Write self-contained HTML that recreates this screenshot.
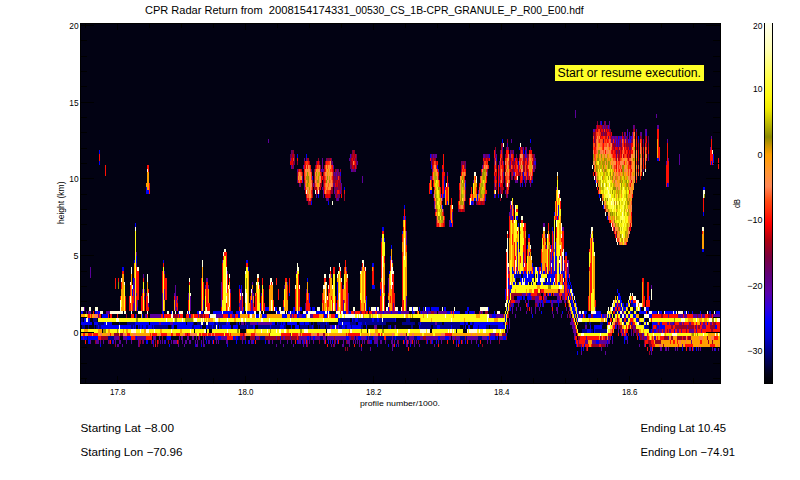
<!DOCTYPE html>
<html><head><meta charset="utf-8"><style>
html,body{margin:0;padding:0;background:#fff;width:800px;height:480px;overflow:hidden}
svg{position:absolute;left:0;top:0;display:block}
text{font-family:"Liberation Sans",sans-serif;fill:#000}
</style></head><body>
<svg width="800" height="480" viewBox="0 0 800 480">
<rect x="0" y="0" width="800" height="480" fill="#fff"/>
<g shape-rendering="crispEdges">
<rect x="81" y="24" width="639" height="359" fill="#020213"/>
<path fill="#00008b" d="M516 274h4v4h-4zM536 274h1v4h-1zM547 274h1v4h-1zM517 282h1v3h-1zM532 282h1v3h-1zM544 282h2v3h-2zM550 282h1v3h-1zM567 282h1v3h-1zM568 293h1v3h-1zM569 296h1v4h-1zM570 300h1v3h-1zM571 303h1v4h-1zM573 303h1v4h-1zM631 303h2v4h-2zM613 307h1v4h-1zM617 307h1v4h-1zM634 307h2v4h-2zM575 311h1v3h-1zM615 311h2v3h-2zM618 311h1v3h-1zM631 311h2v3h-2zM636 311h1v3h-1zM576 314h1v4h-1zM614 314h1v4h-1zM620 314h2v4h-2zM81 318h2v4h-2zM93 318h4v4h-4zM338 318h1v4h-1zM340 318h10v4h-10zM353 318h2v4h-2zM358 318h14v4h-14zM374 318h3v4h-3zM379 318h3v4h-3zM383 318h12v4h-12zM406 318h4v4h-4zM622 318h2v4h-2zM626 318h2v4h-2zM638 318h1v4h-1zM98 322h6v3h-6zM119 322h1v3h-1zM127 322h8v3h-8zM193 322h1v3h-1zM197 322h4v3h-4zM203 322h2v3h-2zM208 322h1v3h-1zM214 322h2v3h-2zM218 322h8v3h-8zM236 322h2v3h-2zM246 322h4v3h-4zM278 322h3v3h-3zM282 322h1v3h-1zM285 322h1v3h-1zM299 322h1v3h-1zM304 322h1v3h-1zM309 322h2v3h-2zM313 322h1v3h-1zM317 322h9v3h-9zM327 322h2v3h-2zM350 322h6v3h-6zM362 322h3v3h-3zM366 322h20v3h-20zM402 322h13v3h-13zM418 322h2v3h-2zM421 322h14v3h-14zM437 322h5v3h-5zM444 322h16v3h-16zM464 322h2v3h-2zM472 322h2v3h-2zM503 322h2v3h-2zM585 322h2v3h-2zM589 322h2v3h-2zM600 322h3v3h-3zM624 322h2v3h-2zM639 322h2v3h-2zM643 322h1v3h-1zM82 325h3v4h-3zM88 325h1v4h-1zM94 325h1v4h-1zM96 325h2v4h-2zM99 325h2v4h-2zM131 325h2v4h-2zM134 325h1v4h-1zM139 325h1v4h-1zM142 325h1v4h-1zM146 325h2v4h-2zM152 325h1v4h-1zM154 325h14v4h-14zM171 325h1v4h-1zM192 325h2v4h-2zM200 325h1v4h-1zM208 325h4v4h-4zM213 325h3v4h-3zM220 325h2v4h-2zM240 325h7v4h-7zM248 325h5v4h-5zM258 325h12v4h-12zM271 325h9v4h-9zM284 325h2v4h-2zM300 325h8v4h-8zM309 325h3v4h-3zM313 325h1v4h-1zM318 325h1v4h-1zM320 325h5v4h-5zM326 325h4v4h-4zM339 325h3v4h-3zM345 325h2v4h-2zM351 325h1v4h-1zM361 325h2v4h-2zM382 325h1v4h-1zM388 325h2v4h-2zM394 325h1v4h-1zM411 325h2v4h-2zM420 325h11v4h-11zM433 325h4v4h-4zM440 325h11v4h-11zM452 325h8v4h-8zM463 325h1v4h-1zM478 325h1v4h-1zM486 325h3v4h-3zM490 325h8v4h-8zM645 325h4v4h-4zM582 329h5v4h-5zM591 329h2v4h-2zM595 329h12v4h-12zM649 329h2v4h-2zM87 336h1v4h-1zM108 336h6v4h-6zM166 336h1v4h-1zM206 336h9v4h-9zM238 336h2v4h-2zM255 336h1v4h-1zM260 336h5v4h-5zM310 336h1v4h-1zM320 336h3v4h-3zM355 336h1v4h-1zM367 336h1v4h-1zM369 336h4v4h-4zM378 336h6v4h-6zM386 336h6v4h-6zM393 336h2v4h-2zM396 336h9v4h-9zM407 336h2v4h-2zM414 336h3v4h-3zM460 336h5v4h-5zM466 336h1v4h-1zM478 336h4v4h-4zM495 336h2v4h-2z"/>
<path fill="#0000cb" d="M630 136h1v3h-1z"/>
<path fill="#0000f5" d="M601 121h1v4h-1zM618 136h1v3h-1zM638 136h1v3h-1zM502 139h1v4h-1zM530 139h1v4h-1zM519 147h1v3h-1zM99 150h1v4h-1zM523 150h1v4h-1zM297 154h1v4h-1zM306 154h1v4h-1zM430 154h1v4h-1zM489 154h1v4h-1zM713 154h1v4h-1zM514 158h1v3h-1zM657 158h2v3h-2zM713 158h1v3h-1zM99 161h1v4h-1zM518 161h1v4h-1zM711 161h1v4h-1zM713 161h1v4h-1zM431 165h1v4h-1zM437 165h1v4h-1zM523 172h1v4h-1zM523 176h1v4h-1zM444 180h1v3h-1zM524 180h1v3h-1zM532 180h1v3h-1zM595 180h1v3h-1zM444 183h1v4h-1zM465 183h1v4h-1zM499 183h1v4h-1zM522 183h1v4h-1zM667 183h1v4h-1zM146 187h1v3h-1zM344 187h1v3h-1zM444 187h1v3h-1zM703 187h2v3h-2zM146 190h3v4h-3zM430 190h2v4h-2zM444 190h1v4h-1zM318 194h1v4h-1zM441 194h1v4h-1zM443 194h2v4h-2zM477 194h1v4h-1zM494 194h1v4h-1zM498 194h1v4h-1zM599 194h1v4h-1zM474 198h2v3h-2zM477 198h1v3h-1zM485 198h1v3h-1zM311 201h1v4h-1zM328 201h1v4h-1zM447 201h1v4h-1zM471 201h2v4h-2zM404 205h1v4h-1zM442 205h1v4h-1zM558 205h1v4h-1zM603 205h1v4h-1zM558 209h1v3h-1zM554 212h1v4h-1zM558 212h1v4h-1zM703 212h1v4h-1zM403 216h1v4h-1zM405 216h1v4h-1zM512 216h1v4h-1zM516 216h2v4h-2zM557 216h1v4h-1zM607 216h1v4h-1zM450 220h1v3h-1zM135 223h1v4h-1zM450 223h2v4h-2zM518 223h1v4h-1zM382 227h2v4h-2zM552 227h1v4h-1zM402 231h1v3h-1zM553 231h1v3h-1zM528 234h2v4h-2zM384 238h1v4h-1zM517 242h1v3h-1zM555 242h1v3h-1zM391 245h1v4h-1zM527 245h1v4h-1zM551 245h1v4h-1zM555 245h1v4h-1zM519 249h1v3h-1zM555 249h1v3h-1zM702 249h2v3h-2zM552 252h1v4h-1zM555 252h1v4h-1zM565 252h2v4h-2zM136 256h1v4h-1zM390 256h1v4h-1zM552 256h1v4h-1zM555 256h2v4h-2zM134 260h1v3h-1zM136 260h1v3h-1zM163 260h1v3h-1zM246 260h2v3h-2zM552 260h1v3h-1zM555 260h1v3h-1zM372 263h2v4h-2zM532 263h1v4h-1zM541 263h1v4h-1zM552 263h1v4h-1zM555 263h1v4h-1zM122 267h2v4h-2zM248 267h1v4h-1zM512 267h1v4h-1zM533 267h2v4h-2zM537 267h2v4h-2zM541 267h1v4h-1zM552 267h1v4h-1zM555 267h1v4h-1zM559 267h1v4h-1zM389 271h1v3h-1zM512 271h2v3h-2zM516 271h1v3h-1zM518 271h1v3h-1zM521 271h2v3h-2zM524 271h2v3h-2zM528 271h1v3h-1zM530 271h1v3h-1zM533 271h2v3h-2zM538 271h1v3h-1zM541 271h1v3h-1zM543 271h2v3h-2zM549 271h1v3h-1zM552 271h1v3h-1zM554 271h2v3h-2zM559 271h1v3h-1zM561 271h1v3h-1zM563 271h1v3h-1zM514 274h2v4h-2zM520 274h1v4h-1zM523 274h4v4h-4zM528 274h6v4h-6zM538 274h3v4h-3zM548 274h7v4h-7zM563 274h2v4h-2zM567 274h2v4h-2zM133 278h1v4h-1zM307 278h1v4h-1zM508 278h1v4h-1zM515 278h1v4h-1zM520 278h2v4h-2zM523 278h1v4h-1zM525 278h7v4h-7zM538 278h2v4h-2zM545 278h1v4h-1zM548 278h2v4h-2zM551 278h3v4h-3zM567 278h1v4h-1zM569 278h1v4h-1zM337 282h1v3h-1zM508 282h1v3h-1zM513 282h2v3h-2zM518 282h1v3h-1zM521 282h1v3h-1zM525 282h3v3h-3zM537 282h4v3h-4zM543 282h1v3h-1zM546 282h4v3h-4zM551 282h2v3h-2zM554 282h1v3h-1zM558 282h2v3h-2zM563 282h1v3h-1zM568 282h1v3h-1zM570 282h1v3h-1zM133 285h1v4h-1zM239 285h1v4h-1zM241 285h1v4h-1zM337 285h1v4h-1zM372 285h3v4h-3zM508 285h1v4h-1zM510 285h2v4h-2zM568 285h2v4h-2zM571 285h1v4h-1zM132 289h1v4h-1zM240 289h1v4h-1zM337 289h1v4h-1zM380 289h1v4h-1zM505 289h1v4h-1zM510 289h1v4h-1zM569 289h1v4h-1zM572 289h1v4h-1zM617 289h1v4h-1zM132 293h1v3h-1zM289 293h1v3h-1zM309 293h1v3h-1zM337 293h1v3h-1zM380 293h1v3h-1zM505 293h1v3h-1zM529 293h1v3h-1zM549 293h2v3h-2zM570 293h1v3h-1zM573 293h1v3h-1zM618 293h2v3h-2zM309 296h1v4h-1zM337 296h1v4h-1zM366 296h1v4h-1zM505 296h1v4h-1zM517 296h5v4h-5zM523 296h2v4h-2zM527 296h4v4h-4zM567 296h1v4h-1zM571 296h1v4h-1zM618 296h3v4h-3zM649 296h1v4h-1zM251 300h1v3h-1zM309 300h1v3h-1zM366 300h1v3h-1zM508 300h1v3h-1zM541 300h2v3h-2zM546 300h4v3h-4zM552 300h1v3h-1zM557 300h2v3h-2zM571 300h2v3h-2zM575 300h1v3h-1zM620 300h2v3h-2zM629 300h1v3h-1zM631 300h2v3h-2zM260 303h1v4h-1zM336 303h1v4h-1zM366 303h1v4h-1zM513 303h1v4h-1zM528 303h1v4h-1zM538 303h1v4h-1zM542 303h1v4h-1zM558 303h1v4h-1zM572 303h1v4h-1zM576 303h1v4h-1zM615 303h1v4h-1zM620 303h1v4h-1zM622 303h2v4h-2zM626 303h2v4h-2zM633 303h3v4h-3zM137 307h1v4h-1zM243 307h1v4h-1zM260 307h1v4h-1zM265 307h4v4h-4zM275 307h2v4h-2zM283 307h1v4h-1zM293 307h2v4h-2zM300 307h2v4h-2zM310 307h1v4h-1zM312 307h3v4h-3zM336 307h1v4h-1zM366 307h1v4h-1zM369 307h1v4h-1zM376 307h1v4h-1zM388 307h1v4h-1zM412 307h1v4h-1zM419 307h1v4h-1zM423 307h1v4h-1zM426 307h4v4h-4zM431 307h8v4h-8zM444 307h2v4h-2zM467 307h2v4h-2zM488 307h1v4h-1zM507 307h1v4h-1zM510 307h1v4h-1zM572 307h3v4h-3zM577 307h1v4h-1zM614 307h1v4h-1zM621 307h1v4h-1zM623 307h3v4h-3zM640 307h1v4h-1zM646 307h3v4h-3zM81 311h2v3h-2zM95 311h2v3h-2zM98 311h2v3h-2zM162 311h2v3h-2zM171 311h1v3h-1zM178 311h1v3h-1zM188 311h1v3h-1zM197 311h2v3h-2zM201 311h2v3h-2zM213 311h9v3h-9zM223 311h10v3h-10zM236 311h4v3h-4zM242 311h2v3h-2zM247 311h7v3h-7zM277 311h3v3h-3zM288 311h2v3h-2zM291 311h4v3h-4zM296 311h1v3h-1zM298 311h2v3h-2zM306 311h2v3h-2zM316 311h9v3h-9zM327 311h1v3h-1zM329 311h1v3h-1zM343 311h3v3h-3zM349 311h2v3h-2zM383 311h1v3h-1zM391 311h1v3h-1zM398 311h3v3h-3zM412 311h2v3h-2zM421 311h1v3h-1zM427 311h1v3h-1zM447 311h3v3h-3zM452 311h1v3h-1zM454 311h6v3h-6zM465 311h3v3h-3zM469 311h5v3h-5zM494 311h1v3h-1zM541 311h1v3h-1zM562 311h1v3h-1zM573 311h2v3h-2zM577 311h1v3h-1zM584 311h3v3h-3zM596 311h5v3h-5zM619 311h1v3h-1zM630 311h1v3h-1zM639 311h7v3h-7zM648 311h1v3h-1zM652 311h5v3h-5zM659 311h3v3h-3zM665 311h8v3h-8zM674 311h2v3h-2zM684 311h2v3h-2zM688 311h1v3h-1zM692 311h1v3h-1zM700 311h1v3h-1zM709 311h2v3h-2zM716 311h4v3h-4zM102 314h6v4h-6zM135 314h1v4h-1zM142 314h1v4h-1zM163 314h1v4h-1zM189 314h1v4h-1zM209 314h1v4h-1zM228 314h2v4h-2zM234 314h1v4h-1zM238 314h2v4h-2zM256 314h3v4h-3zM262 314h4v4h-4zM282 314h5v4h-5zM297 314h2v4h-2zM302 314h4v4h-4zM324 314h3v4h-3zM335 314h3v4h-3zM492 314h4v4h-4zM505 314h1v4h-1zM532 314h1v4h-1zM574 314h1v4h-1zM578 314h1v4h-1zM581 314h2v4h-2zM585 314h1v4h-1zM588 314h3v4h-3zM593 314h8v4h-8zM602 314h2v4h-2zM608 314h1v4h-1zM624 314h1v4h-1zM629 314h1v4h-1zM633 314h3v4h-3zM649 314h3v4h-3zM84 318h2v4h-2zM88 318h2v4h-2zM339 318h1v4h-1zM352 318h1v4h-1zM355 318h3v4h-3zM372 318h2v4h-2zM377 318h2v4h-2zM395 318h1v4h-1zM505 318h1v4h-1zM577 318h1v4h-1zM607 318h1v4h-1zM636 318h2v4h-2zM644 318h1v4h-1zM81 322h11v3h-11zM94 322h4v3h-4zM104 322h2v3h-2zM107 322h5v3h-5zM135 322h14v3h-14zM150 322h9v3h-9zM161 322h9v3h-9zM173 322h13v3h-13zM187 322h6v3h-6zM209 322h5v3h-5zM216 322h2v3h-2zM226 322h1v3h-1zM228 322h2v3h-2zM239 322h1v3h-1zM257 322h1v3h-1zM272 322h3v3h-3zM277 322h1v3h-1zM281 322h1v3h-1zM283 322h2v3h-2zM287 322h10v3h-10zM300 322h4v3h-4zM305 322h4v3h-4zM326 322h1v3h-1zM338 322h4v3h-4zM343 322h7v3h-7zM358 322h4v3h-4zM365 322h1v3h-1zM420 322h1v3h-1zM460 322h4v3h-4zM466 322h2v3h-2zM470 322h2v3h-2zM474 322h29v3h-29zM607 322h1v3h-1zM631 322h1v3h-1zM646 322h1v3h-1zM652 322h5v3h-5zM660 322h2v3h-2zM673 322h1v3h-1zM707 322h1v3h-1zM98 325h1v4h-1zM101 325h18v4h-18zM120 325h11v4h-11zM133 325h1v4h-1zM135 325h1v4h-1zM138 325h1v4h-1zM140 325h2v4h-2zM143 325h3v4h-3zM148 325h4v4h-4zM153 325h1v4h-1zM172 325h2v4h-2zM177 325h15v4h-15zM194 325h6v4h-6zM201 325h1v4h-1zM206 325h2v4h-2zM212 325h1v4h-1zM217 325h1v4h-1zM219 325h1v4h-1zM222 325h9v4h-9zM233 325h5v4h-5zM247 325h1v4h-1zM253 325h2v4h-2zM270 325h1v4h-1zM280 325h4v4h-4zM291 325h1v4h-1zM295 325h4v4h-4zM312 325h1v4h-1zM332 325h3v4h-3zM337 325h1v4h-1zM342 325h3v4h-3zM347 325h4v4h-4zM352 325h9v4h-9zM366 325h1v4h-1zM390 325h1v4h-1zM419 325h1v4h-1zM437 325h3v4h-3zM451 325h1v4h-1zM465 325h1v4h-1zM468 325h2v4h-2zM473 325h5v4h-5zM479 325h7v4h-7zM498 325h7v4h-7zM507 325h1v4h-1zM590 325h1v4h-1zM594 325h8v4h-8zM615 325h1v4h-1zM644 325h1v4h-1zM652 325h1v4h-1zM657 325h2v4h-2zM660 325h5v4h-5zM715 325h2v4h-2zM587 329h4v4h-4zM594 329h1v4h-1zM651 329h1v4h-1zM654 329h2v4h-2zM674 329h1v4h-1zM506 333h1v3h-1zM626 333h1v3h-1zM638 333h1v3h-1zM81 336h2v4h-2zM84 336h3v4h-3zM88 336h10v4h-10zM127 336h4v4h-4zM136 336h1v4h-1zM167 336h4v4h-4zM218 336h3v4h-3zM233 336h2v4h-2zM236 336h2v4h-2zM280 336h1v4h-1zM307 336h2v4h-2zM313 336h2v4h-2zM346 336h3v4h-3zM358 336h3v4h-3zM366 336h1v4h-1zM373 336h1v4h-1zM395 336h1v4h-1zM417 336h3v4h-3zM438 336h2v4h-2zM445 336h4v4h-4zM487 336h2v4h-2zM490 336h5v4h-5zM497 336h1v4h-1zM503 336h3v4h-3zM612 336h1v4h-1zM624 336h2v4h-2zM627 336h1v4h-1zM639 336h1v4h-1zM88 340h2v4h-2zM112 340h1v4h-1zM146 340h2v4h-2zM152 340h1v4h-1zM165 340h1v4h-1zM206 340h1v4h-1zM212 340h1v4h-1zM236 340h1v4h-1zM245 340h1v4h-1zM249 340h1v4h-1zM253 340h1v4h-1zM265 340h1v4h-1zM297 340h1v4h-1zM302 340h1v4h-1zM305 340h1v4h-1zM328 340h1v4h-1zM332 340h1v4h-1zM337 340h1v4h-1zM370 340h2v4h-2zM404 340h1v4h-1zM427 340h1v4h-1zM432 340h1v4h-1zM436 340h1v4h-1zM456 340h1v4h-1zM459 340h1v4h-1zM465 340h1v4h-1zM575 340h1v4h-1zM596 340h3v4h-3zM607 340h1v4h-1zM624 340h1v4h-1zM100 344h1v3h-1zM169 344h1v3h-1zM195 344h1v3h-1zM201 344h1v3h-1zM227 344h1v3h-1zM377 344h1v3h-1zM388 344h1v3h-1zM396 344h1v3h-1zM410 344h1v3h-1zM478 344h1v3h-1zM576 344h1v3h-1zM584 344h1v3h-1zM581 347h1v4h-1zM583 347h1v4h-1zM651 347h1v4h-1zM682 347h1v4h-1zM693 347h1v4h-1zM696 347h1v4h-1zM715 347h1v4h-1zM577 351h1v4h-1z"/>
<path fill="#0500fc" d="M525 150h1v4h-1z"/>
<path fill="#1300f2" d="M625 136h1v3h-1z"/>
<path fill="#2200e8" d="M628 139h1v4h-1zM630 139h1v4h-1zM496 158h1v3h-1zM535 161h1v4h-1zM340 172h1v4h-1zM312 176h1v4h-1z"/>
<path fill="#3000de" d="M608 125h1v4h-1zM627 132h1v4h-1zM621 136h1v3h-1zM614 139h1v4h-1zM616 139h1v4h-1zM618 139h1v4h-1z"/>
<path fill="#3b00d0" d="M646 132h1v4h-1zM618 143h1v4h-1zM525 154h1v4h-1zM514 172h1v4h-1z"/>
<path fill="#4700c1" d="M593 129h1v3h-1zM616 143h1v4h-1zM350 154h1v4h-1zM534 161h1v4h-1zM321 169h1v3h-1z"/>
<path fill="#5300b3" d="M631 136h1v3h-1zM507 143h1v4h-1zM433 154h1v4h-1zM291 165h1v4h-1zM302 180h1v3h-1zM334 190h1v4h-1zM337 198h1v3h-1z"/>
<path fill="#5a00a6" d="M603 125h1v4h-1zM629 136h1v3h-1zM621 139h1v4h-1zM484 154h1v4h-1zM510 154h1v4h-1zM526 154h1v4h-1zM499 161h1v4h-1zM333 165h1v4h-1zM351 169h1v3h-1zM336 172h1v4h-1zM340 180h1v3h-1z"/>
<path fill="#5c009a" d="M575 110h1v4h-1zM575 114h1v4h-1zM656 114h1v4h-1zM609 121h1v4h-1zM657 125h2v4h-2zM594 129h1v3h-1zM627 129h1v3h-1zM636 129h1v3h-1zM645 129h2v3h-2zM624 132h1v4h-1zM629 132h1v4h-1zM632 132h1v4h-1zM641 132h1v4h-1zM645 132h1v4h-1zM612 136h2v3h-2zM615 136h2v3h-2zM619 136h2v3h-2zM711 136h1v3h-1zM268 139h1v4h-1zM511 139h1v4h-1zM624 139h1v4h-1zM629 139h1v4h-1zM667 139h1v4h-1zM502 147h1v3h-1zM523 147h1v3h-1zM526 147h1v3h-1zM530 147h1v3h-1zM710 147h1v3h-1zM510 150h1v4h-1zM513 150h1v4h-1zM431 154h1v4h-1zM435 154h2v4h-2zM483 154h1v4h-1zM496 154h1v4h-1zM679 154h1v4h-1zM290 158h1v3h-1zM304 158h1v3h-1zM322 158h1v3h-1zM349 158h1v3h-1zM648 158h1v3h-1zM668 158h1v3h-1zM679 158h1v3h-1zM322 161h1v4h-1zM357 161h1v4h-1zM431 161h1v4h-1zM510 161h1v4h-1zM666 161h1v4h-1zM679 161h1v4h-1zM303 165h1v4h-1zM322 165h1v4h-1zM482 165h1v4h-1zM297 169h1v3h-1zM322 169h2v3h-2zM355 169h1v3h-1zM432 169h1v3h-1zM438 169h1v3h-1zM442 169h1v3h-1zM533 169h1v3h-1zM334 172h1v4h-1zM447 172h1v4h-1zM503 172h1v4h-1zM513 172h1v4h-1zM527 172h1v4h-1zM362 176h1v4h-1zM430 176h2v4h-2zM444 176h1v4h-1zM499 176h1v4h-1zM362 180h1v3h-1zM465 180h1v3h-1zM473 180h1v3h-1zM515 180h1v3h-1zM517 180h1v3h-1zM313 183h1v4h-1zM341 183h1v4h-1zM448 183h1v4h-1zM520 183h1v4h-1zM525 183h1v4h-1zM530 183h1v4h-1zM668 183h1v4h-1zM304 187h1v3h-1zM322 187h1v3h-1zM341 187h1v3h-1zM465 187h1v3h-1zM556 187h1v3h-1zM323 190h1v4h-1zM340 190h1v4h-1zM478 190h1v4h-1zM505 190h1v4h-1zM316 194h1v4h-1zM323 194h1v4h-1zM433 194h1v4h-1zM485 194h1v4h-1zM442 198h1v3h-1zM434 201h1v4h-1zM473 201h1v4h-1zM510 201h1v4h-1zM434 205h1v4h-1zM511 205h1v4h-1zM513 205h1v4h-1zM510 209h2v3h-2zM452 212h1v4h-1zM509 212h3v4h-3zM452 216h1v4h-1zM510 216h2v4h-2zM449 220h1v3h-1zM449 223h1v4h-1zM543 223h2v4h-2zM562 227h2v4h-2zM406 231h1v3h-1zM406 234h1v4h-1zM545 234h1v4h-1zM553 234h1v4h-1zM590 234h1v4h-1zM381 238h1v4h-1zM406 238h1v4h-1zM553 238h1v4h-1zM593 238h1v4h-1zM406 242h1v3h-1zM553 242h1v3h-1zM517 245h1v4h-1zM546 245h1v4h-1zM553 245h1v4h-1zM517 249h1v3h-1zM553 249h1v3h-1zM136 252h1v4h-1zM517 252h1v4h-1zM523 252h1v4h-1zM529 252h1v4h-1zM550 252h1v4h-1zM517 256h1v4h-1zM523 256h1v4h-1zM550 256h1v4h-1zM553 256h1v4h-1zM559 256h1v4h-1zM562 256h1v4h-1zM222 260h1v3h-1zM392 260h1v3h-1zM517 260h1v3h-1zM523 260h1v3h-1zM550 260h2v3h-2zM553 260h1v3h-1zM556 260h1v3h-1zM562 260h1v3h-1zM567 260h2v3h-2zM136 263h1v4h-1zM517 263h1v4h-1zM523 263h1v4h-1zM550 263h1v4h-1zM553 263h1v4h-1zM556 263h1v4h-1zM559 263h1v4h-1zM562 263h1v4h-1zM564 263h1v4h-1zM568 263h1v4h-1zM90 267h1v4h-1zM346 267h1v4h-1zM361 267h1v4h-1zM508 267h1v4h-1zM517 267h1v4h-1zM546 267h1v4h-1zM550 267h1v4h-1zM553 267h1v4h-1zM556 267h1v4h-1zM562 267h1v4h-1zM564 267h1v4h-1zM567 267h2v4h-2zM90 271h1v3h-1zM164 271h1v3h-1zM227 271h1v3h-1zM296 271h1v3h-1zM508 271h1v3h-1zM546 271h1v3h-1zM550 271h1v3h-1zM553 271h1v3h-1zM556 271h1v3h-1zM562 271h1v3h-1zM564 271h1v3h-1zM567 271h2v3h-2zM90 274h1v4h-1zM143 274h1v4h-1zM331 274h1v4h-1zM134 278h1v4h-1zM206 278h2v4h-2zM388 278h1v4h-1zM133 282h2v3h-2zM221 282h1v3h-1zM252 282h1v3h-1zM287 282h1v3h-1zM388 282h1v3h-1zM134 285h1v4h-1zM175 285h1v4h-1zM205 285h1v4h-1zM208 285h1v4h-1zM221 285h1v4h-1zM284 285h1v4h-1zM343 285h1v4h-1zM388 285h1v4h-1zM509 285h1v4h-1zM564 285h1v4h-1zM567 285h1v4h-1zM651 285h1v4h-1zM134 289h1v4h-1zM142 289h1v4h-1zM144 289h1v4h-1zM164 289h1v4h-1zM175 289h1v4h-1zM221 289h1v4h-1zM230 289h1v4h-1zM241 289h1v4h-1zM252 289h1v4h-1zM306 289h1v4h-1zM388 289h1v4h-1zM509 289h1v4h-1zM564 289h1v4h-1zM567 289h1v4h-1zM134 293h1v3h-1zM136 293h1v3h-1zM146 293h1v3h-1zM162 293h1v3h-1zM164 293h1v3h-1zM174 293h2v3h-2zM188 293h1v3h-1zM221 293h1v3h-1zM241 293h1v3h-1zM252 293h2v3h-2zM261 293h1v3h-1zM348 293h1v3h-1zM509 293h1v3h-1zM522 293h4v3h-4zM527 293h2v3h-2zM530 293h1v3h-1zM543 293h1v3h-1zM547 293h1v3h-1zM554 293h5v3h-5zM562 293h3v3h-3zM134 296h1v4h-1zM144 296h1v4h-1zM162 296h1v4h-1zM164 296h1v4h-1zM175 296h2v4h-2zM188 296h1v4h-1zM190 296h1v4h-1zM221 296h1v4h-1zM241 296h1v4h-1zM252 296h1v4h-1zM348 296h1v4h-1zM406 296h1v4h-1zM509 296h1v4h-1zM531 296h1v4h-1zM535 296h4v4h-4zM544 296h3v4h-3zM557 296h3v4h-3zM563 296h2v4h-2zM134 300h1v3h-1zM137 300h1v3h-1zM162 300h1v3h-1zM175 300h1v3h-1zM177 300h1v3h-1zM190 300h1v3h-1zM203 300h1v3h-1zM221 300h1v3h-1zM240 300h2v3h-2zM252 300h1v3h-1zM343 300h1v3h-1zM348 300h1v3h-1zM388 300h1v3h-1zM406 300h1v3h-1zM515 300h5v3h-5zM525 300h1v3h-1zM528 300h1v3h-1zM535 300h6v3h-6zM551 300h1v3h-1zM553 300h4v3h-4zM559 300h3v3h-3zM564 300h2v3h-2zM617 300h1v3h-1zM133 303h2v4h-2zM137 303h1v4h-1zM148 303h1v4h-1zM162 303h1v4h-1zM175 303h1v4h-1zM190 303h1v4h-1zM203 303h1v4h-1zM221 303h1v4h-1zM239 303h3v4h-3zM251 303h2v4h-2zM305 303h1v4h-1zM343 303h1v4h-1zM348 303h1v4h-1zM393 303h1v4h-1zM406 303h1v4h-1zM511 303h2v4h-2zM518 303h1v4h-1zM527 303h1v4h-1zM537 303h1v4h-1zM540 303h1v4h-1zM543 303h1v4h-1zM551 303h2v4h-2zM616 303h1v4h-1zM618 303h2v4h-2zM84 307h1v4h-1zM133 307h2v4h-2zM162 307h1v4h-1zM175 307h2v4h-2zM190 307h1v4h-1zM203 307h1v4h-1zM240 307h2v4h-2zM251 307h2v4h-2zM305 307h1v4h-1zM343 307h1v4h-1zM348 307h1v4h-1zM393 307h1v4h-1zM406 307h1v4h-1zM512 307h1v4h-1zM516 307h1v4h-1zM520 307h1v4h-1zM531 307h1v4h-1zM535 307h1v4h-1zM539 307h1v4h-1zM556 307h2v4h-2zM566 307h1v4h-1zM569 307h1v4h-1zM595 307h1v4h-1zM620 307h1v4h-1zM86 311h1v3h-1zM88 311h3v3h-3zM97 311h1v3h-1zM106 311h4v3h-4zM348 311h1v3h-1zM354 311h1v3h-1zM360 311h1v3h-1zM372 311h3v3h-3zM377 311h6v3h-6zM384 311h7v3h-7zM392 311h6v3h-6zM401 311h8v3h-8zM414 311h1v3h-1zM420 311h1v3h-1zM422 311h5v3h-5zM428 311h3v3h-3zM434 311h3v3h-3zM438 311h9v3h-9zM450 311h1v3h-1zM474 311h1v3h-1zM480 311h1v3h-1zM482 311h1v3h-1zM512 311h1v3h-1zM526 311h1v3h-1zM531 311h1v3h-1zM535 311h1v3h-1zM552 311h1v3h-1zM557 311h1v3h-1zM570 311h1v3h-1zM578 311h1v3h-1zM622 311h2v3h-2zM98 314h1v4h-1zM145 314h2v4h-2zM150 314h11v4h-11zM179 314h1v4h-1zM190 314h1v4h-1zM198 314h1v4h-1zM216 314h7v4h-7zM232 314h2v4h-2zM266 314h1v4h-1zM290 314h2v4h-2zM293 314h1v4h-1zM299 314h3v4h-3zM310 314h3v4h-3zM489 314h3v4h-3zM496 314h7v4h-7zM515 314h1v4h-1zM553 314h1v4h-1zM561 314h1v4h-1zM567 314h1v4h-1zM570 314h1v4h-1zM579 314h2v4h-2zM604 314h3v4h-3zM610 314h1v4h-1zM625 314h1v4h-1zM628 314h1v4h-1zM668 314h1v4h-1zM678 314h5v4h-5zM684 314h3v4h-3zM693 314h4v4h-4zM698 314h3v4h-3zM702 314h3v4h-3zM710 314h1v4h-1zM713 314h7v4h-7zM509 318h1v4h-1zM571 318h2v4h-2zM159 322h2v3h-2zM170 322h3v3h-3zM227 322h1v3h-1zM241 322h3v3h-3zM245 322h1v3h-1zM250 322h7v3h-7zM258 322h14v3h-14zM435 322h2v3h-2zM509 322h1v3h-1zM570 322h4v3h-4zM617 322h1v3h-1zM657 322h1v3h-1zM667 322h2v3h-2zM670 322h3v3h-3zM679 322h3v3h-3zM683 322h1v3h-1zM689 322h2v3h-2zM700 322h1v3h-1zM703 322h2v3h-2zM710 322h2v3h-2zM330 325h2v4h-2zM336 325h1v4h-1zM338 325h1v4h-1zM374 325h3v4h-3zM395 325h1v4h-1zM509 325h1v4h-1zM572 325h3v4h-3zM585 325h2v4h-2zM616 325h1v4h-1zM618 325h1v4h-1zM633 325h2v4h-2zM659 325h1v4h-1zM687 325h1v4h-1zM696 325h1v4h-1zM702 325h4v4h-4zM507 329h1v4h-1zM573 329h3v4h-3zM618 329h1v4h-1zM622 329h2v4h-2zM631 329h1v4h-1zM635 329h1v4h-1zM656 329h2v4h-2zM659 329h3v4h-3zM663 329h2v4h-2zM669 329h2v4h-2zM677 329h2v4h-2zM681 329h1v4h-1zM689 329h5v4h-5zM696 329h1v4h-1zM701 329h1v4h-1zM491 333h4v3h-4zM574 333h2v3h-2zM621 333h1v3h-1zM623 333h1v3h-1zM631 333h1v3h-1zM633 333h1v3h-1zM642 333h2v3h-2zM83 336h1v4h-1zM114 336h5v4h-5zM123 336h4v4h-4zM135 336h1v4h-1zM137 336h9v4h-9zM153 336h3v4h-3zM159 336h1v4h-1zM179 336h1v4h-1zM181 336h2v4h-2zM187 336h2v4h-2zM192 336h2v4h-2zM196 336h1v4h-1zM199 336h1v4h-1zM203 336h1v4h-1zM205 336h1v4h-1zM215 336h3v4h-3zM221 336h6v4h-6zM242 336h2v4h-2zM256 336h3v4h-3zM276 336h1v4h-1zM283 336h2v4h-2zM290 336h1v4h-1zM299 336h8v4h-8zM309 336h1v4h-1zM311 336h2v4h-2zM315 336h5v4h-5zM323 336h3v4h-3zM327 336h7v4h-7zM335 336h11v4h-11zM349 336h2v4h-2zM354 336h1v4h-1zM356 336h2v4h-2zM361 336h5v4h-5zM368 336h1v4h-1zM374 336h4v4h-4zM392 336h1v4h-1zM405 336h2v4h-2zM409 336h5v4h-5zM420 336h3v4h-3zM426 336h12v4h-12zM440 336h5v4h-5zM449 336h2v4h-2zM452 336h3v4h-3zM456 336h4v4h-4zM467 336h11v4h-11zM482 336h5v4h-5zM499 336h4v4h-4zM574 336h1v4h-1zM586 336h1v4h-1zM608 336h1v4h-1zM610 336h1v4h-1zM626 336h1v4h-1zM642 336h1v4h-1zM644 336h3v4h-3zM654 336h2v4h-2zM668 336h1v4h-1zM90 340h1v4h-1zM96 340h3v4h-3zM100 340h1v4h-1zM103 340h1v4h-1zM108 340h1v4h-1zM113 340h1v4h-1zM115 340h1v4h-1zM119 340h2v4h-2zM126 340h1v4h-1zM131 340h1v4h-1zM138 340h1v4h-1zM143 340h1v4h-1zM153 340h1v4h-1zM160 340h1v4h-1zM162 340h1v4h-1zM164 340h1v4h-1zM171 340h1v4h-1zM173 340h4v4h-4zM182 340h1v4h-1zM185 340h2v4h-2zM189 340h2v4h-2zM195 340h1v4h-1zM197 340h1v4h-1zM201 340h1v4h-1zM203 340h1v4h-1zM208 340h2v4h-2zM216 340h1v4h-1zM218 340h1v4h-1zM226 340h2v4h-2zM242 340h1v4h-1zM248 340h1v4h-1zM251 340h2v4h-2zM268 340h2v4h-2zM272 340h1v4h-1zM280 340h1v4h-1zM287 340h1v4h-1zM291 340h1v4h-1zM298 340h3v4h-3zM303 340h1v4h-1zM307 340h1v4h-1zM309 340h1v4h-1zM313 340h1v4h-1zM324 340h1v4h-1zM330 340h1v4h-1zM334 340h1v4h-1zM343 340h1v4h-1zM347 340h3v4h-3zM353 340h1v4h-1zM355 340h1v4h-1zM357 340h1v4h-1zM359 340h1v4h-1zM362 340h1v4h-1zM364 340h1v4h-1zM368 340h2v4h-2zM374 340h4v4h-4zM380 340h2v4h-2zM385 340h1v4h-1zM391 340h2v4h-2zM394 340h1v4h-1zM397 340h1v4h-1zM406 340h1v4h-1zM408 340h1v4h-1zM410 340h2v4h-2zM414 340h1v4h-1zM416 340h1v4h-1zM431 340h1v4h-1zM438 340h1v4h-1zM441 340h1v4h-1zM458 340h1v4h-1zM462 340h1v4h-1zM471 340h1v4h-1zM476 340h1v4h-1zM487 340h1v4h-1zM490 340h1v4h-1zM578 340h1v4h-1zM585 340h3v4h-3zM592 340h4v4h-4zM599 340h8v4h-8zM608 340h2v4h-2zM612 340h1v4h-1zM627 340h1v4h-1zM691 340h1v4h-1zM117 344h2v3h-2zM122 344h1v3h-1zM138 344h1v3h-1zM153 344h1v3h-1zM178 344h1v3h-1zM184 344h1v3h-1zM196 344h2v3h-2zM203 344h2v3h-2zM276 344h1v3h-1zM283 344h1v3h-1zM293 344h1v3h-1zM303 344h1v3h-1zM306 344h1v3h-1zM331 344h1v3h-1zM334 344h1v3h-1zM342 344h2v3h-2zM349 344h1v3h-1zM359 344h1v3h-1zM392 344h2v3h-2zM398 344h1v3h-1zM406 344h2v3h-2zM414 344h1v3h-1zM419 344h1v3h-1zM434 344h1v3h-1zM456 344h1v3h-1zM581 344h1v3h-1zM605 344h1v3h-1zM607 344h1v3h-1zM639 344h1v3h-1zM644 344h1v3h-1zM682 344h1v3h-1zM361 347h1v4h-1zM370 347h1v4h-1zM392 347h1v4h-1zM601 347h1v4h-1zM650 347h1v4h-1zM660 347h2v4h-2zM665 347h2v4h-2zM668 347h1v4h-1zM675 347h1v4h-1zM677 347h1v4h-1zM689 347h2v4h-2zM698 347h1v4h-1zM700 347h1v4h-1zM712 347h1v4h-1zM714 347h1v4h-1zM718 347h1v4h-1zM581 351h1v4h-1zM605 351h1v4h-1zM651 351h1v4h-1z"/>
<path fill="#5d008e" d="M633 125h1v4h-1zM632 136h1v3h-1zM527 158h1v3h-1zM503 161h1v4h-1zM293 165h1v4h-1zM518 165h1v4h-1zM352 169h1v3h-1zM529 180h1v3h-1zM335 194h1v4h-1zM327 198h1v3h-1z"/>
<path fill="#5e0083" d="M600 121h1v4h-1zM605 121h1v4h-1zM640 132h1v4h-1zM614 136h1v3h-1zM611 139h1v4h-1zM638 139h1v4h-1zM643 139h1v4h-1zM508 147h1v3h-1zM629 147h1v3h-1zM487 154h2v4h-2zM306 158h1v3h-1zM534 158h1v3h-1zM332 161h1v4h-1zM499 165h1v4h-1zM337 169h1v3h-1zM338 172h1v4h-1zM336 176h1v4h-1zM531 180h1v3h-1zM507 194h1v4h-1zM338 198h1v3h-1z"/>
<path fill="#620076" d="M605 125h1v4h-1zM603 132h1v4h-1zM619 139h1v4h-1zM626 139h1v4h-1zM506 147h1v3h-1zM495 150h1v4h-1zM500 150h1v4h-1zM502 150h1v4h-1zM526 150h1v4h-1zM616 150h1v4h-1zM509 154h1v4h-1zM534 154h1v4h-1zM616 154h1v4h-1zM326 158h1v3h-1zM431 158h1v3h-1zM465 165h1v4h-1zM533 165h1v4h-1zM535 165h1v4h-1zM354 169h1v3h-1zM487 172h1v4h-1zM302 176h1v4h-1zM494 176h1v4h-1zM297 180h1v3h-1zM516 180h1v3h-1zM522 180h1v3h-1zM304 183h1v4h-1zM333 183h2v4h-2zM326 198h1v3h-1zM458 209h1v3h-1z"/>
<path fill="#690068" d="M634 125h1v4h-1zM609 129h1v3h-1zM608 136h1v3h-1zM626 136h1v3h-1zM617 139h1v4h-1zM631 139h1v4h-1zM621 143h1v4h-1zM629 143h1v4h-1zM291 150h1v4h-1zM619 150h1v4h-1zM434 154h1v4h-1zM516 154h1v4h-1zM648 154h1v4h-1zM331 158h1v3h-1zM355 158h1v3h-1zM535 158h1v3h-1zM461 161h1v4h-1zM463 161h1v4h-1zM465 161h1v4h-1zM350 165h1v4h-1zM311 169h1v3h-1zM518 169h1v3h-1zM643 169h1v3h-1zM335 172h1v4h-1zM512 176h1v4h-1zM299 183h1v4h-1zM494 183h1v4h-1zM505 183h1v4h-1zM334 187h1v3h-1zM337 187h1v3h-1zM494 187h1v3h-1zM500 190h1v4h-1zM338 194h2v4h-2zM336 198h1v3h-1zM476 201h1v4h-1z"/>
<path fill="#6f005a" d="M596 125h1v4h-1zM607 125h1v4h-1zM611 136h1v3h-1zM641 136h1v3h-1zM648 136h1v3h-1zM594 139h1v4h-1zM612 139h1v4h-1zM648 139h1v4h-1zM619 143h1v4h-1zM630 143h1v4h-1zM630 147h1v3h-1zM291 154h1v4h-1zM294 154h1v4h-1zM356 154h1v4h-1zM485 154h2v4h-2zM495 154h1v4h-1zM350 158h1v3h-1zM494 158h1v3h-1zM523 158h1v3h-1zM294 161h1v4h-1zM316 161h1v4h-1zM331 161h1v4h-1zM356 161h1v4h-1zM494 161h1v4h-1zM533 161h1v4h-1zM510 165h1v4h-1zM314 169h1v3h-1zM338 169h1v3h-1zM353 169h1v3h-1zM513 169h1v3h-1zM339 172h1v4h-1zM499 172h1v4h-1zM334 176h1v4h-1zM340 176h1v4h-1zM503 176h1v4h-1zM524 176h1v4h-1zM532 176h1v4h-1zM526 180h1v3h-1zM300 183h1v4h-1zM306 198h1v3h-1zM328 198h1v3h-1zM435 209h1v3h-1z"/>
<path fill="#76004c" d="M602 125h1v4h-1zM604 125h1v4h-1zM609 125h1v4h-1zM594 136h1v3h-1zM627 136h1v3h-1zM617 143h1v4h-1zM628 143h1v4h-1zM522 147h1v3h-1zM614 147h1v3h-1zM618 147h1v3h-1zM292 150h1v4h-1zM352 150h1v4h-1zM351 154h1v4h-1zM505 154h1v4h-1zM329 158h1v3h-1zM356 158h1v3h-1zM351 165h1v4h-1zM356 165h1v4h-1zM461 165h1v4h-1zM496 165h1v4h-1zM336 169h1v3h-1zM487 169h1v3h-1zM534 169h1v3h-1zM333 172h1v4h-1zM337 172h1v4h-1zM525 176h1v4h-1zM527 176h1v4h-1zM595 176h1v4h-1zM499 180h1v3h-1zM509 183h1v4h-1zM335 187h2v3h-2zM506 187h1v3h-1zM336 190h1v4h-1zM495 194h1v4h-1zM464 201h1v4h-1zM443 209h1v3h-1zM614 227h1v4h-1zM616 234h1v4h-1z"/>
<path fill="#7c003e" d="M603 129h1v3h-1zM605 129h1v3h-1zM601 132h1v4h-1zM623 136h1v3h-1zM603 139h1v4h-1zM620 143h1v4h-1zM643 143h1v4h-1zM511 150h2v4h-2zM290 154h1v4h-1zM432 154h1v4h-1zM527 154h1v4h-1zM294 158h1v3h-1zM510 158h1v3h-1zM517 158h1v3h-1zM319 161h1v4h-1zM350 161h1v4h-1zM462 161h1v4h-1zM483 161h1v4h-1zM496 161h1v4h-1zM524 161h1v4h-1zM527 161h1v4h-1zM354 165h1v4h-1zM509 165h1v4h-1zM523 165h1v4h-1zM534 165h1v4h-1zM297 172h1v4h-1zM481 172h1v4h-1zM522 172h1v4h-1zM337 176h1v4h-1zM314 180h1v3h-1zM334 180h1v3h-1zM503 180h1v3h-1zM323 183h1v4h-1zM338 183h1v4h-1zM496 187h1v3h-1zM316 190h1v4h-1zM319 190h1v4h-1zM331 190h1v4h-1zM335 190h1v4h-1zM337 194h1v4h-1zM311 198h1v3h-1zM484 201h1v4h-1z"/>
<path fill="#880032" d="M597 121h1v4h-1zM606 125h1v4h-1zM610 129h1v3h-1zM633 129h1v3h-1zM594 132h1v4h-1zM605 132h2v4h-2zM624 136h1v3h-1zM645 136h1v3h-1zM613 143h1v4h-1zM624 143h1v4h-1zM626 143h1v4h-1zM646 143h1v4h-1zM621 147h1v3h-1zM354 150h1v4h-1zM502 154h1v4h-1zM519 154h1v4h-1zM618 154h1v4h-1zM327 158h2v3h-2zM432 158h1v3h-1zM435 158h1v3h-1zM524 158h1v3h-1zM513 161h2v4h-2zM638 161h1v4h-1zM315 165h1v4h-1zM513 165h1v4h-1zM320 169h1v3h-1zM461 169h1v3h-1zM499 169h1v3h-1zM512 169h1v3h-1zM523 169h1v3h-1zM314 172h1v4h-1zM519 172h2v4h-2zM297 176h1v4h-1zM323 176h1v4h-1zM335 176h1v4h-1zM511 176h1v4h-1zM333 180h1v3h-1zM314 183h1v4h-1zM321 183h1v4h-1zM340 183h1v4h-1zM323 187h1v3h-1zM339 187h1v3h-1zM495 187h1v3h-1zM500 187h1v3h-1zM508 190h1v4h-1zM465 194h1v4h-1zM309 201h1v4h-1zM436 216h1v4h-1z"/>
<path fill="#950026" d="M604 121h1v4h-1zM595 129h1v3h-1zM600 129h1v3h-1zM604 132h1v4h-1zM610 132h1v4h-1zM625 132h1v4h-1zM617 136h1v3h-1zM640 136h1v3h-1zM507 139h1v4h-1zM627 139h1v4h-1zM632 139h1v4h-1zM645 139h1v4h-1zM501 143h2v4h-2zM614 143h2v4h-2zM627 143h1v4h-1zM495 147h1v3h-1zM520 147h1v3h-1zM525 147h1v3h-1zM293 150h1v4h-1zM618 150h1v4h-1zM628 150h1v4h-1zM354 154h1v4h-1zM523 154h2v4h-2zM533 154h1v4h-1zM307 158h1v3h-1zM318 158h1v3h-1zM353 158h1v3h-1zM434 158h1v3h-1zM502 158h1v3h-1zM616 158h1v3h-1zM293 161h1v4h-1zM297 161h1v4h-1zM304 161h1v4h-1zM351 161h1v4h-1zM464 161h1v4h-1zM501 161h1v4h-1zM512 161h1v4h-1zM320 165h1v4h-1zM335 169h1v3h-1zM340 169h1v3h-1zM524 169h1v3h-1zM511 172h1v4h-1zM333 176h1v4h-1zM496 176h1v4h-1zM514 176h1v4h-1zM323 180h1v3h-1zM335 180h1v3h-1zM338 180h1v3h-1zM505 180h1v3h-1zM525 180h1v3h-1zM339 183h1v4h-1zM496 183h1v4h-1zM314 187h1v3h-1zM319 187h1v3h-1zM332 187h1v3h-1zM503 187h1v3h-1zM312 190h1v4h-1zM332 190h1v4h-1zM341 190h1v4h-1zM501 190h1v4h-1zM330 194h1v4h-1zM344 194h1v4h-1zM506 194h1v4h-1zM344 198h1v3h-1zM500 198h1v3h-1zM308 201h1v4h-1zM481 201h1v4h-1zM464 209h1v3h-1zM436 220h1v3h-1zM540 289h1v4h-1zM558 289h2v4h-2zM511 293h11v3h-11zM537 293h4v3h-4zM511 296h3v4h-3zM532 296h3v4h-3zM562 296h1v4h-1zM510 300h1v3h-1zM543 300h3v3h-3zM550 300h1v3h-1zM567 300h1v3h-1zM509 303h2v4h-2zM535 303h2v4h-2zM568 303h1v4h-1zM509 307h1v4h-1zM527 307h1v4h-1zM361 311h1v3h-1zM365 311h1v3h-1zM431 311h3v3h-3zM479 311h1v3h-1zM481 311h1v3h-1zM485 311h3v3h-3zM508 311h1v3h-1zM568 311h1v3h-1zM126 314h1v4h-1zM136 314h1v4h-1zM173 314h5v4h-5zM200 314h3v4h-3zM204 314h1v4h-1zM503 314h1v4h-1zM508 314h1v4h-1zM569 314h1v4h-1zM584 314h1v4h-1zM591 314h2v4h-2zM661 314h2v4h-2zM697 314h1v4h-1zM708 314h2v4h-2zM711 314h1v4h-1zM617 318h1v4h-1zM507 322h1v3h-1zM615 322h2v3h-2zM630 322h1v3h-1zM632 322h1v3h-1zM659 322h1v3h-1zM674 322h1v3h-1zM713 322h3v3h-3zM619 325h3v4h-3zM629 325h1v4h-1zM631 325h2v4h-2zM635 325h1v4h-1zM656 325h1v4h-1zM671 325h2v4h-2zM675 325h12v4h-12zM688 325h6v4h-6zM695 325h1v4h-1zM698 325h2v4h-2zM710 325h5v4h-5zM620 329h1v4h-1zM633 329h2v4h-2zM636 329h3v4h-3zM652 329h2v4h-2zM658 329h1v4h-1zM667 329h1v4h-1zM686 329h1v4h-1zM711 329h2v4h-2zM114 333h5v3h-5zM120 333h3v3h-3zM187 333h1v3h-1zM243 333h1v3h-1zM290 333h1v3h-1zM323 333h2v3h-2zM406 333h1v3h-1zM490 333h1v3h-1zM495 333h1v3h-1zM498 333h1v3h-1zM502 333h4v3h-4zM628 333h1v3h-1zM636 333h2v3h-2zM639 333h3v3h-3zM101 336h7v4h-7zM119 336h1v4h-1zM162 336h1v4h-1zM198 336h1v4h-1zM235 336h1v4h-1zM240 336h2v4h-2zM244 336h2v4h-2zM250 336h5v4h-5zM259 336h1v4h-1zM265 336h11v4h-11zM277 336h3v4h-3zM281 336h2v4h-2zM285 336h5v4h-5zM291 336h6v4h-6zM298 336h1v4h-1zM334 336h1v4h-1zM351 336h3v4h-3zM423 336h3v4h-3zM455 336h1v4h-1zM465 336h1v4h-1zM489 336h1v4h-1zM506 336h1v4h-1zM578 336h2v4h-2zM600 336h1v4h-1zM605 336h2v4h-2zM609 336h1v4h-1zM640 336h2v4h-2zM643 336h1v4h-1zM664 336h4v4h-4zM671 336h2v4h-2zM677 336h5v4h-5zM683 336h3v4h-3zM688 336h3v4h-3zM707 336h1v4h-1zM95 340h1v4h-1zM109 340h1v4h-1zM139 340h2v4h-2zM142 340h1v4h-1zM151 340h1v4h-1zM155 340h1v4h-1zM158 340h1v4h-1zM168 340h1v4h-1zM178 340h1v4h-1zM304 340h1v4h-1zM319 340h1v4h-1zM335 340h1v4h-1zM346 340h1v4h-1zM367 340h1v4h-1zM398 340h1v4h-1zM418 340h1v4h-1zM426 340h1v4h-1zM430 340h1v4h-1zM499 340h1v4h-1zM644 340h1v4h-1zM648 340h3v4h-3zM655 340h6v4h-6zM708 340h1v4h-1zM712 340h1v4h-1zM115 344h1v3h-1zM139 344h1v3h-1zM157 344h1v3h-1zM307 344h1v3h-1zM333 344h1v3h-1zM482 344h1v3h-1zM578 344h3v3h-3zM592 344h7v3h-7zM601 344h4v3h-4zM649 344h3v3h-3zM663 344h1v3h-1zM345 347h1v4h-1zM347 347h1v4h-1zM586 347h1v4h-1zM649 351h1v4h-1z"/>
<path fill="#a2001b" d="M599 125h1v4h-1zM607 129h1v3h-1zM593 132h1v4h-1zM602 132h1v4h-1zM636 132h1v4h-1zM595 139h1v4h-1zM627 147h1v3h-1zM520 150h1v4h-1zM617 150h1v4h-1zM630 150h1v4h-1zM352 154h1v4h-1zM528 154h1v4h-1zM627 154h1v4h-1zM630 154h1v4h-1zM484 158h1v3h-1zM488 158h1v3h-1zM509 158h1v3h-1zM533 158h1v3h-1zM325 161h1v4h-1zM509 161h1v4h-1zM517 161h1v4h-1zM630 161h1v4h-1zM464 165h1v4h-1zM503 165h1v4h-1zM526 165h1v4h-1zM324 169h1v3h-1zM333 169h1v3h-1zM527 169h1v3h-1zM302 172h1v4h-1zM314 176h1v4h-1zM339 176h1v4h-1zM312 183h1v4h-1zM331 187h1v3h-1zM338 187h1v3h-1zM340 187h1v3h-1zM465 190h1v4h-1zM310 201h1v4h-1zM477 201h1v4h-1zM444 220h1v3h-1zM436 223h1v4h-1z"/>
<path fill="#af000f" d="M598 125h1v4h-1zM601 125h1v4h-1zM597 129h1v3h-1zM595 132h1v4h-1zM622 132h1v4h-1zM620 139h1v4h-1zM595 143h1v4h-1zM648 143h1v4h-1zM501 147h1v3h-1zM638 147h1v3h-1zM353 150h1v4h-1zM621 150h1v4h-1zM646 150h1v4h-1zM292 154h1v4h-1zM532 154h1v4h-1zM619 154h1v4h-1zM629 154h1v4h-1zM292 158h1v3h-1zM308 158h1v3h-1zM351 158h1v3h-1zM485 158h1v3h-1zM525 158h1v3h-1zM618 158h1v3h-1zM309 161h1v4h-1zM432 161h1v4h-1zM523 161h1v4h-1zM292 165h1v4h-1zM324 165h1v4h-1zM432 165h1v4h-1zM515 165h1v4h-1zM524 165h1v4h-1zM301 169h1v3h-1zM494 169h1v3h-1zM503 169h1v3h-1zM505 169h1v3h-1zM511 169h1v3h-1zM321 172h1v4h-1zM518 172h1v4h-1zM509 176h1v4h-1zM529 176h1v4h-1zM304 180h1v3h-1zM312 180h1v3h-1zM336 180h1v3h-1zM339 180h1v3h-1zM320 183h1v4h-1zM336 183h1v4h-1zM315 187h2v3h-2zM501 187h1v3h-1zM459 190h1v4h-1zM502 190h1v4h-1zM506 190h1v4h-1zM312 194h1v4h-1zM336 194h1v4h-1zM459 198h1v3h-1zM464 205h1v4h-1zM459 209h2v3h-2zM462 209h2v3h-2zM605 209h1v3h-1zM443 212h1v4h-1zM444 223h1v4h-1zM629 227h1v4h-1zM616 231h1v3h-1z"/>
<path fill="#c4000b" d="M600 125h1v4h-1zM634 129h1v3h-1zM595 136h1v3h-1zM615 139h1v4h-1zM638 143h1v4h-1zM507 147h1v3h-1zM615 150h1v4h-1zM293 154h1v4h-1zM353 154h1v4h-1zM513 154h1v4h-1zM623 154h1v4h-1zM643 154h1v4h-1zM330 158h1v3h-1zM433 158h1v3h-1zM487 158h1v3h-1zM501 158h1v3h-1zM513 158h1v3h-1zM628 158h1v3h-1zM352 161h1v4h-1zM436 161h1v4h-1zM352 165h2v4h-2zM298 169h1v3h-1zM510 169h1v3h-1zM514 169h1v3h-1zM526 169h1v3h-1zM323 172h1v4h-1zM495 172h1v4h-1zM438 176h1v4h-1zM515 176h1v4h-1zM640 176h1v4h-1zM494 180h1v3h-1zM530 180h1v3h-1zM502 187h1v3h-1zM339 190h1v4h-1zM325 194h1v4h-1zM459 194h1v4h-1zM465 198h1v3h-1zM478 201h1v4h-1zM480 201h1v4h-1zM482 201h2v4h-2z"/>
<path fill="#d80007" d="M608 129h1v3h-1zM600 136h1v3h-1zM605 136h2v3h-2zM610 136h1v3h-1zM646 136h1v3h-1zM612 143h1v4h-1zM521 147h1v3h-1zM612 147h2v3h-2zM617 147h1v3h-1zM620 147h1v3h-1zM624 147h1v3h-1zM626 147h1v3h-1zM631 147h1v3h-1zM636 147h1v3h-1zM648 147h1v3h-1zM522 150h1v4h-1zM612 150h1v4h-1zM625 150h1v4h-1zM355 154h1v4h-1zM506 154h1v4h-1zM621 154h1v4h-1zM354 158h1v3h-1zM511 158h1v3h-1zM516 158h1v3h-1zM619 158h1v3h-1zM291 161h1v4h-1zM317 161h1v4h-1zM355 161h1v4h-1zM433 161h1v4h-1zM515 161h1v4h-1zM629 161h1v4h-1zM305 165h1v4h-1zM494 165h1v4h-1zM616 165h1v4h-1zM512 172h1v4h-1zM321 176h1v4h-1zM500 176h1v4h-1zM505 176h1v4h-1zM522 176h1v4h-1zM528 176h1v4h-1zM324 180h1v3h-1zM337 180h1v3h-1zM433 180h1v3h-1zM502 180h1v3h-1zM636 180h1v3h-1zM337 183h1v4h-1zM501 183h2v4h-2zM312 187h1v3h-1zM305 190h1v4h-1zM330 190h1v4h-1zM327 194h1v4h-1zM458 205h1v4h-1z"/>
<path fill="#ed0003" d="M597 125h1v4h-1zM601 129h2v3h-2zM609 132h1v4h-1zM611 132h1v4h-1zM622 136h1v3h-1zM636 136h1v3h-1zM625 143h1v4h-1zM631 143h1v4h-1zM641 143h1v4h-1zM616 147h1v3h-1zM628 147h1v3h-1zM530 150h1v4h-1zM629 150h1v4h-1zM628 154h1v4h-1zM291 158h1v3h-1zM352 158h1v3h-1zM528 158h1v3h-1zM290 161h1v4h-1zM292 161h1v4h-1zM532 161h1v4h-1zM505 165h1v4h-1zM300 169h1v3h-1zM481 169h1v3h-1zM432 172h1v4h-1zM496 172h1v4h-1zM516 172h1v4h-1zM486 176h1v4h-1zM520 176h1v4h-1zM321 180h1v3h-1zM520 180h2v3h-2zM631 180h1v3h-1zM335 183h1v4h-1zM479 183h1v4h-1zM305 187h1v3h-1zM320 187h1v3h-1zM440 187h1v3h-1zM306 194h1v4h-1zM326 194h1v4h-1zM328 194h2v4h-2zM308 198h1v3h-1zM479 201h1v4h-1zM461 209h1v3h-1zM444 216h1v4h-1zM443 223h1v4h-1zM630 223h1v4h-1zM630 227h1v4h-1z"/>
<path fill="#ff0201" d="M596 129h1v3h-1zM606 129h1v3h-1zM602 136h1v3h-1zM607 139h1v4h-1zM646 139h1v4h-1zM603 143h1v4h-1zM632 143h1v4h-1zM595 147h1v3h-1zM603 147h1v3h-1zM615 147h1v3h-1zM622 147h1v3h-1zM506 150h1v4h-1zM508 150h1v4h-1zM531 150h1v4h-1zM614 150h1v4h-1zM620 150h1v4h-1zM627 150h1v4h-1zM638 150h1v4h-1zM500 154h1v4h-1zM613 154h1v4h-1zM638 154h1v4h-1zM486 158h1v3h-1zM515 158h1v3h-1zM318 161h1v4h-1zM511 161h1v4h-1zM616 161h1v4h-1zM316 165h1v4h-1zM355 165h1v4h-1zM436 165h1v4h-1zM462 165h1v4h-1zM502 165h1v4h-1zM519 165h1v4h-1zM527 165h1v4h-1zM630 165h1v4h-1zM325 169h1v3h-1zM332 169h1v3h-1zM463 169h1v3h-1zM465 169h1v3h-1zM515 169h1v3h-1zM520 169h1v3h-1zM528 169h1v3h-1zM631 169h1v3h-1zM638 169h1v3h-1zM438 172h1v4h-1zM461 172h1v4h-1zM502 172h1v4h-1zM528 172h1v4h-1zM595 172h1v4h-1zM304 176h1v4h-1zM324 176h1v4h-1zM531 176h1v4h-1zM300 180h2v3h-2zM439 180h1v3h-1zM496 180h1v3h-1zM500 183h1v4h-1zM324 187h1v3h-1zM458 201h1v4h-1zM631 212h1v4h-1zM610 220h1v3h-1zM438 223h1v4h-1zM626 242h1v3h-1z"/>
<path fill="#ff1004" d="M657 129h2v3h-2zM607 132h2v4h-2zM657 132h2v4h-2zM601 136h1v3h-1zM657 136h2v3h-2zM593 139h1v4h-1zM605 139h1v4h-1zM641 139h1v4h-1zM658 139h1v4h-1zM711 139h1v4h-1zM645 143h1v4h-1zM658 143h1v4h-1zM667 143h1v4h-1zM711 143h1v4h-1zM594 147h1v3h-1zM658 147h2v3h-2zM667 147h1v3h-1zM711 147h1v3h-1zM494 150h1v4h-1zM501 150h1v4h-1zM529 150h1v4h-1zM594 150h1v4h-1zM605 150h1v4h-1zM611 150h1v4h-1zM631 150h2v4h-2zM648 150h1v4h-1zM658 150h2v4h-2zM667 150h1v4h-1zM710 150h2v4h-2zM99 154h1v4h-1zM443 154h1v4h-1zM494 154h1v4h-1zM507 154h1v4h-1zM614 154h2v4h-2zM620 154h1v4h-1zM658 154h2v4h-2zM667 154h1v4h-1zM710 154h3v4h-3zM99 158h1v3h-1zM297 158h1v3h-1zM430 158h1v3h-1zM443 158h1v3h-1zM483 158h1v3h-1zM489 158h1v3h-1zM512 158h1v3h-1zM526 158h1v3h-1zM638 158h1v3h-1zM646 158h1v3h-1zM659 158h1v3h-1zM667 158h1v3h-1zM710 158h3v3h-3zM718 158h1v3h-1zM305 161h1v4h-1zM308 161h1v4h-1zM437 161h1v4h-1zM443 161h1v4h-1zM486 161h1v4h-1zM502 161h1v4h-1zM526 161h1v4h-1zM643 161h1v4h-1zM667 161h2v4h-2zM710 161h1v4h-1zM712 161h1v4h-1zM718 161h1v4h-1zM105 165h1v4h-1zM147 165h2v4h-2zM304 165h1v4h-1zM307 165h1v4h-1zM332 165h1v4h-1zM442 165h2v4h-2zM483 165h1v4h-1zM488 165h1v4h-1zM498 165h1v4h-1zM512 165h1v4h-1zM514 165h1v4h-1zM666 165h3v4h-3zM718 165h1v4h-1zM105 169h1v3h-1zM148 169h1v3h-1zM304 169h1v3h-1zM437 169h1v3h-1zM443 169h1v3h-1zM496 169h1v3h-1zM498 169h1v3h-1zM516 169h2v3h-2zM616 169h1v3h-1zM621 169h1v3h-1zM666 169h3v3h-3zM105 172h1v4h-1zM442 172h3v4h-3zM498 172h1v4h-1zM509 172h1v4h-1zM526 172h1v4h-1zM532 172h1v4h-1zM593 172h1v4h-1zM641 172h1v4h-1zM666 172h3v4h-3zM322 176h1v4h-1zM332 176h1v4h-1zM442 176h2v4h-2zM447 176h1v4h-1zM464 176h1v4h-1zM475 176h1v4h-1zM495 176h1v4h-1zM498 176h1v4h-1zM502 176h1v4h-1zM521 176h1v4h-1zM666 176h3v4h-3zM431 180h1v3h-1zM442 180h2v3h-2zM447 180h1v3h-1zM486 180h1v3h-1zM498 180h1v3h-1zM666 180h3v3h-3zM149 183h1v4h-1zM429 183h1v4h-1zM431 183h1v4h-1zM433 183h1v4h-1zM439 183h1v4h-1zM442 183h2v4h-2zM447 183h1v4h-1zM459 183h1v4h-1zM485 183h1v4h-1zM498 183h1v4h-1zM666 183h1v4h-1zM149 187h1v3h-1zM429 187h1v3h-1zM434 187h1v3h-1zM442 187h2v3h-2zM445 187h3v3h-3zM459 187h1v3h-1zM471 187h1v3h-1zM476 187h1v3h-1zM485 187h1v3h-1zM498 187h1v3h-1zM597 187h1v3h-1zM149 190h1v4h-1zM324 190h1v4h-1zM337 190h2v4h-2zM344 190h1v4h-1zM429 190h1v4h-1zM440 190h1v4h-1zM442 190h2v4h-2zM446 190h2v4h-2zM471 190h1v4h-1zM476 190h1v4h-1zM486 190h1v4h-1zM498 190h1v4h-1zM598 190h1v4h-1zM341 194h1v4h-1zM442 194h1v4h-1zM446 194h2v4h-2zM470 194h1v4h-1zM472 194h1v4h-1zM559 194h1v4h-1zM632 194h1v4h-1zM307 198h1v3h-1zM434 198h1v3h-1zM446 198h2v3h-2zM451 198h1v3h-1zM469 198h1v3h-1zM472 198h1v3h-1zM479 198h1v3h-1zM703 198h1v3h-1zM446 201h1v4h-1zM451 201h1v4h-1zM469 201h1v4h-1zM556 201h1v4h-1zM560 201h1v4h-1zM703 201h1v4h-1zM450 205h1v4h-1zM510 205h1v4h-1zM556 205h1v4h-1zM560 205h1v4h-1zM703 205h1v4h-1zM404 209h1v3h-1zM450 209h1v3h-1zM452 209h1v3h-1zM513 209h1v3h-1zM516 209h2v3h-2zM556 209h1v3h-1zM703 209h1v3h-1zM404 212h1v4h-1zM435 212h1v4h-1zM450 212h1v4h-1zM513 212h1v4h-1zM556 212h1v4h-1zM404 216h1v4h-1zM450 216h1v4h-1zM509 216h1v4h-1zM513 216h1v4h-1zM555 216h2v4h-2zM558 216h1v4h-1zM405 220h1v3h-1zM452 220h1v3h-1zM509 220h1v3h-1zM512 220h1v3h-1zM521 220h2v3h-2zM609 220h1v3h-1zM405 223h1v4h-1zM452 223h1v4h-1zM509 223h1v4h-1zM524 223h2v4h-2zM548 223h1v4h-1zM612 223h1v4h-1zM403 227h1v4h-1zM405 227h1v4h-1zM509 227h1v4h-1zM523 227h3v4h-3zM548 227h1v4h-1zM556 227h1v4h-1zM382 231h2v3h-2zM509 231h1v3h-1zM517 231h1v3h-1zM524 231h1v3h-1zM552 231h1v3h-1zM556 231h1v3h-1zM562 231h2v3h-2zM614 231h1v3h-1zM702 231h1v3h-1zM402 234h1v4h-1zM507 234h1v4h-1zM509 234h1v4h-1zM512 234h1v4h-1zM524 234h1v4h-1zM542 234h1v4h-1zM549 234h1v4h-1zM552 234h1v4h-1zM556 234h1v4h-1zM562 234h2v4h-2zM615 234h1v4h-1zM402 238h1v4h-1zM512 238h1v4h-1zM524 238h2v4h-2zM528 238h2v4h-2zM543 238h1v4h-1zM545 238h1v4h-1zM549 238h1v4h-1zM552 238h1v4h-1zM561 238h3v4h-3zM591 238h1v4h-1zM381 242h1v3h-1zM512 242h1v3h-1zM514 242h1v3h-1zM524 242h2v3h-2zM543 242h1v3h-1zM552 242h1v3h-1zM562 242h2v3h-2zM591 242h1v3h-1zM381 245h1v4h-1zM406 245h1v4h-1zM514 245h1v4h-1zM523 245h3v4h-3zM545 245h1v4h-1zM550 245h1v4h-1zM552 245h1v4h-1zM562 245h2v4h-2zM591 245h1v4h-1zM381 249h1v3h-1zM406 249h1v3h-1zM514 249h1v3h-1zM523 249h3v3h-3zM527 249h1v3h-1zM530 249h1v3h-1zM541 249h1v3h-1zM548 249h1v3h-1zM551 249h2v3h-2zM560 249h1v3h-1zM562 249h1v3h-1zM589 249h1v3h-1zM591 249h1v3h-1zM224 252h3v4h-3zM381 252h1v4h-1zM402 252h1v4h-1zM506 252h1v4h-1zM514 252h1v4h-1zM524 252h2v4h-2zM527 252h1v4h-1zM541 252h1v4h-1zM548 252h1v4h-1zM551 252h1v4h-1zM553 252h1v4h-1zM560 252h1v4h-1zM591 252h1v4h-1zM223 256h1v4h-1zM226 256h1v4h-1zM381 256h1v4h-1zM384 256h1v4h-1zM402 256h1v4h-1zM506 256h1v4h-1zM514 256h2v4h-2zM520 256h1v4h-1zM524 256h2v4h-2zM541 256h1v4h-1zM548 256h1v4h-1zM551 256h1v4h-1zM565 256h2v4h-2zM591 256h1v4h-1zM226 260h1v3h-1zM345 260h1v3h-1zM381 260h1v3h-1zM384 260h1v3h-1zM390 260h1v3h-1zM402 260h1v3h-1zM506 260h1v3h-1zM514 260h1v3h-1zM520 260h1v3h-1zM524 260h2v3h-2zM541 260h1v3h-1zM548 260h1v3h-1zM564 260h3v3h-3zM591 260h1v3h-1zM163 263h1v4h-1zM222 263h1v4h-1zM226 263h1v4h-1zM246 263h2v4h-2zM345 263h1v4h-1zM362 263h1v4h-1zM381 263h1v4h-1zM390 263h1v4h-1zM402 263h1v4h-1zM506 263h1v4h-1zM514 263h1v4h-1zM525 263h2v4h-2zM545 263h1v4h-1zM548 263h1v4h-1zM565 263h2v4h-2zM590 263h2v4h-2zM136 267h1v4h-1zM222 267h1v4h-1zM333 267h2v4h-2zM339 267h1v4h-1zM344 267h1v4h-1zM364 267h1v4h-1zM373 267h1v4h-1zM381 267h1v4h-1zM390 267h1v4h-1zM402 267h1v4h-1zM506 267h1v4h-1zM514 267h1v4h-1zM516 267h1v4h-1zM524 267h3v4h-3zM532 267h1v4h-1zM539 267h2v4h-2zM545 267h1v4h-1zM548 267h1v4h-1zM551 267h1v4h-1zM565 267h2v4h-2zM589 267h3v4h-3zM122 271h2v3h-2zM136 271h3v3h-3zM162 271h1v3h-1zM222 271h1v3h-1zM330 271h1v3h-1zM333 271h2v3h-2zM340 271h1v3h-1zM344 271h1v3h-1zM346 271h1v3h-1zM365 271h1v3h-1zM372 271h2v3h-2zM381 271h1v3h-1zM402 271h1v3h-1zM506 271h1v3h-1zM509 271h1v3h-1zM514 271h1v3h-1zM523 271h1v3h-1zM526 271h1v3h-1zM531 271h1v3h-1zM539 271h1v3h-1zM545 271h1v3h-1zM548 271h1v3h-1zM551 271h1v3h-1zM566 271h1v3h-1zM590 271h2v3h-2zM136 274h3v4h-3zM162 274h1v4h-1zM164 274h1v4h-1zM222 274h1v4h-1zM227 274h1v4h-1zM298 274h1v4h-1zM340 274h1v4h-1zM365 274h1v4h-1zM372 274h2v4h-2zM381 274h1v4h-1zM392 274h2v4h-2zM402 274h1v4h-1zM506 274h1v4h-1zM508 274h2v4h-2zM555 274h2v4h-2zM560 274h1v4h-1zM562 274h1v4h-1zM566 274h1v4h-1zM569 274h1v4h-1zM590 274h2v4h-2zM115 278h1v4h-1zM118 278h1v4h-1zM136 278h3v4h-3zM143 278h1v4h-1zM162 278h1v4h-1zM164 278h3v4h-3zM201 278h1v4h-1zM222 278h1v4h-1zM227 278h1v4h-1zM229 278h1v4h-1zM258 278h1v4h-1zM262 278h1v4h-1zM276 278h1v4h-1zM285 278h2v4h-2zM289 278h1v4h-1zM298 278h1v4h-1zM324 278h2v4h-2zM329 278h1v4h-1zM347 278h1v4h-1zM365 278h1v4h-1zM372 278h2v4h-2zM392 278h2v4h-2zM402 278h1v4h-1zM506 278h1v4h-1zM509 278h1v4h-1zM555 278h2v4h-2zM560 278h1v4h-1zM562 278h1v4h-1zM565 278h2v4h-2zM590 278h2v4h-2zM642 278h2v4h-2zM115 282h1v3h-1zM121 282h1v3h-1zM136 282h3v3h-3zM162 282h1v3h-1zM164 282h3v3h-3zM189 282h1v3h-1zM201 282h1v3h-1zM203 282h1v3h-1zM206 282h2v3h-2zM222 282h1v3h-1zM227 282h1v3h-1zM262 282h1v3h-1zM271 282h1v3h-1zM276 282h1v3h-1zM289 282h1v3h-1zM298 282h1v3h-1zM329 282h1v3h-1zM341 282h1v3h-1zM346 282h2v3h-2zM365 282h1v3h-1zM372 282h2v3h-2zM380 282h2v3h-2zM393 282h1v3h-1zM402 282h1v3h-1zM506 282h1v3h-1zM509 282h1v3h-1zM556 282h1v3h-1zM562 282h1v3h-1zM564 282h3v3h-3zM590 282h2v3h-2zM643 282h1v3h-1zM647 282h2v3h-2zM115 285h1v4h-1zM121 285h1v4h-1zM130 285h1v4h-1zM136 285h3v4h-3zM162 285h1v4h-1zM164 285h3v4h-3zM201 285h1v4h-1zM203 285h1v4h-1zM206 285h2v4h-2zM222 285h1v4h-1zM227 285h1v4h-1zM259 285h1v4h-1zM269 285h1v4h-1zM287 285h1v4h-1zM289 285h1v4h-1zM298 285h1v4h-1zM329 285h1v4h-1zM341 285h1v4h-1zM346 285h2v4h-2zM365 285h1v4h-1zM380 285h2v4h-2zM384 285h1v4h-1zM392 285h2v4h-2zM402 285h1v4h-1zM506 285h1v4h-1zM565 285h2v4h-2zM590 285h2v4h-2zM643 285h1v4h-1zM647 285h2v4h-2zM130 289h1v4h-1zM133 289h1v4h-1zM136 289h3v4h-3zM148 289h1v4h-1zM162 289h1v4h-1zM165 289h2v4h-2zM201 289h1v4h-1zM203 289h1v4h-1zM206 289h2v4h-2zM222 289h1v4h-1zM227 289h1v4h-1zM239 289h1v4h-1zM263 289h1v4h-1zM278 289h1v4h-1zM287 289h1v4h-1zM289 289h1v4h-1zM295 289h1v4h-1zM298 289h2v4h-2zM328 289h2v4h-2zM341 289h2v4h-2zM346 289h2v4h-2zM365 289h1v4h-1zM381 289h1v4h-1zM384 289h1v4h-1zM392 289h2v4h-2zM402 289h1v4h-1zM506 289h1v4h-1zM508 289h1v4h-1zM534 289h4v4h-4zM541 289h3v4h-3zM565 289h2v4h-2zM568 289h1v4h-1zM590 289h2v4h-2zM643 289h1v4h-1zM647 289h2v4h-2zM130 293h1v3h-1zM133 293h1v3h-1zM137 293h2v3h-2zM142 293h1v3h-1zM144 293h1v3h-1zM165 293h2v3h-2zM201 293h1v3h-1zM203 293h1v3h-1zM206 293h2v3h-2zM222 293h1v3h-1zM230 293h1v3h-1zM239 293h1v3h-1zM256 293h1v3h-1zM263 293h1v3h-1zM278 293h1v3h-1zM287 293h1v3h-1zM295 293h1v3h-1zM298 293h2v3h-2zM306 293h1v3h-1zM308 293h1v3h-1zM322 293h1v3h-1zM328 293h1v3h-1zM341 293h2v3h-2zM346 293h2v3h-2zM365 293h1v3h-1zM381 293h1v3h-1zM388 293h1v3h-1zM392 293h3v3h-3zM402 293h1v3h-1zM506 293h1v3h-1zM508 293h1v3h-1zM526 293h1v3h-1zM531 293h6v3h-6zM544 293h2v3h-2zM548 293h1v3h-1zM551 293h1v3h-1zM553 293h1v3h-1zM559 293h3v3h-3zM565 293h3v3h-3zM569 293h1v3h-1zM590 293h1v3h-1zM643 293h1v3h-1zM647 293h2v3h-2zM120 296h1v4h-1zM125 296h1v4h-1zM129 296h1v4h-1zM132 296h2v4h-2zM136 296h3v4h-3zM141 296h2v4h-2zM146 296h2v4h-2zM165 296h2v4h-2zM174 296h1v4h-1zM177 296h1v4h-1zM201 296h1v4h-1zM203 296h1v4h-1zM206 296h2v4h-2zM222 296h1v4h-1zM230 296h1v4h-1zM239 296h1v4h-1zM242 296h1v4h-1zM250 296h1v4h-1zM255 296h2v4h-2zM261 296h1v4h-1zM263 296h1v4h-1zM278 296h1v4h-1zM287 296h1v4h-1zM295 296h1v4h-1zM298 296h2v4h-2zM306 296h1v4h-1zM308 296h1v4h-1zM322 296h1v4h-1zM328 296h1v4h-1zM331 296h1v4h-1zM335 296h1v4h-1zM341 296h2v4h-2zM346 296h2v4h-2zM365 296h1v4h-1zM380 296h2v4h-2zM384 296h1v4h-1zM390 296h1v4h-1zM392 296h3v4h-3zM402 296h1v4h-1zM506 296h1v4h-1zM508 296h1v4h-1zM539 296h3v4h-3zM543 296h1v4h-1zM560 296h1v4h-1zM565 296h2v4h-2zM570 296h1v4h-1zM588 296h1v4h-1zM590 296h1v4h-1zM632 296h1v4h-1zM643 296h2v4h-2zM647 296h2v4h-2zM125 300h1v3h-1zM129 300h1v3h-1zM132 300h2v3h-2zM136 300h1v3h-1zM141 300h2v3h-2zM144 300h1v3h-1zM146 300h2v3h-2zM176 300h1v3h-1zM188 300h1v3h-1zM201 300h1v3h-1zM206 300h2v3h-2zM230 300h1v3h-1zM239 300h1v3h-1zM242 300h1v3h-1zM250 300h1v3h-1zM255 300h2v3h-2zM261 300h1v3h-1zM263 300h1v3h-1zM273 300h1v3h-1zM283 300h1v3h-1zM295 300h1v3h-1zM298 300h2v3h-2zM306 300h3v3h-3zM322 300h2v3h-2zM327 300h2v3h-2zM332 300h1v3h-1zM335 300h1v3h-1zM337 300h1v3h-1zM341 300h2v3h-2zM344 300h1v3h-1zM346 300h2v3h-2zM360 300h1v3h-1zM380 300h2v3h-2zM384 300h1v3h-1zM390 300h1v3h-1zM392 300h3v3h-3zM402 300h2v3h-2zM511 300h4v3h-4zM588 300h1v3h-1zM590 300h1v3h-1zM595 300h1v3h-1zM630 300h1v3h-1zM633 300h3v3h-3zM643 300h2v3h-2zM646 300h4v3h-4zM125 303h1v4h-1zM129 303h2v4h-2zM132 303h1v4h-1zM136 303h1v4h-1zM141 303h2v4h-2zM144 303h1v4h-1zM146 303h2v4h-2zM176 303h2v4h-2zM188 303h1v4h-1zM201 303h1v4h-1zM206 303h4v4h-4zM226 303h1v4h-1zM230 303h1v4h-1zM242 303h1v4h-1zM250 303h1v4h-1zM253 303h1v4h-1zM255 303h2v4h-2zM261 303h1v4h-1zM263 303h2v4h-2zM273 303h1v4h-1zM283 303h1v4h-1zM295 303h1v4h-1zM298 303h2v4h-2zM306 303h4v4h-4zM323 303h1v4h-1zM327 303h2v4h-2zM332 303h1v4h-1zM335 303h1v4h-1zM337 303h1v4h-1zM341 303h2v4h-2zM346 303h2v4h-2zM360 303h1v4h-1zM364 303h1v4h-1zM380 303h2v4h-2zM384 303h1v4h-1zM392 303h1v4h-1zM394 303h1v4h-1zM402 303h2v4h-2zM526 303h1v4h-1zM565 303h1v4h-1zM588 303h1v4h-1zM590 303h1v4h-1zM595 303h1v4h-1zM617 303h1v4h-1zM643 303h2v4h-2zM646 303h4v4h-4zM125 307h1v4h-1zM129 307h2v4h-2zM132 307h1v4h-1zM136 307h1v4h-1zM141 307h2v4h-2zM144 307h1v4h-1zM146 307h3v4h-3zM177 307h1v4h-1zM188 307h1v4h-1zM201 307h1v4h-1zM207 307h3v4h-3zM221 307h1v4h-1zM226 307h1v4h-1zM230 307h1v4h-1zM239 307h1v4h-1zM242 307h1v4h-1zM250 307h1v4h-1zM253 307h4v4h-4zM261 307h1v4h-1zM263 307h2v4h-2zM273 307h1v4h-1zM295 307h1v4h-1zM298 307h1v4h-1zM306 307h4v4h-4zM323 307h1v4h-1zM327 307h1v4h-1zM332 307h1v4h-1zM335 307h1v4h-1zM337 307h1v4h-1zM341 307h2v4h-2zM346 307h2v4h-2zM360 307h1v4h-1zM364 307h1v4h-1zM380 307h2v4h-2zM384 307h1v4h-1zM389 307h1v4h-1zM392 307h1v4h-1zM394 307h1v4h-1zM402 307h2v4h-2zM529 307h1v4h-1zM552 307h1v4h-1zM588 307h1v4h-1zM590 307h1v4h-1zM615 307h2v4h-2zM618 307h2v4h-2zM93 311h1v3h-1zM340 311h1v3h-1zM346 311h2v3h-2zM351 311h3v3h-3zM355 311h5v3h-5zM362 311h3v3h-3zM366 311h2v3h-2zM369 311h3v3h-3zM375 311h2v3h-2zM417 311h1v3h-1zM451 311h1v3h-1zM453 311h1v3h-1zM613 311h2v3h-2zM646 311h1v3h-1zM88 314h2v4h-2zM91 314h1v4h-1zM99 314h2v4h-2zM108 314h1v4h-1zM110 314h2v4h-2zM117 314h1v4h-1zM131 314h3v4h-3zM147 314h1v4h-1zM161 314h2v4h-2zM164 314h7v4h-7zM178 314h1v4h-1zM180 314h3v4h-3zM186 314h3v4h-3zM191 314h2v4h-2zM194 314h4v4h-4zM199 314h1v4h-1zM203 314h1v4h-1zM205 314h4v4h-4zM223 314h5v4h-5zM230 314h2v4h-2zM235 314h3v4h-3zM248 314h1v4h-1zM292 314h1v4h-1zM294 314h3v4h-3zM313 314h6v4h-6zM323 314h1v4h-1zM327 314h1v4h-1zM331 314h4v4h-4zM507 314h1v4h-1zM583 314h1v4h-1zM601 314h1v4h-1zM617 314h1v4h-1zM652 314h9v4h-9zM663 314h5v4h-5zM669 314h9v4h-9zM683 314h1v4h-1zM687 314h6v4h-6zM701 314h1v4h-1zM705 314h3v4h-3zM712 314h1v4h-1zM573 318h1v4h-1zM610 318h2v4h-2zM618 318h1v4h-1zM624 318h2v4h-2zM630 318h3v4h-3zM651 318h1v4h-1zM506 322h1v3h-1zM574 322h1v3h-1zM608 322h2v3h-2zM618 322h2v3h-2zM629 322h1v3h-1zM633 322h2v3h-2zM658 322h1v3h-1zM662 322h5v3h-5zM669 322h1v3h-1zM675 322h4v3h-4zM682 322h1v3h-1zM684 322h5v3h-5zM691 322h3v3h-3zM696 322h1v3h-1zM701 322h2v3h-2zM705 322h2v3h-2zM708 322h2v3h-2zM712 322h1v3h-1zM716 322h4v3h-4zM575 325h1v4h-1zM613 325h2v4h-2zM626 325h1v4h-1zM628 325h1v4h-1zM653 325h3v4h-3zM665 325h6v4h-6zM673 325h2v4h-2zM694 325h1v4h-1zM697 325h1v4h-1zM700 325h2v4h-2zM706 325h4v4h-4zM717 325h3v4h-3zM576 329h1v4h-1zM612 329h1v4h-1zM621 329h1v4h-1zM625 329h3v4h-3zM662 329h1v4h-1zM665 329h2v4h-2zM668 329h1v4h-1zM671 329h3v4h-3zM675 329h2v4h-2zM679 329h2v4h-2zM682 329h4v4h-4zM687 329h2v4h-2zM694 329h2v4h-2zM697 329h4v4h-4zM702 329h9v4h-9zM713 329h7v4h-7zM83 333h2v3h-2zM88 333h4v3h-4zM93 333h5v3h-5zM110 333h1v3h-1zM127 333h3v3h-3zM150 333h1v3h-1zM152 333h5v3h-5zM161 333h6v3h-6zM171 333h2v3h-2zM176 333h4v3h-4zM185 333h2v3h-2zM188 333h2v3h-2zM199 333h2v3h-2zM202 333h5v3h-5zM208 333h3v3h-3zM212 333h2v3h-2zM215 333h9v3h-9zM225 333h4v3h-4zM230 333h1v3h-1zM240 333h3v3h-3zM244 333h1v3h-1zM251 333h4v3h-4zM269 333h1v3h-1zM281 333h9v3h-9zM292 333h6v3h-6zM300 333h1v3h-1zM302 333h9v3h-9zM317 333h2v3h-2zM346 333h1v3h-1zM348 333h12v3h-12zM378 333h2v3h-2zM381 333h1v3h-1zM445 333h7v3h-7zM489 333h1v3h-1zM496 333h2v3h-2zM577 333h1v3h-1zM608 333h4v3h-4zM618 333h1v3h-1zM622 333h1v3h-1zM624 333h2v3h-2zM647 333h1v3h-1zM98 336h3v4h-3zM131 336h4v4h-4zM146 336h6v4h-6zM227 336h6v4h-6zM297 336h1v4h-1zM384 336h2v4h-2zM575 336h2v4h-2zM580 336h6v4h-6zM587 336h12v4h-12zM601 336h1v4h-1zM603 336h2v4h-2zM637 336h1v4h-1zM647 336h2v4h-2zM652 336h1v4h-1zM657 336h1v4h-1zM660 336h4v4h-4zM682 336h1v4h-1zM687 336h1v4h-1zM714 336h4v4h-4zM85 340h1v4h-1zM110 340h1v4h-1zM157 340h1v4h-1zM177 340h1v4h-1zM213 340h1v4h-1zM255 340h1v4h-1zM295 340h1v4h-1zM306 340h1v4h-1zM325 340h1v4h-1zM338 340h1v4h-1zM403 340h1v4h-1zM407 340h1v4h-1zM412 340h1v4h-1zM447 340h1v4h-1zM453 340h1v4h-1zM461 340h1v4h-1zM467 340h1v4h-1zM480 340h1v4h-1zM576 340h2v4h-2zM579 340h6v4h-6zM645 340h3v4h-3zM651 340h3v4h-3zM670 340h1v4h-1zM673 340h2v4h-2zM677 340h1v4h-1zM700 340h2v4h-2zM155 344h1v3h-1zM327 344h1v3h-1zM354 344h1v3h-1zM361 344h1v3h-1zM394 344h1v3h-1zM438 344h1v3h-1zM458 344h1v3h-1zM577 344h1v3h-1zM582 344h2v3h-2zM585 344h4v3h-4zM591 344h1v3h-1zM599 344h2v3h-2zM645 344h1v3h-1zM652 344h3v3h-3zM678 344h1v3h-1zM685 344h8v3h-8zM710 344h5v3h-5zM408 347h1v4h-1zM587 347h1v4h-1zM647 347h1v4h-1zM652 347h1v4h-1zM686 347h1v4h-1zM692 347h1v4h-1z"/>
<path fill="#ff1e08" d="M600 132h1v4h-1zM596 136h1v3h-1zM599 139h1v4h-1zM608 139h1v4h-1zM613 139h1v4h-1zM623 139h1v4h-1zM636 139h1v4h-1zM609 143h1v4h-1zM623 143h1v4h-1zM636 143h1v4h-1zM625 147h1v3h-1zM646 147h1v3h-1zM507 150h1v4h-1zM521 150h1v4h-1zM624 150h1v4h-1zM643 150h1v4h-1zM512 154h1v4h-1zM617 154h1v4h-1zM495 158h1v3h-1zM505 158h1v3h-1zM519 158h2v3h-2zM326 161h2v4h-2zM516 161h1v4h-1zM525 161h1v4h-1zM528 161h1v4h-1zM624 161h1v4h-1zM310 165h1v4h-1zM516 165h1v4h-1zM628 165h1v4h-1zM643 165h1v4h-1zM299 169h1v3h-1zM486 169h1v3h-1zM502 169h1v3h-1zM532 169h1v3h-1zM619 169h1v3h-1zM494 172h1v4h-1zM517 172h1v4h-1zM630 172h1v4h-1zM432 176h1v4h-1zM325 180h1v3h-1zM506 180h1v3h-1zM324 183h1v4h-1zM630 183h1v4h-1zM507 187h1v3h-1zM311 190h1v4h-1zM317 190h1v4h-1zM629 190h1v4h-1zM484 194h1v4h-1zM484 198h1v3h-1zM436 209h1v3h-1zM613 227h1v4h-1z"/>
<path fill="#ff2b0c" d="M603 136h1v3h-1zM609 136h1v3h-1zM619 147h1v3h-1zM643 147h1v3h-1zM595 150h1v4h-1zM613 150h1v4h-1zM624 154h1v4h-1zM626 154h1v4h-1zM506 158h1v3h-1zM615 158h1v3h-1zM643 158h1v3h-1zM328 161h1v4h-1zM354 161h1v4h-1zM487 161h1v4h-1zM500 161h1v4h-1zM520 161h1v4h-1zM522 161h1v4h-1zM619 161h1v4h-1zM636 161h1v4h-1zM433 165h1v4h-1zM495 165h1v4h-1zM500 165h1v4h-1zM330 169h1v3h-1zM509 169h1v3h-1zM304 172h1v4h-1zM311 172h1v4h-1zM320 172h1v4h-1zM311 176h1v4h-1zM338 176h1v4h-1zM516 176h1v4h-1zM526 176h1v4h-1zM298 180h1v3h-1zM480 180h1v3h-1zM495 180h1v3h-1zM597 180h1v3h-1zM508 187h1v3h-1zM327 190h1v4h-1zM329 190h1v4h-1zM485 190h1v4h-1zM440 194h1v4h-1zM310 198h1v3h-1zM631 216h1v4h-1zM437 223h1v4h-1zM617 238h1v4h-1z"/>
<path fill="#ff390f" d="M598 129h1v3h-1zM604 129h1v3h-1zM596 132h1v4h-1zM599 132h1v4h-1zM604 136h1v3h-1zM634 136h1v3h-1zM604 139h1v4h-1zM602 143h1v4h-1zM622 143h1v4h-1zM593 147h1v3h-1zM602 147h1v3h-1zM626 150h1v4h-1zM501 154h1v4h-1zM511 154h1v4h-1zM594 154h1v4h-1zM620 158h1v3h-1zM306 161h2v4h-2zM329 161h1v4h-1zM435 161h1v4h-1zM506 161h1v4h-1zM628 161h1v4h-1zM631 161h1v4h-1zM318 165h1v4h-1zM325 165h1v4h-1zM331 165h1v4h-1zM501 165h1v4h-1zM614 165h1v4h-1zM618 165h1v4h-1zM629 165h1v4h-1zM310 169h1v3h-1zM315 169h1v3h-1zM331 169h1v3h-1zM462 169h1v3h-1zM464 169h1v3h-1zM500 169h1v3h-1zM519 169h1v3h-1zM628 169h1v3h-1zM630 169h1v3h-1zM324 172h1v4h-1zM500 180h1v3h-1zM495 183h1v4h-1zM506 183h1v4h-1zM508 183h1v4h-1zM328 190h1v4h-1zM507 190h1v4h-1zM602 198h1v3h-1zM441 201h1v4h-1zM442 212h1v4h-1zM631 220h1v3h-1zM442 223h1v4h-1z"/>
<path fill="#ff4713" d="M599 129h1v3h-1zM597 132h1v4h-1zM633 132h1v4h-1zM593 136h1v3h-1zM607 136h1v3h-1zM602 139h1v4h-1zM606 139h1v4h-1zM610 139h1v4h-1zM625 139h1v4h-1zM640 139h1v4h-1zM593 143h2v4h-2zM606 143h1v4h-1zM641 147h1v3h-1zM622 150h1v4h-1zM641 150h1v4h-1zM612 154h1v4h-1zM625 154h1v4h-1zM293 158h1v3h-1zM521 158h1v3h-1zM595 158h1v3h-1zM613 158h1v3h-1zM627 158h1v3h-1zM484 161h2v4h-2zM508 161h1v4h-1zM618 161h1v4h-1zM327 165h1v4h-1zM463 165h1v4h-1zM506 165h1v4h-1zM525 165h1v4h-1zM594 165h1v4h-1zM615 165h1v4h-1zM620 165h1v4h-1zM645 165h1v4h-1zM525 169h1v3h-1zM614 169h1v3h-1zM618 169h1v3h-1zM301 172h1v4h-1zM465 172h1v4h-1zM500 172h1v4h-1zM506 172h1v4h-1zM521 172h1v4h-1zM524 172h2v4h-2zM628 172h1v4h-1zM325 176h1v4h-1zM506 176h1v4h-1zM630 176h1v4h-1zM332 180h1v3h-1zM464 180h1v3h-1zM509 180h1v3h-1zM315 183h1v4h-1zM326 190h1v4h-1zM479 190h1v4h-1zM311 194h1v4h-1zM463 205h1v4h-1zM605 205h1v4h-1zM443 220h1v3h-1zM441 223h1v4h-1zM618 238h1v4h-1z"/>
<path fill="#ff5822" d="M598 132h1v4h-1zM598 136h1v3h-1zM598 139h1v4h-1zM600 139h2v4h-2zM596 143h1v4h-1zM604 143h2v4h-2zM609 147h1v3h-1zM596 150h1v4h-1zM603 150h1v4h-1zM531 154h1v4h-1zM595 154h1v4h-1zM500 158h1v3h-1zM531 158h2v3h-2zM594 158h1v3h-1zM614 158h1v3h-1zM621 158h1v3h-1zM629 158h1v3h-1zM434 161h1v4h-1zM519 161h1v4h-1zM317 165h1v4h-1zM511 165h1v4h-1zM517 165h1v4h-1zM433 169h1v3h-1zM595 169h1v3h-1zM636 169h1v3h-1zM298 172h1v4h-1zM332 172h1v4h-1zM530 172h1v4h-1zM619 172h1v4h-1zM638 172h1v4h-1zM480 176h1v4h-1zM507 176h1v4h-1zM616 176h1v4h-1zM636 176h1v4h-1zM305 180h1v3h-1zM305 183h1v4h-1zM328 183h1v4h-1zM325 187h1v3h-1zM327 187h1v3h-1zM479 187h1v3h-1zM308 194h1v4h-1zM478 198h1v3h-1zM483 198h1v3h-1zM435 201h1v4h-1zM631 201h1v4h-1zM459 205h1v4h-1zM608 216h1v4h-1zM619 242h1v3h-1z"/>
<path fill="#ff6935" d="M633 136h1v3h-1zM596 139h1v4h-1zM609 139h1v4h-1zM622 139h1v4h-1zM600 143h2v4h-2zM608 143h1v4h-1zM610 143h1v4h-1zM596 147h1v3h-1zM611 147h1v3h-1zM645 147h1v3h-1zM623 150h1v4h-1zM645 150h1v4h-1zM530 154h1v4h-1zM641 154h1v4h-1zM646 154h1v4h-1zM522 158h1v3h-1zM630 158h1v3h-1zM495 161h1v4h-1zM529 161h1v4h-1zM617 161h1v4h-1zM626 161h1v4h-1zM309 165h1v4h-1zM319 165h1v4h-1zM485 165h1v4h-1zM487 165h1v4h-1zM520 165h1v4h-1zM619 165h1v4h-1zM631 165h1v4h-1zM638 165h1v4h-1zM641 165h1v4h-1zM434 169h1v3h-1zM495 169h1v3h-1zM300 172h1v4h-1zM305 172h1v4h-1zM463 172h1v4h-1zM507 172h1v4h-1zM515 172h1v4h-1zM616 172h1v4h-1zM618 172h1v4h-1zM631 172h1v4h-1zM299 176h1v4h-1zM305 176h1v4h-1zM315 176h1v4h-1zM331 176h1v4h-1zM501 176h1v4h-1zM508 176h1v4h-1zM299 180h1v3h-1zM311 180h1v3h-1zM316 180h1v3h-1zM330 180h1v3h-1zM596 180h1v3h-1zM325 183h1v4h-1zM332 183h1v4h-1zM629 183h1v4h-1zM311 187h1v3h-1zM317 187h1v3h-1zM464 187h1v3h-1zM307 190h1v4h-1zM434 190h1v4h-1zM307 194h1v4h-1zM478 194h1v4h-1zM309 198h1v3h-1zM460 205h1v4h-1zM609 216h1v4h-1zM437 220h1v3h-1zM630 220h1v3h-1zM439 223h1v4h-1z"/>
<path fill="#ff7b48" d="M634 132h1v4h-1zM632 147h1v3h-1zM640 147h1v3h-1zM593 150h1v4h-1zM597 150h1v4h-1zM600 150h2v4h-2zM607 150h1v4h-1zM610 150h1v4h-1zM634 150h1v4h-1zM522 154h1v4h-1zM529 154h1v4h-1zM611 154h1v4h-1zM529 158h1v3h-1zM624 158h1v3h-1zM353 161h1v4h-1zM505 161h1v4h-1zM623 161h1v4h-1zM645 161h1v4h-1zM329 165h1v4h-1zM522 165h1v4h-1zM528 165h1v4h-1zM613 165h1v4h-1zM621 165h1v4h-1zM506 169h1v3h-1zM624 169h2v3h-2zM325 172h1v4h-1zM486 172h1v4h-1zM501 172h1v4h-1zM529 172h1v4h-1zM326 176h1v4h-1zM433 176h1v4h-1zM530 176h1v4h-1zM596 176h1v4h-1zM631 176h1v4h-1zM633 176h1v4h-1zM460 180h1v3h-1zM630 180h1v3h-1zM316 183h1v4h-1zM319 183h1v4h-1zM630 205h1v4h-1zM631 209h1v3h-1zM612 220h1v3h-1zM615 231h1v3h-1zM628 234h1v4h-1zM94 314h4v4h-4zM615 318h1v4h-1zM619 318h1v4h-1zM613 322h2v3h-2zM612 325h1v4h-1zM610 329h2v4h-2zM100 333h2v3h-2zM107 333h1v3h-1zM109 333h1v3h-1zM123 333h2v3h-2zM133 333h3v3h-3zM160 333h1v3h-1zM183 333h2v3h-2zM190 333h7v3h-7zM211 333h1v3h-1zM214 333h1v3h-1zM245 333h2v3h-2zM255 333h2v3h-2zM298 333h2v3h-2zM311 333h2v3h-2zM314 333h3v3h-3zM319 333h4v3h-4zM370 333h1v3h-1zM374 333h2v3h-2zM392 333h2v3h-2zM400 333h3v3h-3zM404 333h1v3h-1zM412 333h2v3h-2zM441 333h4v3h-4zM471 333h1v3h-1zM476 333h1v3h-1zM602 336h1v4h-1zM607 336h1v4h-1zM670 336h1v4h-1zM686 336h1v4h-1zM699 336h4v4h-4zM711 336h3v4h-3zM679 340h2v4h-2zM685 340h1v4h-1zM659 344h3v3h-3zM699 344h1v3h-1zM718 344h1v3h-1z"/>
<path fill="#ff8852" d="M597 136h1v3h-1zM611 143h1v4h-1zM634 143h1v4h-1zM623 147h1v3h-1zM604 150h1v4h-1zM608 150h1v4h-1zM640 150h1v4h-1zM521 154h1v4h-1zM606 154h1v4h-1zM631 154h1v4h-1zM636 154h1v4h-1zM617 158h1v3h-1zM623 158h1v3h-1zM641 158h1v3h-1zM594 161h1v4h-1zM620 161h2v4h-2zM641 161h1v4h-1zM484 165h1v4h-1zM532 165h1v4h-1zM617 165h1v4h-1zM305 169h1v3h-1zM319 169h1v3h-1zM329 169h1v3h-1zM521 169h2v3h-2zM617 169h1v3h-1zM641 169h1v3h-1zM310 172h1v4h-1zM326 172h1v4h-1zM331 172h1v4h-1zM531 172h1v4h-1zM301 176h1v4h-1zM320 176h1v4h-1zM437 176h1v4h-1zM508 180h1v3h-1zM632 180h1v3h-1zM311 183h1v4h-1zM330 183h2v4h-2zM307 187h1v3h-1zM630 187h1v3h-1zM460 190h1v4h-1zM631 190h1v4h-1zM464 194h1v4h-1zM482 198h1v3h-1zM441 205h1v4h-1zM442 209h1v3h-1zM608 212h1v4h-1zM613 223h2v4h-2zM628 231h1v3h-1zM619 238h1v4h-1zM624 242h2v3h-2z"/>
<path fill="#ff8d48" d="M597 143h1v4h-1zM607 143h1v4h-1zM599 147h1v3h-1zM605 147h3v3h-3zM602 150h1v4h-1zM622 154h1v4h-1zM633 154h1v4h-1zM508 158h1v3h-1zM631 158h1v3h-1zM645 158h1v3h-1zM330 161h1v4h-1zM507 161h1v4h-1zM521 161h1v4h-1zM611 161h1v4h-1zM614 161h1v4h-1zM622 161h1v4h-1zM627 161h1v4h-1zM306 165h1v4h-1zM308 165h1v4h-1zM434 165h1v4h-1zM486 165h1v4h-1zM633 165h1v4h-1zM306 169h1v3h-1zM309 169h1v3h-1zM482 169h1v3h-1zM626 169h1v3h-1zM629 169h1v3h-1zM309 172h1v4h-1zM508 172h1v4h-1zM596 172h1v4h-1zM614 172h1v4h-1zM626 172h1v4h-1zM636 172h1v4h-1zM460 176h1v4h-1zM614 176h1v4h-1zM629 176h1v4h-1zM634 176h1v4h-1zM328 180h1v3h-1zM501 180h1v3h-1zM615 180h2v3h-2zM460 183h1v4h-1zM484 183h1v4h-1zM310 187h1v3h-1zM435 187h1v3h-1zM616 187h1v3h-1zM310 190h1v4h-1zM325 190h1v4h-1zM310 194h1v4h-1zM434 194h1v4h-1zM631 194h1v4h-1zM435 198h1v3h-1zM464 198h1v3h-1zM480 198h1v3h-1zM605 201h1v4h-1zM461 205h1v4h-1zM604 205h1v4h-1zM613 220h1v3h-1zM629 231h1v3h-1z"/>
<path fill="#ff913e" d="M633 139h1v4h-1zM640 143h1v4h-1zM600 147h1v3h-1zM604 147h1v3h-1zM606 150h1v4h-1zM520 154h1v4h-1zM640 158h1v3h-1zM593 161h1v4h-1zM605 161h1v4h-1zM613 161h1v4h-1zM615 161h1v4h-1zM640 161h1v4h-1zM330 165h1v4h-1zM435 165h1v4h-1zM507 165h1v4h-1zM625 165h1v4h-1zM308 169h1v3h-1zM318 169h1v3h-1zM501 169h1v3h-1zM603 169h1v3h-1zM620 169h1v3h-1zM299 172h1v4h-1zM306 172h1v4h-1zM317 172h1v4h-1zM505 172h1v4h-1zM629 172h1v4h-1zM310 176h1v4h-1zM319 176h1v4h-1zM328 176h1v4h-1zM628 176h1v4h-1zM315 180h1v3h-1zM319 180h2v3h-2zM327 180h1v3h-1zM331 180h1v3h-1zM613 180h1v3h-1zM327 183h1v4h-1zM464 183h1v4h-1zM619 183h1v4h-1zM329 187h1v3h-1zM619 187h1v3h-1zM633 187h1v3h-1zM599 190h1v4h-1zM309 194h1v4h-1zM441 198h1v3h-1zM463 198h1v3h-1zM462 205h1v4h-1zM631 205h1v4h-1zM606 209h1v3h-1zM626 209h1v3h-1zM629 209h1v3h-1zM609 212h1v4h-1zM630 212h1v4h-1zM629 216h1v4h-1zM631 223h1v4h-1zM617 227h1v4h-1zM628 227h1v4h-1zM618 231h1v3h-1zM618 234h1v4h-1zM621 242h1v3h-1z"/>
<path fill="#ff9534" d="M597 139h1v4h-1zM634 139h1v4h-1zM597 147h1v3h-1zM610 147h1v3h-1zM636 150h1v4h-1zM605 154h1v4h-1zM609 154h2v4h-2zM632 161h1v4h-1zM326 165h1v4h-1zM328 165h1v4h-1zM606 165h1v4h-1zM612 165h1v4h-1zM626 165h1v4h-1zM640 165h1v4h-1zM307 169h1v3h-1zM436 169h1v3h-1zM615 169h1v3h-1zM627 169h1v3h-1zM632 169h1v3h-1zM329 172h1v4h-1zM436 172h2v4h-2zM464 172h1v4h-1zM621 172h1v4h-1zM330 176h1v4h-1zM618 176h2v4h-2zM481 180h1v3h-1zM629 180h1v3h-1zM634 180h1v3h-1zM310 183h1v4h-1zM616 183h2v4h-2zM308 187h1v3h-1zM326 187h1v3h-1zM460 187h1v3h-1zM618 187h1v3h-1zM308 190h1v4h-1zM630 194h1v4h-1zM630 201h1v4h-1zM443 216h1v4h-1zM629 223h1v4h-1zM615 227h2v4h-2zM627 238h1v4h-1z"/>
<path fill="#ff9828" d="M599 136h1v3h-1zM609 150h1v4h-1zM633 150h1v4h-1zM508 154h1v4h-1zM600 154h1v4h-1zM602 154h1v4h-1zM634 154h1v4h-1zM645 154h1v4h-1zM600 158h1v3h-1zM612 158h1v3h-1zM626 158h1v3h-1zM632 165h1v4h-1zM636 165h1v4h-1zM316 169h1v3h-1zM326 169h2v3h-2zM634 169h1v3h-1zM640 169h1v3h-1zM315 172h1v4h-1zM328 172h1v4h-1zM617 172h1v4h-1zM309 176h1v4h-1zM632 176h1v4h-1zM306 180h1v3h-1zM309 180h1v3h-1zM326 183h1v4h-1zM631 183h3v4h-3zM328 187h1v3h-1zM330 187h1v3h-1zM629 187h1v3h-1zM464 190h1v4h-1zM630 190h1v4h-1zM460 194h1v4h-1zM616 194h1v4h-1zM631 198h1v3h-1zM435 205h1v4h-1zM628 205h1v4h-1zM607 209h1v3h-1zM629 220h1v3h-1zM619 234h1v4h-1zM624 238h1v4h-1z"/>
<path fill="#ff9b1b" d="M601 147h1v3h-1zM603 154h1v4h-1zM530 158h1v3h-1zM607 158h1v3h-1zM625 158h1v3h-1zM607 161h1v4h-1zM612 161h1v4h-1zM633 161h1v4h-1zM317 169h1v3h-1zM508 169h1v3h-1zM529 169h1v3h-1zM633 169h1v3h-1zM433 172h1v4h-1zM640 172h1v4h-1zM298 176h1v4h-1zM317 176h1v4h-1zM481 176h1v4h-1zM613 176h1v4h-1zM310 180h1v3h-1zM618 180h1v3h-1zM329 183h1v4h-1zM615 183h1v4h-1zM306 187h1v3h-1zM318 187h1v3h-1zM632 190h1v4h-1zM629 194h1v4h-1zM481 198h1v3h-1zM628 198h1v3h-1zM436 212h1v4h-1zM437 216h1v4h-1zM610 216h1v4h-1zM613 216h1v4h-1zM628 216h1v4h-1zM438 220h1v3h-1zM616 223h1v4h-1z"/>
<path fill="#ff9d0e" d="M633 143h1v4h-1zM598 147h1v3h-1zM596 154h1v4h-1zM632 154h1v4h-1zM611 158h1v3h-1zM632 158h1v3h-1zM634 161h1v4h-1zM602 165h1v4h-1zM634 165h1v4h-1zM435 169h1v3h-1zM531 169h1v3h-1zM594 169h1v3h-1zM330 172h1v4h-1zM462 172h1v4h-1zM612 172h1v4h-1zM615 172h1v4h-1zM624 172h1v4h-1zM627 172h1v4h-1zM632 172h1v4h-1zM634 172h1v4h-1zM300 176h1v4h-1zM485 176h1v4h-1zM438 183h1v4h-1zM598 183h1v4h-1zM618 183h1v4h-1zM599 187h1v3h-1zM631 187h1v3h-1zM602 194h2v4h-2zM621 194h1v4h-1zM628 194h1v4h-1zM440 201h1v4h-1zM616 209h1v3h-1zM630 209h1v3h-1zM629 212h1v4h-1zM440 223h1v4h-1zM626 238h1v4h-1zM620 242h1v3h-1z"/>
<path fill="#ffa001" d="M657 139h1v4h-1zM598 143h1v4h-1zM657 143h1v4h-1zM608 147h1v3h-1zM633 147h1v3h-1zM657 147h1v3h-1zM657 150h1v4h-1zM599 154h1v4h-1zM608 154h1v4h-1zM657 154h1v4h-1zM507 158h1v3h-1zM596 158h1v3h-1zM603 158h1v3h-1zM609 158h1v3h-1zM622 158h1v3h-1zM531 161h1v4h-1zM596 161h1v4h-1zM610 161h1v4h-1zM625 161h1v4h-1zM595 165h1v4h-1zM599 165h1v4h-1zM605 165h1v4h-1zM624 165h1v4h-1zM613 169h1v3h-1zM147 172h2v4h-2zM308 172h1v4h-1zM620 172h1v4h-1zM625 172h1v4h-1zM147 176h2v4h-2zM461 176h1v4h-1zM474 176h1v4h-1zM557 176h1v4h-1zM603 176h1v4h-1zM625 176h1v4h-1zM147 180h2v3h-2zM430 180h1v3h-1zM434 180h1v3h-1zM438 180h1v3h-1zM474 180h2v3h-2zM485 180h1v3h-1zM507 180h1v3h-1zM599 180h1v3h-1zM612 180h1v3h-1zM617 180h1v3h-1zM146 183h3v4h-3zM309 183h1v4h-1zM317 183h2v4h-2zM430 183h1v4h-1zM434 183h1v4h-1zM474 183h3v4h-3zM625 183h1v4h-1zM147 187h2v3h-2zM430 187h2v3h-2zM448 187h1v3h-1zM474 187h2v3h-2zM484 187h1v3h-1zM632 187h1v3h-1zM445 190h1v4h-1zM448 190h1v4h-1zM463 190h1v4h-1zM474 190h2v4h-2zM494 190h1v4h-1zM556 190h1v4h-1zM600 190h1v4h-1zM445 194h1v4h-1zM448 194h1v4h-1zM471 194h1v4h-1zM473 194h4v4h-4zM483 194h1v4h-1zM556 194h1v4h-1zM445 198h1v3h-1zM448 198h1v3h-1zM460 198h1v3h-1zM471 198h1v3h-1zM473 198h1v3h-1zM476 198h1v3h-1zM556 198h1v3h-1zM558 198h1v3h-1zM630 198h1v3h-1zM445 201h1v4h-1zM448 201h1v4h-1zM459 201h1v4h-1zM512 201h1v4h-1zM555 201h1v4h-1zM558 201h1v4h-1zM604 201h1v4h-1zM451 205h1v4h-1zM512 205h1v4h-1zM555 205h1v4h-1zM629 205h1v4h-1zM451 209h1v3h-1zM512 209h1v3h-1zM555 209h1v3h-1zM451 212h1v4h-1zM512 212h1v4h-1zM555 212h1v4h-1zM451 216h1v4h-1zM554 216h1v4h-1zM560 216h1v4h-1zM630 216h1v4h-1zM403 220h1v3h-1zM451 220h1v3h-1zM510 220h1v3h-1zM513 220h1v3h-1zM560 220h1v3h-1zM611 220h1v3h-1zM628 220h1v3h-1zM403 223h1v4h-1zM510 223h1v4h-1zM512 223h2v4h-2zM559 223h2v4h-2zM510 227h1v4h-1zM512 227h2v4h-2zM518 227h1v4h-1zM559 227h2v4h-2zM403 231h1v3h-1zM405 231h1v3h-1zM510 231h1v3h-1zM512 231h2v3h-2zM520 231h1v3h-1zM523 231h1v3h-1zM525 231h1v3h-1zM543 231h2v3h-2zM548 231h1v3h-1zM559 231h2v3h-2zM592 231h1v3h-1zM619 231h1v3h-1zM703 231h1v3h-1zM403 234h1v4h-1zM405 234h1v4h-1zM510 234h1v4h-1zM513 234h1v4h-1zM517 234h1v4h-1zM523 234h1v4h-1zM525 234h1v4h-1zM543 234h2v4h-2zM548 234h1v4h-1zM559 234h2v4h-2zM617 234h1v4h-1zM702 234h2v4h-2zM403 238h1v4h-1zM405 238h1v4h-1zM509 238h2v4h-2zM513 238h1v4h-1zM516 238h2v4h-2zM544 238h1v4h-1zM548 238h1v4h-1zM556 238h1v4h-1zM559 238h2v4h-2zM590 238h1v4h-1zM702 238h2v4h-2zM402 242h2v3h-2zM405 242h1v3h-1zM509 242h2v3h-2zM513 242h1v3h-1zM516 242h1v3h-1zM528 242h2v3h-2zM544 242h2v3h-2zM548 242h2v3h-2zM556 242h1v3h-1zM559 242h3v3h-3zM590 242h1v3h-1zM622 242h1v3h-1zM702 242h2v3h-2zM402 245h2v4h-2zM405 245h1v4h-1zM509 245h2v4h-2zM512 245h2v4h-2zM516 245h1v4h-1zM528 245h2v4h-2zM543 245h2v4h-2zM548 245h1v4h-1zM556 245h1v4h-1zM561 245h1v4h-1zM590 245h1v4h-1zM702 245h2v4h-2zM391 249h1v3h-1zM402 249h2v3h-2zM405 249h1v3h-1zM509 249h2v3h-2zM512 249h2v3h-2zM516 249h1v3h-1zM528 249h2v3h-2zM543 249h4v3h-4zM556 249h1v3h-1zM561 249h1v3h-1zM590 249h1v3h-1zM391 252h1v4h-1zM403 252h1v4h-1zM405 252h2v4h-2zM509 252h2v4h-2zM512 252h2v4h-2zM516 252h1v4h-1zM519 252h1v4h-1zM528 252h1v4h-1zM530 252h1v4h-1zM542 252h5v4h-5zM556 252h1v4h-1zM561 252h1v4h-1zM590 252h1v4h-1zM391 256h1v4h-1zM406 256h1v4h-1zM509 256h2v4h-2zM512 256h2v4h-2zM519 256h1v4h-1zM528 256h3v4h-3zM542 256h5v4h-5zM561 256h1v4h-1zM590 256h1v4h-1zM593 256h2v4h-2zM406 260h1v3h-1zM509 260h1v3h-1zM512 260h2v3h-2zM519 260h1v3h-1zM528 260h4v3h-4zM542 260h5v3h-5zM561 260h1v3h-1zM590 260h1v3h-1zM593 260h2v3h-2zM134 263h1v4h-1zM384 263h1v4h-1zM392 263h1v4h-1zM406 263h1v4h-1zM509 263h1v4h-1zM512 263h2v4h-2zM519 263h1v4h-1zM528 263h4v4h-4zM542 263h3v4h-3zM546 263h1v4h-1zM561 263h1v4h-1zM593 263h2v4h-2zM134 267h1v4h-1zM202 267h1v4h-1zM345 267h1v4h-1zM362 267h2v4h-2zM372 267h1v4h-1zM383 267h2v4h-2zM405 267h2v4h-2zM509 267h1v4h-1zM513 267h1v4h-1zM519 267h1v4h-1zM523 267h1v4h-1zM528 267h4v4h-4zM542 267h3v4h-3zM561 267h1v4h-1zM593 267h2v4h-2zM134 271h1v3h-1zM202 271h1v3h-1zM248 271h1v3h-1zM345 271h1v3h-1zM362 271h2v3h-2zM383 271h2v3h-2zM405 271h2v3h-2zM517 271h1v3h-1zM519 271h1v3h-1zM529 271h1v3h-1zM532 271h1v3h-1zM542 271h1v3h-1zM565 271h1v3h-1zM589 271h1v3h-1zM593 271h2v3h-2zM122 274h2v4h-2zM131 274h1v4h-1zM134 274h1v4h-1zM202 274h1v4h-1zM248 274h1v4h-1zM330 274h1v4h-1zM338 274h1v4h-1zM345 274h2v4h-2zM360 274h1v4h-1zM362 274h2v4h-2zM383 274h2v4h-2zM389 274h1v4h-1zM405 274h2v4h-2zM512 274h1v4h-1zM561 274h1v4h-1zM565 274h1v4h-1zM589 274h1v4h-1zM593 274h2v4h-2zM122 278h2v4h-2zM131 278h1v4h-1zM248 278h1v4h-1zM257 278h1v4h-1zM296 278h1v4h-1zM330 278h2v4h-2zM337 278h2v4h-2zM340 278h1v4h-1zM345 278h2v4h-2zM360 278h1v4h-1zM362 278h2v4h-2zM381 278h1v4h-1zM383 278h2v4h-2zM389 278h1v4h-1zM405 278h2v4h-2zM512 278h1v4h-1zM561 278h1v4h-1zM589 278h1v4h-1zM593 278h2v4h-2zM122 282h2v3h-2zM131 282h1v3h-1zM147 282h1v3h-1zM229 282h1v3h-1zM248 282h1v3h-1zM285 282h2v3h-2zM296 282h1v3h-1zM307 282h1v3h-1zM324 282h1v3h-1zM330 282h2v3h-2zM338 282h1v3h-1zM340 282h1v3h-1zM345 282h1v3h-1zM360 282h1v3h-1zM362 282h2v3h-2zM383 282h2v3h-2zM389 282h1v3h-1zM405 282h2v3h-2zM511 282h1v3h-1zM555 282h1v3h-1zM560 282h2v3h-2zM589 282h1v3h-1zM593 282h2v3h-2zM642 282h1v3h-1zM122 285h2v4h-2zM131 285h1v4h-1zM147 285h1v4h-1zM229 285h1v4h-1zM248 285h1v4h-1zM252 285h1v4h-1zM256 285h1v4h-1zM270 285h3v4h-3zM285 285h2v4h-2zM296 285h1v4h-1zM307 285h1v4h-1zM326 285h1v4h-1zM330 285h2v4h-2zM338 285h1v4h-1zM340 285h1v4h-1zM345 285h1v4h-1zM360 285h1v4h-1zM362 285h2v4h-2zM383 285h1v4h-1zM389 285h2v4h-2zM405 285h2v4h-2zM537 285h3v4h-3zM589 285h1v4h-1zM593 285h2v4h-2zM642 285h1v4h-1zM121 289h3v4h-3zM131 289h1v4h-1zM147 289h1v4h-1zM205 289h1v4h-1zM208 289h1v4h-1zM228 289h1v4h-1zM248 289h1v4h-1zM256 289h1v4h-1zM259 289h1v4h-1zM269 289h4v4h-4zM285 289h2v4h-2zM296 289h1v4h-1zM307 289h1v4h-1zM323 289h2v4h-2zM326 289h1v4h-1zM330 289h3v4h-3zM338 289h1v4h-1zM340 289h1v4h-1zM343 289h3v4h-3zM360 289h1v4h-1zM362 289h2v4h-2zM383 289h1v4h-1zM389 289h3v4h-3zM405 289h2v4h-2zM515 289h1v4h-1zM526 289h1v4h-1zM529 289h3v4h-3zM544 289h14v4h-14zM560 289h4v4h-4zM589 289h1v4h-1zM594 289h1v4h-1zM642 289h1v4h-1zM121 293h3v3h-3zM131 293h1v3h-1zM147 293h1v3h-1zM205 293h1v3h-1zM208 293h1v3h-1zM227 293h2v3h-2zM248 293h1v3h-1zM251 293h1v3h-1zM255 293h1v3h-1zM259 293h1v3h-1zM269 293h4v3h-4zM285 293h2v3h-2zM296 293h1v3h-1zM307 293h1v3h-1zM323 293h2v3h-2zM326 293h1v3h-1zM329 293h4v3h-4zM338 293h1v3h-1zM340 293h1v3h-1zM343 293h3v3h-3zM362 293h2v3h-2zM384 293h1v3h-1zM389 293h3v3h-3zM405 293h2v3h-2zM571 293h1v3h-1zM589 293h1v3h-1zM594 293h1v3h-1zM642 293h1v3h-1zM122 296h2v4h-2zM131 296h1v4h-1zM208 296h1v4h-1zM227 296h2v4h-2zM240 296h1v4h-1zM248 296h1v4h-1zM251 296h1v4h-1zM253 296h1v4h-1zM259 296h1v4h-1zM269 296h4v4h-4zM285 296h2v4h-2zM296 296h1v4h-1zM307 296h1v4h-1zM323 296h2v4h-2zM326 296h1v4h-1zM329 296h2v4h-2zM332 296h1v4h-1zM338 296h1v4h-1zM340 296h1v4h-1zM343 296h3v4h-3zM362 296h2v4h-2zM388 296h2v4h-2zM391 296h1v4h-1zM405 296h1v4h-1zM572 296h1v4h-1zM589 296h1v4h-1zM594 296h1v4h-1zM615 296h1v4h-1zM631 296h1v4h-1zM642 296h1v4h-1zM122 300h2v3h-2zM131 300h1v3h-1zM164 300h1v3h-1zM174 300h1v3h-1zM208 300h1v3h-1zM227 300h2v3h-2zM248 300h1v3h-1zM253 300h1v3h-1zM259 300h1v3h-1zM269 300h2v3h-2zM285 300h3v3h-3zM296 300h1v3h-1zM324 300h1v3h-1zM326 300h1v3h-1zM329 300h2v3h-2zM338 300h1v3h-1zM340 300h1v3h-1zM345 300h1v3h-1zM362 300h2v3h-2zM365 300h1v3h-1zM389 300h1v3h-1zM391 300h1v3h-1zM405 300h1v3h-1zM568 300h1v3h-1zM573 300h1v3h-1zM589 300h1v3h-1zM594 300h1v3h-1zM614 300h1v3h-1zM642 300h1v3h-1zM122 303h2v4h-2zM131 303h1v4h-1zM164 303h1v4h-1zM174 303h1v4h-1zM227 303h2v4h-2zM248 303h2v4h-2zM269 303h2v4h-2zM285 303h3v4h-3zM296 303h1v4h-1zM322 303h1v4h-1zM324 303h3v4h-3zM329 303h2v4h-2zM338 303h1v4h-1zM340 303h1v4h-1zM345 303h1v4h-1zM361 303h3v4h-3zM389 303h3v4h-3zM405 303h1v4h-1zM569 303h1v4h-1zM574 303h1v4h-1zM589 303h1v4h-1zM594 303h1v4h-1zM628 303h1v4h-1zM638 303h1v4h-1zM642 303h1v4h-1zM121 307h3v4h-3zM131 307h1v4h-1zM164 307h1v4h-1zM174 307h1v4h-1zM227 307h1v4h-1zM229 307h1v4h-1zM248 307h2v4h-2zM269 307h2v4h-2zM284 307h4v4h-4zM296 307h1v4h-1zM299 307h1v4h-1zM322 307h1v4h-1zM324 307h2v4h-2zM328 307h3v4h-3zM338 307h1v4h-1zM340 307h1v4h-1zM345 307h1v4h-1zM361 307h3v4h-3zM390 307h2v4h-2zM405 307h1v4h-1zM570 307h1v4h-1zM575 307h1v4h-1zM589 307h1v4h-1zM627 307h1v4h-1zM418 311h1v3h-1zM571 311h1v3h-1zM610 311h1v3h-1zM81 314h4v4h-4zM87 314h1v4h-1zM90 314h1v4h-1zM92 314h2v4h-2zM141 314h1v4h-1zM193 314h1v4h-1zM240 314h8v4h-8zM249 314h1v4h-1zM252 314h3v4h-3zM260 314h2v4h-2zM267 314h15v4h-15zM287 314h3v4h-3zM306 314h1v4h-1zM319 314h4v4h-4zM329 314h2v4h-2zM363 314h1v4h-1zM372 314h1v4h-1zM380 314h2v4h-2zM406 314h2v4h-2zM410 314h1v4h-1zM423 314h1v4h-1zM453 314h1v4h-1zM476 314h4v4h-4zM504 314h1v4h-1zM572 314h1v4h-1zM575 314h1v4h-1zM636 314h3v4h-3zM204 318h1v4h-1zM206 318h1v4h-1zM208 318h5v4h-5zM219 318h1v4h-1zM234 318h2v4h-2zM420 318h1v4h-1zM431 318h1v4h-1zM464 318h1v4h-1zM494 318h4v4h-4zM576 318h1v4h-1zM589 318h1v4h-1zM601 318h3v4h-3zM605 318h1v4h-1zM616 318h1v4h-1zM633 318h1v4h-1zM639 318h1v4h-1zM688 318h5v4h-5zM699 318h3v4h-3zM704 318h3v4h-3zM577 322h1v3h-1zM620 322h2v3h-2zM694 322h2v3h-2zM697 322h3v3h-3zM622 325h2v4h-2zM630 325h1v4h-1zM84 329h4v4h-4zM98 329h4v4h-4zM108 329h2v4h-2zM123 329h1v4h-1zM126 329h2v4h-2zM144 329h2v4h-2zM160 329h2v4h-2zM180 329h2v4h-2zM246 329h1v4h-1zM254 329h2v4h-2zM287 329h2v4h-2zM349 329h1v4h-1zM375 329h3v4h-3zM503 329h1v4h-1zM613 329h1v4h-1zM624 329h1v4h-1zM639 329h2v4h-2zM643 329h1v4h-1zM81 333h2v3h-2zM85 333h3v3h-3zM92 333h1v3h-1zM98 333h2v3h-2zM102 333h5v3h-5zM108 333h1v3h-1zM111 333h3v3h-3zM119 333h1v3h-1zM125 333h2v3h-2zM130 333h3v3h-3zM136 333h14v3h-14zM151 333h1v3h-1zM157 333h3v3h-3zM167 333h4v3h-4zM173 333h3v3h-3zM180 333h3v3h-3zM201 333h1v3h-1zM207 333h1v3h-1zM229 333h1v3h-1zM231 333h9v3h-9zM247 333h4v3h-4zM257 333h12v3h-12zM301 333h1v3h-1zM313 333h1v3h-1zM325 333h3v3h-3zM329 333h17v3h-17zM347 333h1v3h-1zM361 333h8v3h-8zM371 333h3v3h-3zM376 333h2v3h-2zM382 333h1v3h-1zM384 333h8v3h-8zM394 333h1v3h-1zM398 333h2v3h-2zM403 333h1v3h-1zM405 333h1v3h-1zM409 333h3v3h-3zM414 333h8v3h-8zM424 333h9v3h-9zM435 333h6v3h-6zM452 333h19v3h-19zM472 333h4v3h-4zM477 333h12v3h-12zM499 333h3v3h-3zM644 333h1v3h-1zM648 333h1v3h-1zM665 333h1v3h-1zM691 333h1v3h-1zM695 333h1v3h-1zM708 333h7v3h-7zM716 333h2v3h-2zM599 336h1v4h-1zM649 336h1v4h-1zM651 336h1v4h-1zM653 336h1v4h-1zM656 336h1v4h-1zM658 336h2v4h-2zM669 336h1v4h-1zM673 336h4v4h-4zM691 336h8v4h-8zM703 336h4v4h-4zM708 336h3v4h-3zM718 336h2v4h-2zM588 340h4v4h-4zM654 340h1v4h-1zM661 340h9v4h-9zM671 340h2v4h-2zM675 340h2v4h-2zM678 340h1v4h-1zM681 340h4v4h-4zM686 340h5v4h-5zM692 340h8v4h-8zM702 340h6v4h-6zM709 340h3v4h-3zM713 340h7v4h-7zM589 344h2v3h-2zM655 344h4v3h-4zM662 344h1v3h-1zM664 344h14v3h-14zM679 344h3v3h-3zM683 344h2v3h-2zM693 344h6v3h-6zM700 344h10v3h-10zM715 344h3v3h-3zM719 344h1v3h-1z"/>
<path fill="#e89b00" d="M599 143h1v4h-1zM597 154h1v4h-1zM602 158h1v3h-1zM608 158h1v3h-1zM634 158h1v3h-1zM636 158h1v3h-1zM508 165h1v4h-1zM529 165h3v4h-3zM627 165h1v4h-1zM328 169h1v3h-1zM530 169h1v3h-1zM318 172h1v4h-1zM327 172h1v4h-1zM597 172h1v4h-1zM604 172h1v4h-1zM622 172h1v4h-1zM316 176h1v4h-1zM621 176h1v4h-1zM626 176h1v4h-1zM619 180h1v3h-1zM621 180h1v3h-1zM306 183h1v4h-1zM308 183h1v4h-1zM480 183h1v4h-1zM599 183h1v4h-1zM628 183h1v4h-1zM309 190h1v4h-1zM439 190h1v4h-1zM616 190h1v4h-1zM621 190h1v4h-1zM482 194h1v4h-1zM463 201h1v4h-1zM629 201h1v4h-1zM612 216h1v4h-1zM626 234h1v4h-1zM625 238h1v4h-1z"/>
<path fill="#cf9600" d="M604 154h1v4h-1zM607 154h1v4h-1zM530 161h1v4h-1zM600 161h1v4h-1zM597 165h1v4h-1zM507 169h1v3h-1zM606 169h1v3h-1zM434 172h1v4h-1zM485 172h1v4h-1zM633 172h1v4h-1zM329 176h1v4h-1zM463 176h1v4h-1zM610 176h1v4h-1zM617 176h1v4h-1zM307 180h1v3h-1zM633 180h1v3h-1zM462 183h1v4h-1zM614 183h1v4h-1zM600 187h1v3h-1zM435 190h1v4h-1zM618 190h1v4h-1zM479 194h1v4h-1zM440 198h1v3h-1zM614 201h1v4h-1zM616 201h1v4h-1zM437 212h1v4h-1zM441 212h1v4h-1zM614 216h1v4h-1zM616 216h1v4h-1zM439 220h1v3h-1zM627 223h1v4h-1zM618 227h1v4h-1zM627 227h1v4h-1zM617 231h1v3h-1zM626 231h1v3h-1zM622 238h1v4h-1z"/>
<path fill="#b29100" d="M634 147h1v3h-1zM593 158h1v3h-1zM605 158h1v3h-1zM602 161h3v4h-3zM521 165h1v4h-1zM485 169h1v3h-1zM604 169h1v3h-1zM316 172h1v4h-1zM482 172h1v4h-1zM306 176h2v4h-2zM318 176h1v4h-1zM462 176h1v4h-1zM615 176h1v4h-1zM620 176h1v4h-1zM624 176h1v4h-1zM317 180h2v3h-2zM329 180h1v3h-1zM614 180h1v3h-1zM309 187h1v3h-1zM480 187h1v3h-1zM628 187h1v3h-1zM618 194h1v4h-1zM436 198h1v3h-1zM627 198h1v3h-1zM629 198h1v3h-1zM460 201h2v4h-2zM627 201h1v4h-1zM606 205h2v4h-2zM437 209h1v3h-1zM608 209h1v3h-1zM628 209h1v3h-1zM442 220h1v3h-1zM627 234h1v4h-1z"/>
<path fill="#948b00" d="M599 150h1v4h-1zM640 154h1v4h-1zM598 158h1v3h-1zM604 158h1v3h-1zM633 158h1v3h-1zM595 161h1v4h-1zM596 165h1v4h-1zM603 165h1v4h-1zM608 165h1v4h-1zM611 165h1v4h-1zM622 165h2v4h-2zM483 169h2v3h-2zM605 169h1v3h-1zM610 172h1v4h-1zM308 176h1v4h-1zM612 176h1v4h-1zM308 180h1v3h-1zM326 180h1v3h-1zM461 180h1v3h-1zM626 180h1v3h-1zM307 183h1v4h-1zM621 183h1v4h-1zM627 183h1v4h-1zM613 187h3v3h-3zM480 190h1v4h-1zM435 194h1v4h-1zM480 194h1v4h-1zM461 198h1v3h-1zM607 198h1v3h-1zM628 201h1v4h-1zM440 205h1v4h-1zM441 209h1v3h-1zM610 212h1v4h-1zM612 212h1v4h-1zM441 216h2v4h-2zM614 220h1v3h-1z"/>
<path fill="#979500" d="M598 150h1v4h-1zM593 154h1v4h-1zM598 154h1v4h-1zM601 154h1v4h-1zM597 158h1v3h-1zM599 161h1v4h-1zM606 161h1v4h-1zM608 161h1v4h-1zM596 169h1v3h-1zM622 169h2v3h-2zM307 172h1v4h-1zM483 172h1v4h-1zM613 172h1v4h-1zM623 172h1v4h-1zM327 176h1v4h-1zM483 176h1v4h-1zM463 180h1v3h-1zM598 180h1v3h-1zM620 180h1v3h-1zM463 183h1v4h-1zM438 187h1v3h-1zM612 190h1v4h-1zM461 194h1v4h-1zM481 194h1v4h-1zM626 194h1v4h-1zM704 194h1v4h-1zM603 198h1v3h-1zM605 198h1v3h-1zM616 212h1v4h-1zM438 216h2v4h-2zM619 227h1v4h-1zM620 234h1v4h-1zM549 245h1v4h-1zM549 249h1v3h-1zM554 249h1v3h-1zM549 252h1v4h-1zM549 256h1v4h-1zM549 260h1v3h-1zM549 263h1v4h-1zM549 267h1v4h-1zM559 274h1v4h-1zM246 278h1v4h-1zM559 278h1v4h-1zM118 282h1v3h-1zM246 282h1v3h-1zM118 285h1v4h-1zM246 285h1v4h-1zM548 285h3v4h-3zM369 314h2v4h-2zM412 314h1v4h-1zM136 318h2v4h-2zM175 318h2v4h-2zM185 318h8v4h-8zM674 318h1v4h-1zM712 318h2v4h-2zM103 329h3v4h-3zM117 329h1v4h-1zM237 329h2v4h-2zM270 329h1v4h-1zM300 329h2v4h-2zM361 329h1v4h-1zM382 329h2v4h-2zM692 333h2v3h-2zM697 333h1v3h-1z"/>
<path fill="#a6a300" d="M606 158h1v3h-1zM610 158h1v3h-1zM609 161h1v4h-1zM609 165h1v4h-1zM597 169h1v3h-1zM602 169h1v3h-1zM435 176h1v4h-1zM484 176h1v4h-1zM597 176h1v4h-1zM602 176h1v4h-1zM608 176h1v4h-1zM622 180h1v3h-1zM481 183h2v4h-2zM602 183h1v4h-1zM626 183h1v4h-1zM439 187h1v3h-1zM481 187h1v3h-1zM617 187h1v3h-1zM621 187h1v3h-1zM484 190h1v4h-1zM614 194h1v4h-1zM436 201h1v4h-1zM462 201h1v4h-1zM619 201h1v4h-1zM436 205h1v4h-1zM616 205h1v4h-1zM627 212h1v4h-1zM615 223h1v4h-1zM618 223h1v4h-1zM625 231h1v3h-1zM625 234h1v4h-1z"/>
<path fill="#b5b200" d="M601 158h1v3h-1zM600 165h2v4h-2zM599 169h1v3h-1zM319 172h1v4h-1zM435 172h1v4h-1zM484 172h1v4h-1zM603 172h1v4h-1zM606 172h2v4h-2zM434 176h1v4h-1zM436 176h1v4h-1zM482 176h1v4h-1zM435 180h1v3h-1zM600 180h1v3h-1zM625 180h1v3h-1zM628 180h1v3h-1zM461 183h1v4h-1zM606 183h1v4h-1zM613 183h1v4h-1zM461 187h1v3h-1zM463 187h1v3h-1zM602 187h1v3h-1zM625 187h2v3h-2zM461 190h1v4h-1zM617 190h1v4h-1zM626 190h1v4h-1zM439 194h1v4h-1zM624 209h1v3h-1zM440 212h1v4h-1zM611 212h1v4h-1zM614 212h1v4h-1zM628 212h1v4h-1zM441 220h1v3h-1zM621 220h1v3h-1zM621 238h1v4h-1z"/>
<path fill="#c4c100" d="M599 158h1v3h-1zM601 161h1v4h-1zM598 165h1v4h-1zM604 165h1v4h-1zM610 169h1v3h-1zM612 169h1v3h-1zM611 176h1v4h-1zM627 176h1v4h-1zM482 180h1v3h-1zM484 180h1v3h-1zM603 180h1v3h-1zM624 180h1v3h-1zM600 183h1v4h-1zM611 183h1v4h-1zM603 187h1v3h-1zM481 190h3v4h-3zM614 190h1v4h-1zM619 190h1v4h-1zM436 194h1v4h-1zM462 194h2v4h-2zM437 198h1v3h-1zM616 198h1v3h-1zM618 198h1v3h-1zM626 198h1v3h-1zM625 201h1v4h-1zM617 205h1v4h-1zM625 205h1v4h-1zM439 209h1v3h-1zM624 212h1v4h-1zM611 216h1v4h-1zM440 220h1v3h-1zM617 223h1v4h-1zM621 227h1v4h-1zM627 231h1v3h-1z"/>
<path fill="#d3cf00" d="M607 165h1v4h-1zM610 165h1v4h-1zM600 172h1v4h-1zM598 176h1v4h-1zM604 176h1v4h-1zM623 176h1v4h-1zM605 180h1v3h-1zM437 183h1v4h-1zM483 183h1v4h-1zM623 183h2v4h-2zM462 187h1v3h-1zM483 187h1v3h-1zM601 187h1v3h-1zM436 190h1v4h-1zM603 190h1v4h-1zM610 190h1v4h-1zM615 190h1v4h-1zM619 194h1v4h-1zM627 194h1v4h-1zM439 201h1v4h-1zM606 201h1v4h-1zM437 205h1v4h-1zM619 205h1v4h-1zM624 205h1v4h-1zM627 205h1v4h-1zM609 209h1v3h-1zM611 209h1v3h-1zM617 209h1v3h-1zM613 212h1v4h-1zM617 216h2v4h-2zM628 223h1v4h-1zM626 227h1v4h-1zM621 234h1v4h-1z"/>
<path fill="#e2de00" d="M598 172h1v4h-1zM605 172h1v4h-1zM609 172h1v4h-1zM605 176h1v4h-1zM622 176h1v4h-1zM437 180h1v3h-1zM623 180h1v3h-1zM435 183h1v4h-1zM603 183h1v4h-1zM610 183h1v4h-1zM436 187h1v3h-1zM482 187h1v3h-1zM612 187h1v3h-1zM462 190h1v4h-1zM620 190h1v4h-1zM624 194h2v4h-2zM606 198h1v3h-1zM621 201h2v4h-2zM438 209h1v3h-1zM440 209h1v3h-1zM619 216h1v4h-1zM616 220h1v3h-1zM619 220h1v3h-1zM626 223h1v4h-1z"/>
<path fill="#f0eb01" d="M601 169h1v3h-1zM607 169h1v3h-1zM601 172h1v4h-1zM606 180h1v3h-1zM611 180h1v3h-1zM436 183h1v4h-1zM622 183h1v4h-1zM620 187h1v3h-1zM624 187h1v3h-1zM627 187h1v3h-1zM438 190h1v4h-1zM602 190h1v4h-1zM625 190h1v4h-1zM628 190h1v4h-1zM438 194h1v4h-1zM612 194h2v4h-2zM438 198h1v3h-1zM626 201h1v4h-1zM614 205h1v4h-1zM610 209h1v3h-1zM619 209h1v3h-1zM621 209h1v3h-1zM439 212h1v4h-1zM618 212h1v4h-1zM620 212h2v4h-2zM626 212h1v4h-1zM615 220h1v3h-1zM625 220h1v3h-1zM620 223h1v4h-1zM624 223h1v4h-1zM621 231h1v3h-1zM623 242h1v3h-1z"/>
<path fill="#f5f007" d="M597 161h1v4h-1zM608 169h1v3h-1zM611 169h1v3h-1zM599 172h1v4h-1zM602 172h1v4h-1zM611 172h1v4h-1zM600 176h1v4h-1zM606 176h1v4h-1zM483 180h1v3h-1zM602 180h1v3h-1zM604 180h1v3h-1zM627 180h1v3h-1zM612 183h1v4h-1zM610 187h1v3h-1zM622 187h1v3h-1zM605 190h1v4h-1zM613 190h1v4h-1zM627 190h1v4h-1zM437 194h1v4h-1zM615 194h1v4h-1zM617 194h1v4h-1zM620 194h1v4h-1zM439 198h1v3h-1zM611 198h1v3h-1zM617 198h1v3h-1zM619 198h1v3h-1zM438 205h1v4h-1zM614 209h1v3h-1zM625 209h1v3h-1zM619 212h1v4h-1zM625 216h1v4h-1zM618 220h1v3h-1zM621 223h1v4h-1zM623 227h1v4h-1zM625 227h1v4h-1z"/>
<path fill="#faf50e" d="M599 176h1v4h-1zM462 180h1v3h-1zM610 180h1v3h-1zM608 183h1v4h-1zM437 187h1v3h-1zM601 190h1v4h-1zM604 194h1v4h-1zM611 194h1v4h-1zM622 194h1v4h-1zM623 198h1v3h-1zM438 201h1v4h-1zM607 201h1v4h-1zM439 205h1v4h-1zM626 205h1v4h-1zM618 209h1v3h-1zM615 212h1v4h-1zM440 216h1v4h-1zM626 216h1v4h-1zM624 227h1v4h-1zM624 231h1v3h-1zM624 234h1v4h-1z"/>
<path fill="#fffa14" d="M598 161h1v4h-1zM598 169h1v3h-1zM608 172h1v4h-1zM436 180h1v3h-1zM557 180h1v3h-1zM473 183h1v4h-1zM557 183h1v4h-1zM605 183h1v4h-1zM607 183h1v4h-1zM473 187h1v3h-1zM557 187h1v3h-1zM437 190h1v4h-1zM473 190h1v4h-1zM557 190h1v4h-1zM606 190h1v4h-1zM624 190h1v4h-1zM557 194h1v4h-1zM462 198h1v3h-1zM512 198h1v3h-1zM557 198h1v3h-1zM559 198h1v3h-1zM604 198h1v3h-1zM620 198h2v3h-2zM437 201h1v4h-1zM557 201h1v4h-1zM559 201h1v4h-1zM516 205h2v4h-2zM557 205h1v4h-1zM559 205h1v4h-1zM608 205h2v4h-2zM618 205h1v4h-1zM621 205h1v4h-1zM557 209h1v3h-1zM559 209h2v3h-2zM515 212h3v4h-3zM557 212h1v4h-1zM559 212h2v4h-2zM515 216h1v4h-1zM559 216h1v4h-1zM627 216h1v4h-1zM404 220h1v3h-1zM511 220h1v3h-1zM515 220h2v3h-2zM554 220h1v3h-1zM557 220h3v3h-3zM617 220h1v3h-1zM623 220h1v3h-1zM626 220h1v3h-1zM404 223h1v4h-1zM511 223h1v4h-1zM514 223h3v4h-3zM521 223h2v4h-2zM554 223h1v4h-1zM557 223h2v4h-2zM404 227h1v4h-1zM511 227h1v4h-1zM514 227h3v4h-3zM520 227h3v4h-3zM554 227h1v4h-1zM557 227h2v4h-2zM135 231h1v3h-1zM404 231h1v3h-1zM511 231h1v3h-1zM514 231h3v3h-3zM518 231h1v3h-1zM521 231h2v3h-2zM554 231h1v3h-1zM557 231h2v3h-2zM561 231h1v3h-1zM620 231h1v3h-1zM135 234h1v4h-1zM382 234h2v4h-2zM404 234h1v4h-1zM511 234h1v4h-1zM514 234h3v4h-3zM518 234h1v4h-1zM520 234h3v4h-3zM554 234h1v4h-1zM557 234h2v4h-2zM591 234h2v4h-2zM623 234h1v4h-1zM135 238h1v4h-1zM382 238h2v4h-2zM511 238h1v4h-1zM514 238h2v4h-2zM518 238h1v4h-1zM520 238h4v4h-4zM542 238h1v4h-1zM547 238h1v4h-1zM554 238h1v4h-1zM557 238h2v4h-2zM592 238h1v4h-1zM620 238h1v4h-1zM135 242h1v3h-1zM382 242h3v3h-3zM511 242h1v3h-1zM515 242h1v3h-1zM518 242h1v3h-1zM520 242h4v3h-4zM542 242h1v3h-1zM547 242h1v3h-1zM554 242h1v3h-1zM557 242h2v3h-2zM592 242h2v3h-2zM135 245h1v4h-1zM382 245h3v4h-3zM511 245h1v4h-1zM515 245h1v4h-1zM518 245h1v4h-1zM520 245h3v4h-3zM542 245h1v4h-1zM547 245h1v4h-1zM554 245h1v4h-1zM557 245h3v4h-3zM592 245h2v4h-2zM135 249h1v3h-1zM382 249h3v3h-3zM511 249h1v3h-1zM515 249h1v3h-1zM518 249h1v3h-1zM520 249h3v3h-3zM542 249h1v3h-1zM547 249h1v3h-1zM557 249h3v3h-3zM592 249h2v3h-2zM135 252h1v4h-1zM382 252h3v4h-3zM511 252h1v4h-1zM515 252h1v4h-1zM518 252h1v4h-1zM520 252h3v4h-3zM547 252h1v4h-1zM554 252h1v4h-1zM557 252h3v4h-3zM589 252h1v4h-1zM592 252h2v4h-2zM135 256h1v4h-1zM224 256h2v4h-2zM383 256h1v4h-1zM403 256h1v4h-1zM405 256h1v4h-1zM511 256h1v4h-1zM516 256h1v4h-1zM518 256h1v4h-1zM521 256h2v4h-2zM527 256h1v4h-1zM547 256h1v4h-1zM554 256h1v4h-1zM557 256h2v4h-2zM589 256h1v4h-1zM592 256h1v4h-1zM135 260h1v3h-1zM223 260h3v3h-3zM383 260h1v3h-1zM403 260h3v3h-3zM510 260h2v3h-2zM516 260h1v3h-1zM518 260h1v3h-1zM521 260h2v3h-2zM527 260h1v3h-1zM547 260h1v3h-1zM554 260h1v3h-1zM557 260h2v3h-2zM589 260h1v3h-1zM592 260h1v3h-1zM135 263h1v4h-1zM223 263h3v4h-3zM383 263h1v4h-1zM403 263h3v4h-3zM510 263h2v4h-2zM516 263h1v4h-1zM518 263h1v4h-1zM520 263h3v4h-3zM527 263h1v4h-1zM547 263h1v4h-1zM554 263h1v4h-1zM557 263h2v4h-2zM589 263h1v4h-1zM592 263h1v4h-1zM135 267h1v4h-1zM163 267h1v4h-1zM223 267h3v4h-3zM246 267h2v4h-2zM403 267h2v4h-2zM510 267h2v4h-2zM518 267h1v4h-1zM520 267h3v4h-3zM527 267h1v4h-1zM535 267h1v4h-1zM547 267h1v4h-1zM554 267h1v4h-1zM557 267h2v4h-2zM592 267h1v4h-1zM135 271h1v3h-1zM163 271h1v3h-1zM223 271h3v3h-3zM246 271h2v3h-2zM297 271h2v3h-2zM339 271h1v3h-1zM361 271h1v3h-1zM364 271h1v3h-1zM390 271h1v3h-1zM403 271h2v3h-2zM510 271h2v3h-2zM520 271h1v3h-1zM527 271h1v3h-1zM535 271h3v3h-3zM547 271h1v3h-1zM557 271h2v3h-2zM592 271h1v3h-1zM135 274h1v4h-1zM163 274h1v4h-1zM223 274h3v4h-3zM245 274h3v4h-3zM296 274h2v4h-2zM333 274h2v4h-2zM339 274h1v4h-1zM344 274h1v4h-1zM361 274h1v4h-1zM364 274h1v4h-1zM390 274h1v4h-1zM403 274h2v4h-2zM510 274h2v4h-2zM513 274h1v4h-1zM535 274h1v4h-1zM537 274h1v4h-1zM541 274h6v4h-6zM557 274h2v4h-2zM592 274h1v4h-1zM135 278h1v4h-1zM163 278h1v4h-1zM202 278h1v4h-1zM223 278h3v4h-3zM245 278h1v4h-1zM247 278h1v4h-1zM297 278h1v4h-1zM333 278h2v4h-2zM339 278h1v4h-1zM344 278h1v4h-1zM361 278h1v4h-1zM364 278h1v4h-1zM390 278h1v4h-1zM403 278h2v4h-2zM510 278h2v4h-2zM513 278h2v4h-2zM524 278h1v4h-1zM532 278h2v4h-2zM535 278h2v4h-2zM544 278h1v4h-1zM550 278h1v4h-1zM557 278h2v4h-2zM592 278h1v4h-1zM135 282h1v3h-1zM143 282h1v3h-1zM163 282h1v3h-1zM202 282h1v3h-1zM223 282h3v3h-3zM245 282h1v3h-1zM247 282h1v3h-1zM257 282h1v3h-1zM297 282h1v3h-1zM333 282h2v3h-2zM339 282h1v3h-1zM344 282h1v3h-1zM361 282h1v3h-1zM364 282h1v3h-1zM390 282h1v3h-1zM403 282h2v3h-2zM512 282h1v3h-1zM515 282h1v3h-1zM519 282h2v3h-2zM528 282h1v3h-1zM531 282h1v3h-1zM533 282h3v3h-3zM541 282h2v3h-2zM553 282h1v3h-1zM557 282h1v3h-1zM592 282h1v3h-1zM124 285h1v4h-1zM135 285h1v4h-1zM143 285h1v4h-1zM163 285h1v4h-1zM189 285h1v4h-1zM202 285h1v4h-1zM223 285h3v4h-3zM245 285h1v4h-1zM247 285h1v4h-1zM257 285h1v4h-1zM262 285h1v4h-1zM297 285h1v4h-1zM333 285h2v4h-2zM339 285h1v4h-1zM344 285h1v4h-1zM361 285h1v4h-1zM364 285h1v4h-1zM403 285h2v4h-2zM512 285h25v4h-25zM540 285h8v4h-8zM551 285h8v4h-8zM562 285h2v4h-2zM592 285h1v4h-1zM124 289h1v4h-1zM135 289h1v4h-1zM143 289h1v4h-1zM163 289h1v4h-1zM189 289h1v4h-1zM202 289h1v4h-1zM223 289h3v4h-3zM246 289h2v4h-2zM257 289h2v4h-2zM262 289h1v4h-1zM284 289h1v4h-1zM297 289h1v4h-1zM333 289h2v4h-2zM339 289h1v4h-1zM361 289h1v4h-1zM364 289h1v4h-1zM403 289h2v4h-2zM511 289h4v4h-4zM516 289h10v4h-10zM527 289h2v4h-2zM532 289h2v4h-2zM538 289h2v4h-2zM570 289h1v4h-1zM592 289h2v4h-2zM124 293h1v3h-1zM135 293h1v3h-1zM143 293h1v3h-1zM163 293h1v3h-1zM189 293h1v3h-1zM202 293h1v3h-1zM223 293h4v3h-4zM247 293h1v3h-1zM257 293h2v3h-2zM262 293h1v3h-1zM284 293h1v3h-1zM297 293h1v3h-1zM333 293h2v3h-2zM360 293h2v3h-2zM364 293h1v3h-1zM382 293h2v3h-2zM403 293h2v3h-2zM510 293h1v3h-1zM591 293h3v3h-3zM121 296h1v4h-1zM124 296h1v4h-1zM135 296h1v4h-1zM143 296h1v4h-1zM163 296h1v4h-1zM189 296h1v4h-1zM202 296h1v4h-1zM205 296h1v4h-1zM223 296h3v4h-3zM247 296h1v4h-1zM257 296h2v4h-2zM262 296h1v4h-1zM284 296h1v4h-1zM297 296h1v4h-1zM333 296h2v4h-2zM360 296h2v4h-2zM364 296h1v4h-1zM382 296h1v4h-1zM403 296h2v4h-2zM507 296h1v4h-1zM510 296h1v4h-1zM568 296h1v4h-1zM591 296h3v4h-3zM617 296h1v4h-1zM630 296h1v4h-1zM121 300h1v3h-1zM124 300h1v3h-1zM135 300h1v3h-1zM143 300h1v3h-1zM163 300h1v3h-1zM189 300h1v3h-1zM202 300h1v3h-1zM205 300h1v3h-1zM222 300h4v3h-4zM247 300h1v3h-1zM257 300h2v3h-2zM262 300h1v3h-1zM272 300h1v3h-1zM284 300h1v3h-1zM297 300h1v3h-1zM331 300h1v3h-1zM333 300h2v3h-2zM361 300h1v3h-1zM364 300h1v3h-1zM382 300h1v3h-1zM404 300h1v3h-1zM507 300h1v3h-1zM509 300h1v3h-1zM569 300h1v3h-1zM591 300h3v3h-3zM615 300h2v3h-2zM618 300h2v3h-2zM628 300h1v3h-1zM121 303h1v4h-1zM124 303h1v4h-1zM135 303h1v4h-1zM143 303h1v4h-1zM163 303h1v4h-1zM189 303h1v4h-1zM202 303h1v4h-1zM205 303h1v4h-1zM222 303h4v4h-4zM245 303h1v4h-1zM247 303h1v4h-1zM257 303h3v4h-3zM262 303h1v4h-1zM272 303h1v4h-1zM284 303h1v4h-1zM297 303h1v4h-1zM331 303h1v4h-1zM334 303h1v4h-1zM344 303h1v4h-1zM365 303h1v4h-1zM382 303h1v4h-1zM404 303h1v4h-1zM508 303h1v4h-1zM570 303h1v4h-1zM575 303h1v4h-1zM591 303h3v4h-3zM613 303h2v4h-2zM621 303h1v4h-1zM629 303h1v4h-1zM124 307h1v4h-1zM135 307h1v4h-1zM143 307h1v4h-1zM163 307h1v4h-1zM189 307h1v4h-1zM202 307h1v4h-1zM205 307h1v4h-1zM222 307h4v4h-4zM245 307h1v4h-1zM247 307h1v4h-1zM257 307h3v4h-3zM262 307h1v4h-1zM272 307h1v4h-1zM297 307h1v4h-1zM326 307h1v4h-1zM331 307h1v4h-1zM334 307h1v4h-1zM339 307h1v4h-1zM344 307h1v4h-1zM365 307h1v4h-1zM382 307h1v4h-1zM404 307h1v4h-1zM506 307h1v4h-1zM508 307h1v4h-1zM571 307h1v4h-1zM576 307h1v4h-1zM591 307h4v4h-4zM610 307h1v4h-1zM622 307h1v4h-1zM626 307h1v4h-1zM630 307h3v4h-3zM636 307h2v4h-2zM639 307h1v4h-1zM505 311h1v3h-1zM507 311h1v3h-1zM572 311h1v3h-1zM576 311h1v3h-1zM608 311h2v3h-2zM611 311h1v3h-1zM617 311h1v3h-1zM624 311h2v3h-2zM628 311h2v3h-2zM634 311h2v3h-2zM85 314h2v4h-2zM338 314h1v4h-1zM340 314h2v4h-2zM344 314h1v4h-1zM355 314h2v4h-2zM358 314h1v4h-1zM360 314h1v4h-1zM364 314h5v4h-5zM371 314h1v4h-1zM373 314h4v4h-4zM378 314h2v4h-2zM382 314h22v4h-22zM405 314h1v4h-1zM408 314h2v4h-2zM411 314h1v4h-1zM413 314h10v4h-10zM424 314h3v4h-3zM428 314h17v4h-17zM446 314h7v4h-7zM454 314h22v4h-22zM480 314h7v4h-7zM506 314h1v4h-1zM573 314h1v4h-1zM577 314h1v4h-1zM607 314h1v4h-1zM609 314h1v4h-1zM612 314h1v4h-1zM615 314h2v4h-2zM618 314h2v4h-2zM626 314h2v4h-2zM630 314h3v4h-3zM98 318h18v4h-18zM119 318h17v4h-17zM138 318h28v4h-28zM167 318h6v4h-6zM174 318h1v4h-1zM177 318h5v4h-5zM183 318h2v4h-2zM193 318h1v4h-1zM197 318h4v4h-4zM202 318h1v4h-1zM205 318h1v4h-1zM207 318h1v4h-1zM213 318h2v4h-2zM218 318h1v4h-1zM220 318h7v4h-7zM228 318h6v4h-6zM236 318h5v4h-5zM243 318h2v4h-2zM246 318h15v4h-15zM263 318h6v4h-6zM270 318h20v4h-20zM291 318h32v4h-32zM324 318h14v4h-14zM421 318h10v4h-10zM432 318h19v4h-19zM452 318h12v4h-12zM465 318h22v4h-22zM488 318h6v4h-6zM498 318h7v4h-7zM506 318h1v4h-1zM574 318h1v4h-1zM582 318h7v4h-7zM590 318h11v4h-11zM606 318h1v4h-1zM613 318h2v4h-2zM620 318h2v4h-2zM628 318h2v4h-2zM634 318h2v4h-2zM640 318h4v4h-4zM650 318h1v4h-1zM652 318h22v4h-22zM675 318h6v4h-6zM685 318h3v4h-3zM693 318h3v4h-3zM697 318h2v4h-2zM702 318h2v4h-2zM707 318h2v4h-2zM715 318h2v4h-2zM505 322h1v3h-1zM575 322h1v3h-1zM612 322h1v3h-1zM623 322h1v3h-1zM626 322h3v3h-3zM635 322h2v3h-2zM644 322h2v3h-2zM648 322h1v3h-1zM505 325h1v4h-1zM576 325h1v4h-1zM607 325h1v4h-1zM610 325h2v4h-2zM624 325h2v4h-2zM627 325h1v4h-1zM636 325h8v4h-8zM81 329h3v4h-3zM88 329h10v4h-10zM106 329h2v4h-2zM110 329h7v4h-7zM118 329h1v4h-1zM120 329h3v4h-3zM124 329h2v4h-2zM128 329h3v4h-3zM136 329h4v4h-4zM141 329h3v4h-3zM149 329h5v4h-5zM155 329h5v4h-5zM162 329h9v4h-9zM172 329h8v4h-8zM182 329h8v4h-8zM191 329h3v4h-3zM195 329h9v4h-9zM207 329h2v4h-2zM212 329h15v4h-15zM228 329h9v4h-9zM239 329h1v4h-1zM247 329h7v4h-7zM256 329h5v4h-5zM262 329h5v4h-5zM268 329h2v4h-2zM271 329h5v4h-5zM277 329h2v4h-2zM281 329h3v4h-3zM286 329h1v4h-1zM289 329h11v4h-11zM302 329h2v4h-2zM308 329h18v4h-18zM331 329h7v4h-7zM342 329h7v4h-7zM352 329h9v4h-9zM362 329h5v4h-5zM368 329h1v4h-1zM370 329h5v4h-5zM378 329h4v4h-4zM384 329h13v4h-13zM398 329h10v4h-10zM410 329h10v4h-10zM426 329h1v4h-1zM432 329h16v4h-16zM449 329h1v4h-1zM452 329h1v4h-1zM454 329h2v4h-2zM457 329h6v4h-6zM468 329h1v4h-1zM477 329h2v4h-2zM480 329h3v4h-3zM486 329h7v4h-7zM496 329h4v4h-4zM501 329h2v4h-2zM504 329h1v4h-1zM577 329h1v4h-1zM608 329h2v4h-2zM641 329h2v4h-2zM644 329h5v4h-5zM197 333h2v3h-2zM224 333h1v3h-1zM270 333h11v3h-11zM291 333h1v3h-1zM328 333h1v3h-1zM360 333h1v3h-1zM369 333h1v3h-1zM380 333h1v3h-1zM383 333h1v3h-1zM395 333h3v3h-3zM407 333h2v3h-2zM422 333h2v3h-2zM433 333h2v3h-2zM578 333h3v3h-3zM584 333h16v3h-16zM601 333h7v3h-7zM645 333h2v3h-2zM649 333h4v3h-4zM654 333h7v3h-7zM664 333h1v3h-1zM666 333h6v3h-6zM677 333h14v3h-14zM694 333h1v3h-1zM696 333h1v3h-1zM698 333h5v3h-5zM704 333h4v3h-4zM719 333h1v3h-1zM650 336h1v4h-1z"/>
<path fill="#fffb21" d="M609 169h1v3h-1zM604 187h1v3h-1zM611 187h1v3h-1zM611 190h1v4h-1zM605 194h1v4h-1zM609 198h1v3h-1zM614 198h2v3h-2zM624 198h1v3h-1zM609 201h1v4h-1zM618 201h1v4h-1zM620 205h1v4h-1zM613 209h1v3h-1zM438 212h1v4h-1zM627 220h1v3h-1zM619 223h1v4h-1zM622 223h1v4h-1zM623 231h1v3h-1z"/>
<path fill="#fffc2e" d="M607 176h1v4h-1zM620 183h1v4h-1zM623 190h1v4h-1zM613 198h1v3h-1zM623 201h1v4h-1zM610 205h1v4h-1zM622 209h1v3h-1zM617 212h1v4h-1zM625 212h1v4h-1zM615 216h1v4h-1zM622 220h1v3h-1zM625 223h1v4h-1zM622 231h1v3h-1z"/>
<path fill="#fffd3b" d="M605 187h1v3h-1zM608 187h2v3h-2zM604 190h1v4h-1zM607 190h1v4h-1zM609 190h1v4h-1zM622 190h1v4h-1zM623 194h1v4h-1zM610 198h1v3h-1zM625 198h1v3h-1zM610 201h1v4h-1zM612 205h1v4h-1zM622 205h1v4h-1zM615 209h1v3h-1zM627 209h1v3h-1zM623 212h1v4h-1z"/>
<path fill="#fffe48" d="M609 176h1v4h-1zM601 180h1v3h-1zM607 180h1v3h-1zM609 180h1v3h-1zM606 187h1v3h-1zM606 194h2v4h-2zM620 201h1v4h-1zM611 205h1v4h-1zM615 205h1v4h-1zM623 209h1v3h-1zM620 216h2v4h-2zM623 216h2v4h-2zM620 220h1v3h-1zM624 220h1v3h-1zM620 227h1v4h-1zM623 238h1v4h-1z"/>
<path fill="#ffff56" d="M608 180h1v3h-1zM608 194h1v4h-1zM608 201h1v4h-1zM624 201h1v4h-1zM623 205h1v4h-1zM612 209h1v3h-1zM623 223h1v4h-1zM622 227h1v4h-1z"/>
<path fill="#ffff66" d="M600 169h1v3h-1zM601 176h1v4h-1zM612 201h1v4h-1zM617 201h1v4h-1z"/>
<path fill="#ffff76" d="M623 187h1v3h-1zM608 198h1v3h-1zM622 198h1v3h-1zM613 205h1v4h-1zM622 216h1v4h-1z"/>
<path fill="#ffff86" d="M601 183h1v4h-1zM610 194h1v4h-1zM613 201h1v4h-1zM620 209h1v3h-1z"/>
<path fill="#ffff97" d="M609 194h1v4h-1z"/>
<path fill="#ffffa7" d="M608 190h1v4h-1zM612 198h1v3h-1zM615 201h1v4h-1z"/>
<path fill="#ffffb6" d="M622 212h1v4h-1z"/>
<path fill="#ffffbf" d="M604 183h1v4h-1zM609 183h1v4h-1zM607 187h1v3h-1zM611 201h1v4h-1zM622 234h1v4h-1z"/>
<path fill="#ffffdd" d="M503 143h1v4h-1zM520 143h1v4h-1zM712 150h1v4h-1zM592 165h1v4h-1zM147 169h1v3h-1zM645 169h1v3h-1zM474 172h2v4h-2zM557 172h1v4h-1zM643 172h1v4h-1zM476 176h1v4h-1zM517 176h1v4h-1zM594 176h1v4h-1zM476 180h1v3h-1zM446 183h1v4h-1zM507 183h1v4h-1zM596 183h1v4h-1zM306 190h1v4h-1zM315 190h1v4h-1zM318 190h1v4h-1zM495 190h1v4h-1zM558 190h2v4h-2zM703 190h2v4h-2zM501 194h1v4h-1zM558 194h1v4h-1zM703 194h1v4h-1zM470 198h1v3h-1zM560 198h1v3h-1zM600 198h1v3h-1zM332 201h1v4h-1zM470 201h1v4h-1zM511 201h1v4h-1zM602 201h1v4h-1zM452 205h1v4h-1zM515 205h1v4h-1zM515 209h1v3h-1zM605 212h1v4h-1zM521 216h2v4h-2zM514 220h1v3h-1zM556 220h1v3h-1zM520 223h1v4h-1zM523 223h1v4h-1zM556 223h1v4h-1zM561 223h1v4h-1zM611 223h1v4h-1zM135 227h1v4h-1zM517 227h1v4h-1zM543 227h2v4h-2zM561 227h1v4h-1zM591 227h2v4h-2zM612 227h1v4h-1zM702 227h2v4h-2zM507 231h1v3h-1zM591 231h1v3h-1zM547 234h1v4h-1zM561 234h1v4h-1zM404 238h1v4h-1zM507 238h1v4h-1zM616 238h1v4h-1zM404 242h1v3h-1zM507 242h1v3h-1zM617 242h1v3h-1zM404 245h1v4h-1zM507 245h1v4h-1zM530 245h1v4h-1zM560 245h1v4h-1zM224 249h2v3h-2zM404 249h1v3h-1zM506 249h2v3h-2zM550 249h1v3h-1zM563 249h1v3h-1zM223 252h1v4h-1zM404 252h1v4h-1zM507 252h1v4h-1zM562 252h2v4h-2zM594 252h1v4h-1zM382 256h1v4h-1zM404 256h1v4h-1zM507 256h1v4h-1zM531 256h1v4h-1zM560 256h1v4h-1zM563 256h1v4h-1zM202 260h1v3h-1zM362 260h2v3h-2zM382 260h1v3h-1zM391 260h1v3h-1zM507 260h1v3h-1zM515 260h1v3h-1zM559 260h2v3h-2zM563 260h1v3h-1zM202 263h1v4h-1zM297 263h1v4h-1zM339 263h1v4h-1zM363 263h1v4h-1zM382 263h1v4h-1zM391 263h1v4h-1zM507 263h2v4h-2zM515 263h1v4h-1zM524 263h1v4h-1zM551 263h1v4h-1zM560 263h1v4h-1zM563 263h1v4h-1zM567 263h1v4h-1zM131 267h1v4h-1zM137 267h2v4h-2zM226 267h1v4h-1zM297 267h2v4h-2zM330 267h1v4h-1zM340 267h1v4h-1zM365 267h1v4h-1zM382 267h1v4h-1zM391 267h2v4h-2zM507 267h1v4h-1zM515 267h1v4h-1zM536 267h1v4h-1zM560 267h1v4h-1zM563 267h1v4h-1zM131 271h1v3h-1zM226 271h1v3h-1zM245 271h1v3h-1zM338 271h1v3h-1zM360 271h1v3h-1zM382 271h1v3h-1zM391 271h3v3h-3zM507 271h1v3h-1zM515 271h1v3h-1zM540 271h1v3h-1zM560 271h1v3h-1zM147 274h1v4h-1zM226 274h1v4h-1zM229 274h1v4h-1zM257 274h2v4h-2zM324 274h2v4h-2zM329 274h1v4h-1zM337 274h1v4h-1zM347 274h1v4h-1zM382 274h1v4h-1zM391 274h1v4h-1zM507 274h1v4h-1zM527 274h1v4h-1zM121 278h1v4h-1zM147 278h1v4h-1zM189 278h1v4h-1zM226 278h1v4h-1zM270 278h2v4h-2zM341 278h1v4h-1zM382 278h1v4h-1zM391 278h1v4h-1zM507 278h1v4h-1zM522 278h1v4h-1zM537 278h1v4h-1zM540 278h4v4h-4zM547 278h1v4h-1zM554 278h1v4h-1zM563 278h1v4h-1zM124 282h1v3h-1zM130 282h1v3h-1zM226 282h1v3h-1zM256 282h1v3h-1zM258 282h1v3h-1zM270 282h1v3h-1zM272 282h1v3h-1zM325 282h2v3h-2zM382 282h1v3h-1zM391 282h2v3h-2zM507 282h1v3h-1zM510 282h1v3h-1zM522 282h3v3h-3zM132 285h1v4h-1zM226 285h1v4h-1zM228 285h1v4h-1zM258 285h1v4h-1zM295 285h1v4h-1zM299 285h1v4h-1zM323 285h3v4h-3zM328 285h1v4h-1zM332 285h1v4h-1zM382 285h1v4h-1zM391 285h1v4h-1zM507 285h1v4h-1zM559 285h3v4h-3zM226 289h1v4h-1zM229 289h1v4h-1zM245 289h1v4h-1zM251 289h1v4h-1zM325 289h1v4h-1zM382 289h1v4h-1zM507 289h1v4h-1zM571 289h1v4h-1zM651 289h1v4h-1zM148 293h1v3h-1zM190 293h1v3h-1zM229 293h1v3h-1zM240 293h1v3h-1zM242 293h1v3h-1zM245 293h2v3h-2zM325 293h1v3h-1zM339 293h1v3h-1zM507 293h1v3h-1zM572 293h1v3h-1zM630 293h1v3h-1zM632 293h1v3h-1zM651 293h1v3h-1zM130 296h1v4h-1zM148 296h1v4h-1zM226 296h1v4h-1zM229 296h1v4h-1zM245 296h2v4h-2zM325 296h1v4h-1zM327 296h1v4h-1zM339 296h1v4h-1zM383 296h1v4h-1zM574 296h1v4h-1zM629 296h1v4h-1zM633 296h3v4h-3zM651 296h1v4h-1zM120 300h1v3h-1zM130 300h1v3h-1zM148 300h1v3h-1zM226 300h1v3h-1zM229 300h1v3h-1zM245 300h2v3h-2zM271 300h1v3h-1zM325 300h1v3h-1zM339 300h1v3h-1zM383 300h1v3h-1zM506 300h1v3h-1zM613 300h1v3h-1zM636 300h3v3h-3zM120 303h1v4h-1zM229 303h1v4h-1zM246 303h1v4h-1zM271 303h1v4h-1zM333 303h1v4h-1zM339 303h1v4h-1zM383 303h1v4h-1zM388 303h1v4h-1zM505 303h2v4h-2zM612 303h1v4h-1zM636 303h2v4h-2zM639 303h3v4h-3zM81 307h3v4h-3zM89 307h2v4h-2zM95 307h3v4h-3zM120 307h1v4h-1zM206 307h1v4h-1zM228 307h1v4h-1zM246 307h1v4h-1zM271 307h1v4h-1zM274 307h1v4h-1zM279 307h2v4h-2zM317 307h3v4h-3zM333 307h1v4h-1zM353 307h2v4h-2zM371 307h5v4h-5zM377 307h2v4h-2zM383 307h1v4h-1zM386 307h2v4h-2zM395 307h3v4h-3zM401 307h1v4h-1zM409 307h3v4h-3zM413 307h5v4h-5zM425 307h1v4h-1zM442 307h1v4h-1zM454 307h1v4h-1zM480 307h8v4h-8zM608 307h1v4h-1zM611 307h2v4h-2zM638 307h1v4h-1zM644 307h2v4h-2zM100 311h3v3h-3zM110 311h13v3h-13zM124 311h2v3h-2zM131 311h1v3h-1zM138 311h4v3h-4zM147 311h1v3h-1zM167 311h2v3h-2zM172 311h1v3h-1zM175 311h1v3h-1zM179 311h4v3h-4zM187 311h1v3h-1zM189 311h1v3h-1zM199 311h2v3h-2zM204 311h6v3h-6zM222 311h1v3h-1zM240 311h2v3h-2zM246 311h1v3h-1zM254 311h2v3h-2zM259 311h2v3h-2zM263 311h1v3h-1zM276 311h1v3h-1zM280 311h5v3h-5zM286 311h1v3h-1zM290 311h1v3h-1zM297 311h1v3h-1zM303 311h3v3h-3zM308 311h8v3h-8zM325 311h2v3h-2zM328 311h1v3h-1zM336 311h4v3h-4zM341 311h2v3h-2zM497 311h3v3h-3zM579 311h2v3h-2zM582 311h2v3h-2zM591 311h5v3h-5zM607 311h1v3h-1zM620 311h2v3h-2zM649 311h3v3h-3zM658 311h1v3h-1zM664 311h1v3h-1zM673 311h1v3h-1zM676 311h1v3h-1zM678 311h5v3h-5zM686 311h1v3h-1zM707 311h1v3h-1zM714 311h1v3h-1zM171 314h2v4h-2zM210 314h6v4h-6zM250 314h2v4h-2zM255 314h1v4h-1zM259 314h1v4h-1zM307 314h3v4h-3zM328 314h1v4h-1zM339 314h1v4h-1zM342 314h2v4h-2zM345 314h10v4h-10zM357 314h1v4h-1zM359 314h1v4h-1zM361 314h2v4h-2zM377 314h1v4h-1zM404 314h1v4h-1zM427 314h1v4h-1zM445 314h1v4h-1zM487 314h2v4h-2zM622 314h2v4h-2zM644 314h5v4h-5zM86 318h2v4h-2zM116 318h3v4h-3zM166 318h1v4h-1zM173 318h1v4h-1zM182 318h1v4h-1zM194 318h3v4h-3zM201 318h1v4h-1zM203 318h1v4h-1zM215 318h3v4h-3zM227 318h1v4h-1zM241 318h2v4h-2zM245 318h1v4h-1zM261 318h2v4h-2zM269 318h1v4h-1zM290 318h1v4h-1zM323 318h1v4h-1zM382 318h1v4h-1zM451 318h1v4h-1zM487 318h1v4h-1zM578 318h4v4h-4zM604 318h1v4h-1zM649 318h1v4h-1zM681 318h4v4h-4zM696 318h1v4h-1zM709 318h3v4h-3zM714 318h1v4h-1zM717 318h3v4h-3zM106 322h1v3h-1zM201 322h2v3h-2zM206 322h2v3h-2zM342 322h1v3h-1zM610 322h1v3h-1zM622 322h1v3h-1zM637 322h2v3h-2zM647 322h1v3h-1zM119 325h1v4h-1zM216 325h1v4h-1zM335 325h1v4h-1zM608 325h2v4h-2zM119 329h1v4h-1zM131 329h5v4h-5zM140 329h1v4h-1zM146 329h3v4h-3zM154 329h1v4h-1zM171 329h1v4h-1zM190 329h1v4h-1zM204 329h2v4h-2zM227 329h1v4h-1zM261 329h1v4h-1zM267 329h1v4h-1zM276 329h1v4h-1zM279 329h2v4h-2zM284 329h2v4h-2zM304 329h4v4h-4zM327 329h4v4h-4zM338 329h4v4h-4zM350 329h2v4h-2zM369 329h1v4h-1zM397 329h1v4h-1zM408 329h2v4h-2zM420 329h6v4h-6zM427 329h3v4h-3zM448 329h1v4h-1zM450 329h2v4h-2zM453 329h1v4h-1zM467 329h1v4h-1zM469 329h8v4h-8zM479 329h1v4h-1zM483 329h3v4h-3zM493 329h3v4h-3zM500 329h1v4h-1zM607 329h1v4h-1zM581 333h3v3h-3zM600 333h1v3h-1zM653 333h1v3h-1zM661 333h3v3h-3zM672 333h5v3h-5zM703 333h1v3h-1zM715 333h1v3h-1zM718 333h1v3h-1z"/>
<rect x="765" y="23" width="7" height="1" fill="#fffff0"/><rect x="765" y="24" width="7" height="1" fill="#ffffee"/><rect x="765" y="25" width="7" height="1" fill="#ffffeb"/><rect x="765" y="26" width="7" height="1" fill="#ffffe9"/><rect x="765" y="27" width="7" height="1" fill="#ffffe7"/><rect x="765" y="28" width="7" height="1" fill="#ffffe5"/><rect x="765" y="29" width="7" height="1" fill="#ffffe2"/><rect x="765" y="30" width="7" height="1" fill="#ffffe0"/><rect x="765" y="31" width="7" height="1" fill="#ffffde"/><rect x="765" y="32" width="7" height="1" fill="#ffffdb"/><rect x="765" y="33" width="7" height="1" fill="#ffffd9"/><rect x="765" y="34" width="7" height="1" fill="#ffffd7"/><rect x="765" y="35" width="7" height="1" fill="#ffffd5"/><rect x="765" y="36" width="7" height="1" fill="#ffffd2"/><rect x="765" y="37" width="7" height="1" fill="#ffffd0"/><rect x="765" y="38" width="7" height="1" fill="#ffffce"/><rect x="765" y="39" width="7" height="1" fill="#ffffcb"/><rect x="765" y="40" width="7" height="1" fill="#ffffc9"/><rect x="765" y="41" width="7" height="1" fill="#ffffc7"/><rect x="765" y="42" width="7" height="1" fill="#ffffc5"/><rect x="765" y="43" width="7" height="1" fill="#ffffc2"/><rect x="765" y="44" width="7" height="1" fill="#ffffc0"/><rect x="765" y="45" width="7" height="1" fill="#ffffbe"/><rect x="765" y="46" width="7" height="1" fill="#ffffbb"/><rect x="765" y="47" width="7" height="1" fill="#ffffb9"/><rect x="765" y="48" width="7" height="1" fill="#ffffb7"/><rect x="765" y="49" width="7" height="1" fill="#ffffb5"/><rect x="765" y="50" width="7" height="1" fill="#ffffb1"/><rect x="765" y="51" width="7" height="1" fill="#ffffad"/><rect x="765" y="52" width="7" height="1" fill="#ffffaa"/><rect x="765" y="53" width="7" height="1" fill="#ffffa6"/><rect x="765" y="54" width="7" height="1" fill="#ffffa2"/><rect x="765" y="55" width="7" height="1" fill="#ffff9e"/><rect x="765" y="56" width="7" height="1" fill="#ffff9a"/><rect x="765" y="57" width="7" height="1" fill="#ffff96"/><rect x="765" y="58" width="7" height="1" fill="#ffff93"/><rect x="765" y="59" width="7" height="1" fill="#ffff8f"/><rect x="765" y="60" width="7" height="1" fill="#ffff8b"/><rect x="765" y="61" width="7" height="1" fill="#ffff87"/><rect x="765" y="62" width="7" height="1" fill="#ffff83"/><rect x="765" y="63" width="7" height="1" fill="#ffff80"/><rect x="765" y="64" width="7" height="1" fill="#ffff7c"/><rect x="765" y="65" width="7" height="1" fill="#ffff78"/><rect x="765" y="66" width="7" height="1" fill="#ffff74"/><rect x="765" y="67" width="7" height="1" fill="#ffff70"/><rect x="765" y="68" width="7" height="1" fill="#ffff6d"/><rect x="765" y="69" width="7" height="1" fill="#ffff69"/><rect x="765" y="70" width="7" height="1" fill="#ffff65"/><rect x="765" y="71" width="7" height="1" fill="#ffff61"/><rect x="765" y="72" width="7" height="1" fill="#ffff5d"/><rect x="765" y="73" width="7" height="1" fill="#ffff5a"/><rect x="765" y="74" width="7" height="1" fill="#ffff56"/><rect x="765" y="75" width="7" height="1" fill="#ffff52"/><rect x="765" y="76" width="7" height="1" fill="#ffff4f"/><rect x="765" y="77" width="7" height="1" fill="#ffff4b"/><rect x="765" y="78" width="7" height="1" fill="#fffe48"/><rect x="765" y="79" width="7" height="1" fill="#fffe45"/><rect x="765" y="80" width="7" height="1" fill="#fffe42"/><rect x="765" y="81" width="7" height="1" fill="#fffe3f"/><rect x="765" y="82" width="7" height="1" fill="#fffd3c"/><rect x="765" y="83" width="7" height="1" fill="#fffd39"/><rect x="765" y="84" width="7" height="1" fill="#fffd36"/><rect x="765" y="85" width="7" height="1" fill="#fffd33"/><rect x="765" y="86" width="7" height="1" fill="#fffc30"/><rect x="765" y="87" width="7" height="1" fill="#fffc2d"/><rect x="765" y="88" width="7" height="1" fill="#fffc2a"/><rect x="765" y="89" width="7" height="1" fill="#fffc27"/><rect x="765" y="90" width="7" height="1" fill="#fffb24"/><rect x="765" y="91" width="7" height="1" fill="#fffb21"/><rect x="765" y="92" width="7" height="1" fill="#fffb1e"/><rect x="765" y="93" width="7" height="1" fill="#fffb1b"/><rect x="765" y="94" width="7" height="1" fill="#fffa18"/><rect x="765" y="95" width="7" height="1" fill="#fffa15"/><rect x="765" y="96" width="7" height="1" fill="#fef913"/><rect x="765" y="97" width="7" height="1" fill="#fdf811"/><rect x="765" y="98" width="7" height="1" fill="#fcf710"/><rect x="765" y="99" width="7" height="1" fill="#fbf60e"/><rect x="765" y="100" width="7" height="1" fill="#faf50d"/><rect x="765" y="101" width="7" height="1" fill="#f8f30b"/><rect x="765" y="102" width="7" height="1" fill="#f7f20a"/><rect x="765" y="103" width="7" height="1" fill="#f6f108"/><rect x="765" y="104" width="7" height="1" fill="#f5f007"/><rect x="765" y="105" width="7" height="1" fill="#f4ef05"/><rect x="765" y="106" width="7" height="1" fill="#f3ee04"/><rect x="765" y="107" width="7" height="1" fill="#f2ed02"/><rect x="765" y="108" width="7" height="1" fill="#f0eb00"/><rect x="765" y="109" width="7" height="1" fill="#eee900"/><rect x="765" y="110" width="7" height="1" fill="#eae500"/><rect x="765" y="111" width="7" height="1" fill="#e7e200"/><rect x="765" y="112" width="7" height="1" fill="#e3de00"/><rect x="765" y="113" width="7" height="1" fill="#dfdb00"/><rect x="765" y="114" width="7" height="1" fill="#dcd800"/><rect x="765" y="115" width="7" height="1" fill="#d8d400"/><rect x="765" y="116" width="7" height="1" fill="#d5d100"/><rect x="765" y="117" width="7" height="1" fill="#d1cd00"/><rect x="765" y="118" width="7" height="1" fill="#ceca00"/><rect x="765" y="119" width="7" height="1" fill="#cac600"/><rect x="765" y="120" width="7" height="1" fill="#c7c300"/><rect x="765" y="121" width="7" height="1" fill="#c3bf00"/><rect x="765" y="122" width="7" height="1" fill="#c0bc00"/><rect x="765" y="123" width="7" height="1" fill="#bcb900"/><rect x="765" y="124" width="7" height="1" fill="#b8b500"/><rect x="765" y="125" width="7" height="1" fill="#b5b200"/><rect x="765" y="126" width="7" height="1" fill="#b1ae00"/><rect x="765" y="127" width="7" height="1" fill="#aeab00"/><rect x="765" y="128" width="7" height="1" fill="#aaa700"/><rect x="765" y="129" width="7" height="1" fill="#a7a400"/><rect x="765" y="130" width="7" height="1" fill="#a3a100"/><rect x="765" y="131" width="7" height="1" fill="#a09d00"/><rect x="765" y="132" width="7" height="1" fill="#9c9a00"/><rect x="765" y="133" width="7" height="1" fill="#999600"/><rect x="765" y="134" width="7" height="1" fill="#959300"/><rect x="765" y="135" width="7" height="1" fill="#918f00"/><rect x="765" y="136" width="7" height="1" fill="#8e8c00"/><rect x="765" y="137" width="7" height="1" fill="#8f8b00"/><rect x="765" y="138" width="7" height="1" fill="#968c00"/><rect x="765" y="139" width="7" height="1" fill="#9d8d00"/><rect x="765" y="140" width="7" height="1" fill="#a48f00"/><rect x="765" y="141" width="7" height="1" fill="#ab9000"/><rect x="765" y="142" width="7" height="1" fill="#b39100"/><rect x="765" y="143" width="7" height="1" fill="#ba9200"/><rect x="765" y="144" width="7" height="1" fill="#c19400"/><rect x="765" y="145" width="7" height="1" fill="#c89500"/><rect x="765" y="146" width="7" height="1" fill="#cf9600"/><rect x="765" y="147" width="7" height="1" fill="#d49700"/><rect x="765" y="148" width="7" height="1" fill="#da9900"/><rect x="765" y="149" width="7" height="1" fill="#e09a00"/><rect x="765" y="150" width="7" height="1" fill="#e69b00"/><rect x="765" y="151" width="7" height="1" fill="#ec9c00"/><rect x="765" y="152" width="7" height="1" fill="#f29d00"/><rect x="765" y="153" width="7" height="1" fill="#f89f00"/><rect x="765" y="154" width="7" height="1" fill="#fda000"/><rect x="765" y="155" width="7" height="1" fill="#ffa002"/><rect x="765" y="156" width="7" height="1" fill="#ff9f05"/><rect x="765" y="157" width="7" height="1" fill="#ff9e08"/><rect x="765" y="158" width="7" height="1" fill="#ff9e0b"/><rect x="765" y="159" width="7" height="1" fill="#ff9d0e"/><rect x="765" y="160" width="7" height="1" fill="#ff9d11"/><rect x="765" y="161" width="7" height="1" fill="#ff9c14"/><rect x="765" y="162" width="7" height="1" fill="#ff9b18"/><rect x="765" y="163" width="7" height="1" fill="#ff9b1b"/><rect x="765" y="164" width="7" height="1" fill="#ff9a1e"/><rect x="765" y="165" width="7" height="1" fill="#ff9921"/><rect x="765" y="166" width="7" height="1" fill="#ff9924"/><rect x="765" y="167" width="7" height="1" fill="#ff9827"/><rect x="765" y="168" width="7" height="1" fill="#ff982a"/><rect x="765" y="169" width="7" height="1" fill="#ff972d"/><rect x="765" y="170" width="7" height="1" fill="#ff9630"/><rect x="765" y="171" width="7" height="1" fill="#ff9633"/><rect x="765" y="172" width="7" height="1" fill="#ff9535"/><rect x="765" y="173" width="7" height="1" fill="#ff9437"/><rect x="765" y="174" width="7" height="1" fill="#ff933a"/><rect x="765" y="175" width="7" height="1" fill="#ff923c"/><rect x="765" y="176" width="7" height="1" fill="#ff913e"/><rect x="765" y="177" width="7" height="1" fill="#ff9041"/><rect x="765" y="178" width="7" height="1" fill="#ff8f43"/><rect x="765" y="179" width="7" height="1" fill="#ff8e45"/><rect x="765" y="180" width="7" height="1" fill="#ff8d48"/><rect x="765" y="181" width="7" height="1" fill="#ff8c4a"/><rect x="765" y="182" width="7" height="1" fill="#ff8b4c"/><rect x="765" y="183" width="7" height="1" fill="#ff8a4f"/><rect x="765" y="184" width="7" height="1" fill="#ff8951"/><rect x="765" y="185" width="7" height="1" fill="#ff8853"/><rect x="765" y="186" width="7" height="1" fill="#ff8654"/><rect x="765" y="187" width="7" height="1" fill="#ff8250"/><rect x="765" y="188" width="7" height="1" fill="#ff7e4b"/><rect x="765" y="189" width="7" height="1" fill="#ff7a46"/><rect x="765" y="190" width="7" height="1" fill="#ff7542"/><rect x="765" y="191" width="7" height="1" fill="#ff713d"/><rect x="765" y="192" width="7" height="1" fill="#ff6d39"/><rect x="765" y="193" width="7" height="1" fill="#ff6934"/><rect x="765" y="194" width="7" height="1" fill="#ff6530"/><rect x="765" y="195" width="7" height="1" fill="#ff612b"/><rect x="765" y="196" width="7" height="1" fill="#ff5d27"/><rect x="765" y="197" width="7" height="1" fill="#ff5822"/><rect x="765" y="198" width="7" height="1" fill="#ff541e"/><rect x="765" y="199" width="7" height="1" fill="#ff5019"/><rect x="765" y="200" width="7" height="1" fill="#ff4c15"/><rect x="765" y="201" width="7" height="1" fill="#ff4813"/><rect x="765" y="202" width="7" height="1" fill="#ff4512"/><rect x="765" y="203" width="7" height="1" fill="#ff4212"/><rect x="765" y="204" width="7" height="1" fill="#ff3f11"/><rect x="765" y="205" width="7" height="1" fill="#ff3b10"/><rect x="765" y="206" width="7" height="1" fill="#ff380f"/><rect x="765" y="207" width="7" height="1" fill="#ff350e"/><rect x="765" y="208" width="7" height="1" fill="#ff320d"/><rect x="765" y="209" width="7" height="1" fill="#ff2e0c"/><rect x="765" y="210" width="7" height="1" fill="#ff2b0b"/><rect x="765" y="211" width="7" height="1" fill="#ff280b"/><rect x="765" y="212" width="7" height="1" fill="#ff250a"/><rect x="765" y="213" width="7" height="1" fill="#ff2109"/><rect x="765" y="214" width="7" height="1" fill="#ff1e08"/><rect x="765" y="215" width="7" height="1" fill="#ff1b07"/><rect x="765" y="216" width="7" height="1" fill="#ff1706"/><rect x="765" y="217" width="7" height="1" fill="#ff1405"/><rect x="765" y="218" width="7" height="1" fill="#ff1105"/><rect x="765" y="219" width="7" height="1" fill="#ff0e04"/><rect x="765" y="220" width="7" height="1" fill="#ff0a03"/><rect x="765" y="221" width="7" height="1" fill="#ff0702"/><rect x="765" y="222" width="7" height="1" fill="#ff0401"/><rect x="765" y="223" width="7" height="1" fill="#ff0100"/><rect x="765" y="224" width="7" height="1" fill="#fb0001"/><rect x="765" y="225" width="7" height="1" fill="#f60002"/><rect x="765" y="226" width="7" height="1" fill="#f10003"/><rect x="765" y="227" width="7" height="1" fill="#ec0003"/><rect x="765" y="228" width="7" height="1" fill="#e80004"/><rect x="765" y="229" width="7" height="1" fill="#e30005"/><rect x="765" y="230" width="7" height="1" fill="#de0006"/><rect x="765" y="231" width="7" height="1" fill="#d90007"/><rect x="765" y="232" width="7" height="1" fill="#d40008"/><rect x="765" y="233" width="7" height="1" fill="#cf0009"/><rect x="765" y="234" width="7" height="1" fill="#ca000a"/><rect x="765" y="235" width="7" height="1" fill="#c5000b"/><rect x="765" y="236" width="7" height="1" fill="#c1000c"/><rect x="765" y="237" width="7" height="1" fill="#bc000d"/><rect x="765" y="238" width="7" height="1" fill="#b7000e"/><rect x="765" y="239" width="7" height="1" fill="#b2000e"/><rect x="765" y="240" width="7" height="1" fill="#ae0010"/><rect x="765" y="241" width="7" height="1" fill="#ab0013"/><rect x="765" y="242" width="7" height="1" fill="#a80016"/><rect x="765" y="243" width="7" height="1" fill="#a50018"/><rect x="765" y="244" width="7" height="1" fill="#a2001b"/><rect x="765" y="245" width="7" height="1" fill="#9f001e"/><rect x="765" y="246" width="7" height="1" fill="#9b0021"/><rect x="765" y="247" width="7" height="1" fill="#980023"/><rect x="765" y="248" width="7" height="1" fill="#950026"/><rect x="765" y="249" width="7" height="1" fill="#920029"/><rect x="765" y="250" width="7" height="1" fill="#8f002c"/><rect x="765" y="251" width="7" height="1" fill="#8c002e"/><rect x="765" y="252" width="7" height="1" fill="#890031"/><rect x="765" y="253" width="7" height="1" fill="#860034"/><rect x="765" y="254" width="7" height="1" fill="#830036"/><rect x="765" y="255" width="7" height="1" fill="#800039"/><rect x="765" y="256" width="7" height="1" fill="#7d003c"/><rect x="765" y="257" width="7" height="1" fill="#7b003f"/><rect x="765" y="258" width="7" height="1" fill="#7a0043"/><rect x="765" y="259" width="7" height="1" fill="#780046"/><rect x="765" y="260" width="7" height="1" fill="#770049"/><rect x="765" y="261" width="7" height="1" fill="#75004c"/><rect x="765" y="262" width="7" height="1" fill="#740050"/><rect x="765" y="263" width="7" height="1" fill="#720053"/><rect x="765" y="264" width="7" height="1" fill="#710056"/><rect x="765" y="265" width="7" height="1" fill="#6f005a"/><rect x="765" y="266" width="7" height="1" fill="#6e005d"/><rect x="765" y="267" width="7" height="1" fill="#6c0060"/><rect x="765" y="268" width="7" height="1" fill="#6b0064"/><rect x="765" y="269" width="7" height="1" fill="#690067"/><rect x="765" y="270" width="7" height="1" fill="#68006a"/><rect x="765" y="271" width="7" height="1" fill="#66006d"/><rect x="765" y="272" width="7" height="1" fill="#650071"/><rect x="765" y="273" width="7" height="1" fill="#630074"/><rect x="765" y="274" width="7" height="1" fill="#620077"/><rect x="765" y="275" width="7" height="1" fill="#60007b"/><rect x="765" y="276" width="7" height="1" fill="#5f007e"/><rect x="765" y="277" width="7" height="1" fill="#5f0081"/><rect x="765" y="278" width="7" height="1" fill="#5e0083"/><rect x="765" y="279" width="7" height="1" fill="#5e0086"/><rect x="765" y="280" width="7" height="1" fill="#5e0089"/><rect x="765" y="281" width="7" height="1" fill="#5d008c"/><rect x="765" y="282" width="7" height="1" fill="#5d008e"/><rect x="765" y="283" width="7" height="1" fill="#5d0091"/><rect x="765" y="284" width="7" height="1" fill="#5c0094"/><rect x="765" y="285" width="7" height="1" fill="#5c0097"/><rect x="765" y="286" width="7" height="1" fill="#5c0099"/><rect x="765" y="287" width="7" height="1" fill="#5c009c"/><rect x="765" y="288" width="7" height="1" fill="#5b009f"/><rect x="765" y="289" width="7" height="1" fill="#5b00a1"/><rect x="765" y="290" width="7" height="1" fill="#5b00a4"/><rect x="765" y="291" width="7" height="1" fill="#5a00a7"/><rect x="765" y="292" width="7" height="1" fill="#5a00aa"/><rect x="765" y="293" width="7" height="1" fill="#5800ad"/><rect x="765" y="294" width="7" height="1" fill="#5500b0"/><rect x="765" y="295" width="7" height="1" fill="#5200b4"/><rect x="765" y="296" width="7" height="1" fill="#4f00b7"/><rect x="765" y="297" width="7" height="1" fill="#4d00ba"/><rect x="765" y="298" width="7" height="1" fill="#4a00be"/><rect x="765" y="299" width="7" height="1" fill="#4700c1"/><rect x="765" y="300" width="7" height="1" fill="#4400c4"/><rect x="765" y="301" width="7" height="1" fill="#4200c8"/><rect x="765" y="302" width="7" height="1" fill="#3f00cb"/><rect x="765" y="303" width="7" height="1" fill="#3c00cf"/><rect x="765" y="304" width="7" height="1" fill="#3900d2"/><rect x="765" y="305" width="7" height="1" fill="#3700d5"/><rect x="765" y="306" width="7" height="1" fill="#3400d9"/><rect x="765" y="307" width="7" height="1" fill="#3100dc"/><rect x="765" y="308" width="7" height="1" fill="#2e00df"/><rect x="765" y="309" width="7" height="1" fill="#2b00e2"/><rect x="765" y="310" width="7" height="1" fill="#2800e4"/><rect x="765" y="311" width="7" height="1" fill="#2400e7"/><rect x="765" y="312" width="7" height="1" fill="#2100e9"/><rect x="765" y="313" width="7" height="1" fill="#1e00eb"/><rect x="765" y="314" width="7" height="1" fill="#1a00ee"/><rect x="765" y="315" width="7" height="1" fill="#1700f0"/><rect x="765" y="316" width="7" height="1" fill="#1300f2"/><rect x="765" y="317" width="7" height="1" fill="#1000f4"/><rect x="765" y="318" width="7" height="1" fill="#0c00f7"/><rect x="765" y="319" width="7" height="1" fill="#0900f9"/><rect x="765" y="320" width="7" height="1" fill="#0600fb"/><rect x="765" y="321" width="7" height="1" fill="#0200fe"/><rect x="765" y="322" width="7" height="1" fill="#0000fe"/><rect x="765" y="323" width="7" height="1" fill="#0000fa"/><rect x="765" y="324" width="7" height="1" fill="#0000f7"/><rect x="765" y="325" width="7" height="1" fill="#0000f4"/><rect x="765" y="326" width="7" height="1" fill="#0000f0"/><rect x="765" y="327" width="7" height="1" fill="#0000ed"/><rect x="765" y="328" width="7" height="1" fill="#0000ea"/><rect x="765" y="329" width="7" height="1" fill="#0000e6"/><rect x="765" y="330" width="7" height="1" fill="#0000e3"/><rect x="765" y="331" width="7" height="1" fill="#0000e0"/><rect x="765" y="332" width="7" height="1" fill="#0000dc"/><rect x="765" y="333" width="7" height="1" fill="#0000d9"/><rect x="765" y="334" width="7" height="1" fill="#0000d6"/><rect x="765" y="335" width="7" height="1" fill="#0000d2"/><rect x="765" y="336" width="7" height="1" fill="#0000cf"/><rect x="765" y="337" width="7" height="1" fill="#0000cc"/><rect x="765" y="338" width="7" height="1" fill="#0000c8"/><rect x="765" y="339" width="7" height="1" fill="#0000c3"/><rect x="765" y="340" width="7" height="1" fill="#0000be"/><rect x="765" y="341" width="7" height="1" fill="#0000b9"/><rect x="765" y="342" width="7" height="1" fill="#0000b4"/><rect x="765" y="343" width="7" height="1" fill="#0000af"/><rect x="765" y="344" width="7" height="1" fill="#0000aa"/><rect x="765" y="345" width="7" height="1" fill="#0000a5"/><rect x="765" y="346" width="7" height="1" fill="#0000a0"/><rect x="765" y="347" width="7" height="1" fill="#00009b"/><rect x="765" y="348" width="7" height="1" fill="#000095"/><rect x="765" y="349" width="7" height="1" fill="#000090"/><rect x="765" y="350" width="7" height="1" fill="#00008b"/><rect x="765" y="351" width="7" height="1" fill="#000086"/><rect x="765" y="352" width="7" height="1" fill="#000081"/><rect x="765" y="353" width="7" height="1" fill="#00007c"/><rect x="765" y="354" width="7" height="1" fill="#000077"/><rect x="765" y="355" width="7" height="1" fill="#000072"/><rect x="765" y="356" width="7" height="1" fill="#00006d"/><rect x="765" y="357" width="7" height="1" fill="#000068"/><rect x="765" y="358" width="7" height="1" fill="#000063"/><rect x="765" y="359" width="7" height="1" fill="#00005e"/><rect x="765" y="360" width="7" height="1" fill="#000059"/><rect x="765" y="361" width="7" height="1" fill="#000054"/><rect x="765" y="362" width="7" height="1" fill="#010150"/><rect x="765" y="363" width="7" height="1" fill="#01014b"/><rect x="765" y="364" width="7" height="1" fill="#010146"/><rect x="765" y="365" width="7" height="1" fill="#010141"/><rect x="765" y="366" width="7" height="1" fill="#01013c"/><rect x="765" y="367" width="7" height="1" fill="#010137"/><rect x="765" y="368" width="7" height="1" fill="#010133"/><rect x="765" y="369" width="7" height="1" fill="#01012e"/><rect x="765" y="370" width="7" height="1" fill="#010129"/><rect x="765" y="371" width="7" height="1" fill="#020224"/><rect x="765" y="372" width="7" height="1" fill="#02021f"/><rect x="765" y="373" width="7" height="1" fill="#02021b"/><rect x="765" y="374" width="7" height="1" fill="#020216"/><rect x="765" y="375" width="7" height="1" fill="#020214"/><rect x="765" y="376" width="7" height="1" fill="#020212"/><rect x="765" y="377" width="7" height="1" fill="#010110"/><rect x="765" y="378" width="7" height="1" fill="#01010e"/><rect x="765" y="379" width="7" height="1" fill="#01010d"/><rect x="765" y="380" width="7" height="1" fill="#01010b"/><rect x="765" y="381" width="7" height="1" fill="#010109"/><rect x="765" y="382" width="7" height="1" fill="#000007"/><rect x="765" y="383" width="7" height="1" fill="#000006"/>
</g>
<rect x="80.5" y="23.5" width="640" height="360" fill="none" stroke="#000" stroke-width="1"/>
<path d="M80 378.5h7M720 378.5h-7M80 363.5h7M720 363.5h-7M80 347.5h7M720 347.5h-7M80 332.5h14M720 332.5h-14M80 317.5h7M720 317.5h-7M80 301.5h7M720 301.5h-7M80 286.5h7M720 286.5h-7M80 271.5h7M720 271.5h-7M80 255.5h14M720 255.5h-14M80 240.5h7M720 240.5h-7M80 224.5h7M720 224.5h-7M80 209.5h7M720 209.5h-7M80 194.5h7M720 194.5h-7M80 178.5h14M720 178.5h-14M80 163.5h7M720 163.5h-7M80 148.5h7M720 148.5h-7M80 132.5h7M720 132.5h-7M80 117.5h7M720 117.5h-7M80 102.5h14M720 102.5h-14M80 86.5h7M720 86.5h-7M80 71.5h7M720 71.5h-7M80 56.5h7M720 56.5h-7M80 40.5h7M720 40.5h-7M80 25.5h14M720 25.5h-14M85.5 383v-5M85.5 23v5M117.5 383v-7M117.5 23v7M149.5 383v-5M149.5 23v5M181.5 383v-5M181.5 23v5M213.5 383v-5M213.5 23v5M245.5 383v-7M245.5 23v7M277.5 383v-5M277.5 23v5M309.5 383v-5M309.5 23v5M341.5 383v-5M341.5 23v5M373.5 383v-7M373.5 23v7M405.5 383v-5M405.5 23v5M437.5 383v-5M437.5 23v5M469.5 383v-5M469.5 23v5M501.5 383v-7M501.5 23v7M533.5 383v-5M533.5 23v5M565.5 383v-5M565.5 23v5M597.5 383v-5M597.5 23v5M629.5 383v-7M629.5 23v7M661.5 383v-5M661.5 23v5M693.5 383v-5M693.5 23v5" stroke="#000" stroke-width="1" fill="none"/>
<line x1="764.5" y1="23" x2="764.5" y2="384" stroke="#000"/>
<line x1="772.5" y1="23" x2="772.5" y2="384" stroke="#000"/>
<line x1="764" y1="383.5" x2="773" y2="383.5" stroke="#000"/>
<text x="145" y="14" font-size="10" textLength="117.7" lengthAdjust="spacingAndGlyphs">CPR Radar Return from</text>
<text x="268.7" y="14" font-size="10" textLength="81" lengthAdjust="spacingAndGlyphs">2008154174331</text>
<text x="349.7" y="14" font-size="10" textLength="234" lengthAdjust="spacingAndGlyphs">_00530_CS_1B-CPR_GRANULE_P_R00_E00.hdf</text>
<text x="78.6" y="29.4" font-size="9" text-anchor="end" textLength="9.3" lengthAdjust="spacingAndGlyphs">20</text>
<text x="78.6" y="106.4" font-size="9" text-anchor="end" textLength="9.3" lengthAdjust="spacingAndGlyphs">15</text>
<text x="78.6" y="182.4" font-size="9" text-anchor="end" textLength="9.3" lengthAdjust="spacingAndGlyphs">10</text>
<text x="78.6" y="259.4" font-size="9" text-anchor="end" textLength="5" lengthAdjust="spacingAndGlyphs">5</text>
<text x="78.6" y="336.4" font-size="9" text-anchor="end" textLength="5" lengthAdjust="spacingAndGlyphs">0</text>
<text x="110.0" y="395.4" font-size="8.8" textLength="15.5" lengthAdjust="spacingAndGlyphs">17.8</text>
<text x="238.0" y="395.4" font-size="8.8" textLength="15.5" lengthAdjust="spacingAndGlyphs">18.0</text>
<text x="366.0" y="395.4" font-size="8.8" textLength="15.5" lengthAdjust="spacingAndGlyphs">18.2</text>
<text x="494.0" y="395.4" font-size="8.8" textLength="15.5" lengthAdjust="spacingAndGlyphs">18.4</text>
<text x="622.0" y="395.4" font-size="8.8" textLength="15.5" lengthAdjust="spacingAndGlyphs">18.6</text>
<text x="360" y="405.6" font-size="7.6" textLength="80" lengthAdjust="spacingAndGlyphs">profile number/1000.</text>
<text x="0" y="0" font-size="8.2" textLength="42.5" lengthAdjust="spacingAndGlyphs" transform="translate(64,224) rotate(-90)">height (km)</text>
<text x="762.4" y="29.4" font-size="9" text-anchor="end" textLength="9.4" lengthAdjust="spacingAndGlyphs">20</text>
<text x="762.4" y="92.4" font-size="9" text-anchor="end" textLength="9.4" lengthAdjust="spacingAndGlyphs">10</text>
<text x="762.4" y="158.4" font-size="9" text-anchor="end" textLength="5" lengthAdjust="spacingAndGlyphs">0</text>
<text x="762.4" y="223.4" font-size="9" text-anchor="end" textLength="15.2" lengthAdjust="spacingAndGlyphs">&#8722;10</text>
<text x="762.4" y="288.9" font-size="9" text-anchor="end" textLength="15.2" lengthAdjust="spacingAndGlyphs">&#8722;20</text>
<text x="762.4" y="354.4" font-size="9" text-anchor="end" textLength="15.2" lengthAdjust="spacingAndGlyphs">&#8722;30</text>
<text x="0" y="0" font-size="8.4" textLength="9" lengthAdjust="spacingAndGlyphs" transform="translate(740,208) rotate(-90)">dB</text>
<text x="80.5" y="432.3" font-size="10.6" textLength="93.5" lengthAdjust="spacingAndGlyphs">Starting Lat &#8722;8.00</text>
<text x="80.5" y="456.3" font-size="10.6" textLength="102" lengthAdjust="spacingAndGlyphs">Starting Lon &#8722;70.96</text>
<text x="640.5" y="432.3" font-size="10.6" textLength="85.5" lengthAdjust="spacingAndGlyphs">Ending Lat 10.45</text>
<text x="640.5" y="456.3" font-size="10.6" textLength="94.5" lengthAdjust="spacingAndGlyphs">Ending Lon &#8722;74.91</text>
<rect x="555" y="65" width="149" height="16" fill="#ffff28"/>
<text x="557.5" y="76.6" font-size="12" textLength="143.5" lengthAdjust="spacingAndGlyphs">Start or resume execution.</text>
</svg>
</body></html>
